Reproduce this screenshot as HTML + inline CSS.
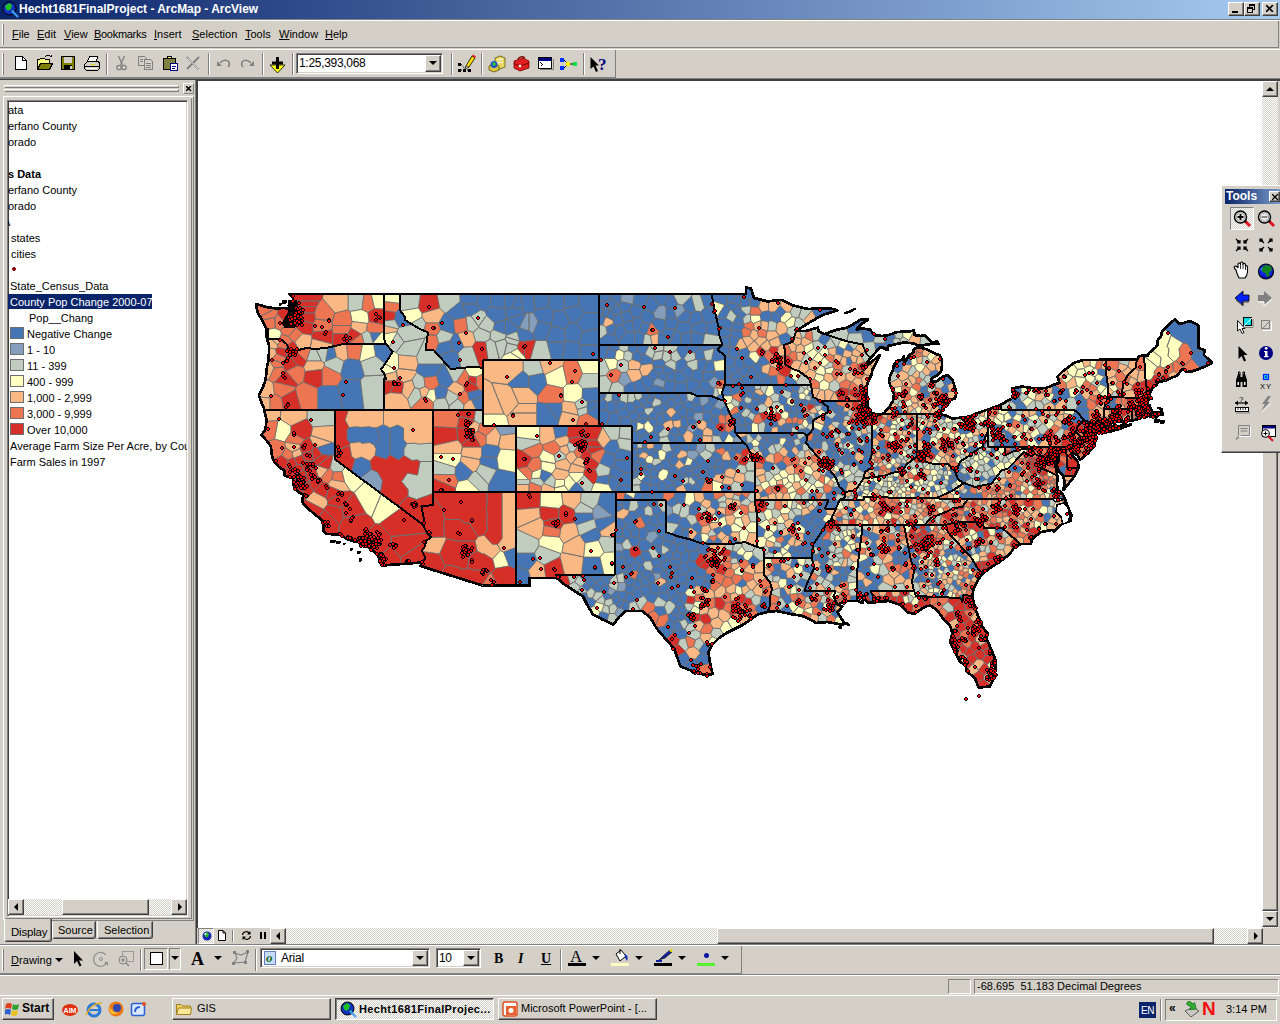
<!DOCTYPE html>
<html><head><meta charset="utf-8"><title>Hecht1681FinalProject - ArcMap - ArcView</title>
<style>
*{box-sizing:border-box;margin:0;padding:0}
html,body{width:1280px;height:1024px;overflow:hidden;background:#d4d0c8;font-family:"Liberation Sans",sans-serif;font-size:11px;color:#000}
.a{position:absolute}
.t{position:absolute;white-space:nowrap;line-height:13px;font-size:11px}
u{text-decoration:underline}
.raised{border:1px solid;border-color:#fff #404040 #404040 #fff;box-shadow:inset -1px -1px 0 #808080,inset 1px 1px 0 #d4d0c8;background:#d4d0c8}
.sunken{border:1px solid;border-color:#808080 #fff #fff #808080;box-shadow:inset 1px 1px 0 #404040,inset -1px -1px 0 #d4d0c8}
.sunk1{border:1px solid;border-color:#808080 #fff #fff #808080}
.rais1{border:1px solid;border-color:#fff #808080 #808080 #fff}
.dither{background-image:repeating-conic-gradient(#fff 0 25%,#d4d0c8 0 50%);background-size:2px 2px}
.sep{position:absolute;width:2px;border-left:1px solid #808080;border-right:1px solid #fff}
.arr{position:absolute;width:0;height:0;border:4px solid transparent}
.sb{position:absolute;width:16px;height:16px}
</style></head><body>
<!-- TITLE BAR -->
<div class="a" style="left:0;top:0;width:1280px;height:19px;background:linear-gradient(90deg,#0a246a,#a6caf0)"></div>
<svg class="a" style="left:2px;top:1px" width="17" height="17" viewBox="0 0 17 17"><circle cx="7.5" cy="7.5" r="6.5" fill="#1030c0" stroke="#000" stroke-width="1"/><path d="M3 5 L7 2 L10 4 L9 8 L6 10 L4 8Z" fill="#20c020"/><path d="M9 10 L12 9 L11 12Z" fill="#20c020"/><path d="M10 10 L16 16" stroke="#40a0ff" stroke-width="2"/></svg>
<div class="t" style="left:19px;top:2px;font-size:12px;font-weight:bold;color:#fff;line-height:14px;letter-spacing:-0.03px">Hecht1681FinalProject - ArcMap - ArcView</div>
<div class="a raised" style="left:1228px;top:2px;width:16px;height:14px"><div class="a" style="left:3px;top:8px;width:6px;height:2px;background:#000"></div></div>
<div class="a raised" style="left:1244px;top:2px;width:16px;height:14px"><div class="a" style="left:4px;top:1px;width:6px;height:6px;border:1px solid #000;border-top-width:2px"></div><div class="a" style="left:2px;top:4px;width:6px;height:6px;border:1px solid #000;border-top-width:2px;background:#d4d0c8"></div></div>
<div class="a raised" style="left:1262px;top:2px;width:16px;height:14px"><svg class="a" style="left:3px;top:2px" width="8" height="7"><path d="M0 0L7 7M7 0L0 7" stroke="#000" stroke-width="1.6"/></svg></div>
<div class="a" style="left:0;top:19px;width:1280px;height:1px;background:#808080"></div>
<div class="a" style="left:0;top:20px;width:1280px;height:1px;background:#fff"></div>
<!-- MENU BAR -->
<div class="a" style="left:0;top:21px;width:1279px;height:27px;border-right:1px solid #808080;border-bottom:1px solid #808080"></div>
<div class="a" style="left:2px;top:24px;width:2px;height:21px;border-left:1px solid #fff;border-right:1px solid #808080"></div>
<div class="t" style="left:12px;top:28px"><u>F</u>ile</div>
<div class="t" style="left:37px;top:28px"><u>E</u>dit</div>
<div class="t" style="left:64px;top:28px"><u>V</u>iew</div>
<div class="t" style="left:94px;top:28px;letter-spacing:-0.3px"><u>B</u>ookmarks</div>
<div class="t" style="left:154px;top:28px"><u>I</u>nsert</div>
<div class="t" style="left:192px;top:28px"><u>S</u>election</div>
<div class="t" style="left:245px;top:28px"><u>T</u>ools</div>
<div class="t" style="left:279px;top:28px"><u>W</u>indow</div>
<div class="t" style="left:325px;top:28px"><u>H</u>elp</div>
<!-- STANDARD TOOLBAR -->
<div class="a" style="left:0;top:49px;width:1280px;height:1px;background:#fff"></div>
<div class="a" style="left:0;top:50px;width:616px;height:28px;border-right:1px solid #808080;border-bottom:1px solid #808080"></div>
<div class="a" style="left:2px;top:53px;width:2px;height:22px;border-left:1px solid #fff;border-right:1px solid #808080"></div>
<div class="a" style="left:0;top:78px;width:1280px;height:1px;background:#808080"></div>
<div class="a" style="left:0;top:79px;width:1280px;height:1px;background:#404040"></div>
<svg class="a" style="left:0;top:50px" width="616" height="28" shape-rendering="crispEdges">
<!-- new -->
<path d="M15.500 6.500H22.500L26.500 10.500V19.500H15.500Z" fill="#fff" stroke="#000"/><path d="M22.500 6.500V10.500H26.500" fill="none" stroke="#000"/>
<!-- open -->
<path d="M37.500 19.500V9.500H39.500L40.500 8.500H44.500L45.500 9.500H49.500V12.500" fill="#ffff80" stroke="#000"/><path d="M37.500 19.500L40.500 13.500H52.500L49.500 19.500Z" fill="#808000" stroke="#000"/><path d="M45 7Q48 4 51 7" fill="none" stroke="#000"/><path d="M49 7H52V4Z" fill="#000"/>
<!-- save -->
<rect x="61.500" y="6.500" width="13" height="13" fill="#808000" stroke="#000"/><rect x="64" y="7" width="8" height="6" fill="#d4d0c8"/><rect x="64" y="15" width="8" height="5" fill="#000"/><rect x="70" y="16" width="2" height="3" fill="#d4d0c8"/>
<!-- print -->
<path d="M87.500 11.500L89.500 6.500H97.500L96.500 11.500" fill="#fff" stroke="#000"/><path d="M84.500 14.500L87.500 11.500H98.500L99.500 13.500V18.500L97.500 20.500H86.500L84.500 18.500Z" fill="#d4d0c8" stroke="#000"/><path d="M85 16.500H99" stroke="#000"/><rect x="91" y="14" width="4" height="1" fill="#e0d000"/><path d="M86 18.500H97" stroke="#fff"/>
<!-- cut (gray) -->
<g stroke="#808080" fill="none" stroke-width="1.300" shape-rendering="auto"><path d="M118.500 6L122.500 15M124.500 6L120.500 15"/><circle cx="119" cy="17.500" r="2.200"/><circle cx="124" cy="17.500" r="2.200"/></g>
<!-- copy (gray) -->
<g stroke="#808080" fill="#d4d0c8"><path d="M138.500 6.500H144.500L146.500 8.500V15.500H138.500Z"/><path d="M144.500 9.500H150.500L152.500 11.500V19.500H144.500Z"/><path d="M146 13.500H151M146 15.500H151M146 17.500H151M140 9.500H143M140 11.500H143" fill="none"/></g>
<!-- paste -->
<rect x="163.500" y="8.500" width="12" height="11" fill="#808040" stroke="#000"/><path d="M166.500 8.500L168 6.500H171L172.500 8.500Z" fill="#ffff80" stroke="#000"/><rect x="170.500" y="13.500" width="7" height="7" fill="#fff" stroke="#000080"/><path d="M172 16.500H176M172 18.500H175" stroke="#000080"/>
<!-- delete X gray -->
<g shape-rendering="auto"><path d="M187 7L199 20M199 7L187 19" stroke="#808080" stroke-width="1.800"/><path d="M188 8L200 21" stroke="#fff" stroke-width=".8"/></g>
<!-- undo / redo gray -->
<g shape-rendering="auto" fill="none" stroke="#808080" stroke-width="1.600"><path d="M220 13Q225 8 229 12Q230 15 228 17"/><path d="M251 13Q246 8 242 12Q241 15 243 17"/></g>
<path d="M217 11V16H222Z" fill="#808080" shape-rendering="auto"/><path d="M254 11V16H249Z" fill="#808080" shape-rendering="auto"/>
<!-- add data -->
<g shape-rendering="auto"><path d="M270 15H285L277.500 23Z" fill="#ffff00" stroke="#000" stroke-width=".8"/><path d="M277.500 7V19M272 13H283" stroke="#000" stroke-width="3"/></g>
<!-- editor -->
<g shape-rendering="auto"><path d="M459 20H470M461 14L465 19" stroke="#000" stroke-dasharray="1 1"/><rect x="458" y="19" width="3" height="3"/><rect x="463" y="19" width="3" height="3"/><rect x="468" y="19" width="3" height="3"/><rect x="458" y="13" width="3" height="3"/><path d="M466 16L472 6L475 8L469 17L465.500 18.500Z" fill="#ffe000" stroke="#000" stroke-width=".8"/><path d="M472 6L473 4.500L476 6.500L475 8Z" fill="#e02020"/><path d="M466 16L469 17L465.500 18.500Z" fill="#fff" stroke="#000" stroke-width=".5"/></g>
<!-- arccatalog -->
<g shape-rendering="auto"><path d="M495 8L500 6L505 8V17L500 19L495 17Z" fill="#e8d860" stroke="#605000" stroke-width=".8"/><path d="M497 10L503 9M497 13L503 12" stroke="#fff"/><path d="M489 16L494 13L499 16V20L494 22L489 20Z" fill="#d8c840" stroke="#605000" stroke-width=".8"/><circle cx="494" cy="14.500" r="3.500" fill="#2050d0"/><path d="M492 13L495 12L496 15L493 16Z" fill="#30c030"/></g>
<!-- toolbox -->
<g shape-rendering="auto"><path d="M514 11L523 8L529 11V18L520 21L514 18Z" fill="#e02020" stroke="#800000" stroke-width=".8"/><path d="M514 13.500L520 16L529 13" stroke="#800000" fill="none"/><path d="M518 9Q521 5 525 8" fill="none" stroke="#800000" stroke-width="1.500"/><circle cx="520" cy="16" r="1.300" fill="#fff"/></g>
<!-- command window -->
<rect x="538.500" y="7.500" width="13" height="11" fill="#fff" stroke="#000"/><rect x="539" y="8" width="12" height="3" fill="#000080"/><path d="M540.500 12.500L542.500 14.500L540.500 16.500" fill="none" stroke="#000"/><path d="M540 19.500H553V9" fill="none" stroke="#808080"/>
<!-- modelbuilder -->
<rect x="560" y="8" width="4" height="4" fill="#0030ff"/><rect x="560" y="16" width="4" height="4" fill="#0030ff"/><path d="M564 10L568 14L564 18M570 14H574" fill="none" stroke="#000" shape-rendering="auto"/><circle cx="568" cy="14" r="2.300" fill="#ffee00" shape-rendering="auto"/><rect x="573" y="12" width="4" height="4" fill="#00e040"/>
<!-- whats this -->
<g shape-rendering="auto"><path d="M590.500 7V19L593.500 16.500L596 22L598 21L595.500 15.500H599Z" fill="#000"/><text x="598" y="20" font-family="Liberation Serif,serif" font-weight="bold" font-size="17" fill="#000080">?</text></g>
</svg>

<div class="sep" style="left:106px;top:53px;height:22px"></div>
<div class="sep" style="left:208px;top:53px;height:22px"></div>
<div class="sep" style="left:262px;top:53px;height:22px"></div>
<div class="sep" style="left:292px;top:53px;height:22px"></div>
<div class="sep" style="left:451px;top:53px;height:22px"></div>
<div class="sep" style="left:481px;top:53px;height:22px"></div>
<div class="sep" style="left:583px;top:53px;height:22px"></div>
<div class="a sunken" style="left:296px;top:53px;width:147px;height:21px;background:#fff"></div>
<div class="t" style="left:299px;top:57px;font-size:12px;letter-spacing:-0.3px">1:25,393,068</div>
<div class="a raised" style="left:425px;top:55px;width:16px;height:17px"><div class="arr" style="left:3px;top:5px;border-top-color:#000"></div></div>
<!-- LEFT PANEL -->
<div class="a" style="left:0;top:80px;width:196px;height:864px;background:#d4d0c8;border-right:1px solid #808080"></div>
<div class="a" style="left:196px;top:80px;width:1px;height:864px;background:#404040"></div>
<div class="a rais1" style="left:4px;top:85px;width:175px;height:3px"></div>
<div class="a rais1" style="left:4px;top:89px;width:175px;height:3px"></div>
<div class="a rais1" style="left:183px;top:83px;width:11px;height:11px"><svg class="a" style="left:2px;top:2px" width="6" height="6"><path d="M0 0L5 5M5 0L0 5" stroke="#000" stroke-width="1.5"/></svg></div>
<div class="a rais1" style="left:3px;top:96px;width:191px;height:825px"></div>
<div class="a rais1" style="left:5px;top:98px;width:187px;height:821px;border-color:#d4d0c8 #808080 #808080 #d4d0c8"></div>
<div class="a sunken" style="left:7px;top:100px;width:181px;height:817px;background:#fff;overflow:hidden">
 <div class="a" style="left:-2px;top:-2px;width:181px;height:800px">
  <div class="t" style="left:2px;top:5px">ata</div>
  <div class="t" style="left:2px;top:21px">erfano County</div>
  <div class="t" style="left:2px;top:37px">orado</div>
  <div class="t" style="left:2px;top:69px;font-weight:bold">s Data</div>
  <div class="t" style="left:2px;top:85px">erfano County</div>
  <div class="t" style="left:2px;top:101px">orado</div>
  <div class="t" style="left:-3px;top:117px">A</div>
  <div class="t" style="left:5px;top:133px">states</div>
  <div class="t" style="left:5px;top:149px">cities</div>
  <div class="a" style="left:6px;top:168px;width:4px;height:4px;border-radius:2px;background:#c00000;border:1px solid #600"></div>
  <div class="t" style="left:4px;top:181px">State_Census_Data</div>
  <div class="a" style="left:2px;top:195px;width:144px;height:15px;background:#0a246a"></div>
  <div class="t" style="left:4px;top:197px;color:#fff">County Pop Change 2000-07</div>
  <div class="t" style="left:23px;top:213px">Pop__Chang</div>
  <div class="a" style="left:4px;top:228px;width:14px;height:12px;background:#4575b5;border:1px solid #6e6e6e"></div>
  <div class="t" style="left:21px;top:229px">Negative Change</div>
  <div class="a" style="left:4px;top:244px;width:14px;height:12px;background:#849ebc;border:1px solid #6e6e6e"></div>
  <div class="t" style="left:21px;top:245px">1 - 10</div>
  <div class="a" style="left:4px;top:260px;width:14px;height:12px;background:#c0ccbe;border:1px solid #6e6e6e"></div>
  <div class="t" style="left:21px;top:261px">11 - 399</div>
  <div class="a" style="left:4px;top:276px;width:14px;height:12px;background:#ffffbf;border:1px solid #6e6e6e"></div>
  <div class="t" style="left:21px;top:277px">400 - 999</div>
  <div class="a" style="left:4px;top:292px;width:14px;height:12px;background:#fab984;border:1px solid #6e6e6e"></div>
  <div class="t" style="left:21px;top:293px">1,000 - 2,999</div>
  <div class="a" style="left:4px;top:308px;width:14px;height:12px;background:#ed7551;border:1px solid #6e6e6e"></div>
  <div class="t" style="left:21px;top:309px">3,000 - 9,999</div>
  <div class="a" style="left:4px;top:324px;width:14px;height:12px;background:#d62f27;border:1px solid #6e6e6e"></div>
  <div class="t" style="left:21px;top:325px">Over 10,000</div>
  <div class="t" style="left:4px;top:341px">Average Farm Size Per Acre, by Cou</div>
  <div class="t" style="left:4px;top:357px">Farm Sales in 1997</div>
 </div>
 <!-- h scrollbar -->
 <div class="a dither" style="left:0px;top:798px;width:179px;height:16px"></div>
 <div class="a raised" style="left:0px;top:798px;width:16px;height:16px"><div class="arr" style="left:1px;top:3px;border-right-color:#000"></div></div>
 <div class="a raised" style="left:163px;top:798px;width:16px;height:16px"><div class="arr" style="left:6px;top:3px;border-left-color:#000"></div></div>
 <div class="a raised" style="left:54px;top:798px;width:87px;height:16px"></div>
</div>
<!-- tabs -->
<div class="a" style="left:52px;top:921px;width:44px;height:18px;border:1px solid;border-color:#d4d0c8 #404040 #404040 #fff;border-radius:0 0 3px 3px;box-shadow:inset -1px -1px 0 #808080"></div>
<div class="t" style="left:58px;top:923px;font-size:11px;line-height:14px">Source</div>
<div class="a" style="left:97px;top:921px;width:56px;height:18px;border:1px solid;border-color:#d4d0c8 #404040 #404040 #fff;border-radius:0 0 3px 3px;box-shadow:inset -1px -1px 0 #808080"></div>
<div class="t" style="left:104px;top:923px;font-size:11px;line-height:14px">Selection</div>
<div class="a" style="left:4px;top:919px;width:48px;height:23px;background:#d4d0c8;border:1px solid;border-color:#d4d0c8 #404040 #404040 #fff;border-top:none;border-radius:0 0 3px 3px;box-shadow:inset -1px -1px 0 #808080"></div>
<div class="t" style="left:11px;top:925px;font-size:11.5px;line-height:14px;letter-spacing:-0.2px">Display</div>
<!-- MAP AREA -->
<div class="a" style="left:197px;top:80px;width:1083px;height:848px;background:#fff;border-left:1px solid #404040;border-top:1px solid #404040"></div>
<div class="a" style="left:198px;top:81px;width:1064px;height:847px;overflow:hidden">
<svg width="1064" height="847" viewBox="198 81 1064 847" style="position:absolute;left:0;top:0" shape-rendering="crispEdges">
<g stroke="#707070" stroke-width=".8" stroke-linejoin="round">
<path fill="#4575b5" d="M381.5 332.5l-11.5 0 3 10.5zM317.5 409.5l17 0 8.5 0-5.5-24-15.5 0-4.5 2.5zM360.5 380l-18.5-1.5-4.5 7 5.5 24 21 0zM342 378.5l18.5 1.5 4-4-4-14.5-1-1.5-11.5-1.5-4 2.5-3.5 13zM325.5 361.5l11-4.5-2.5-11-6 1.5zM385 363.5l4-5.5 3.5-6.5-7-8-12 0 2 12.5zM317 447.5l5 7 8.5 1 2.5-0.5 1.5-1 0-11.5-2 0zM347 439l3 4 10-1 2.5 1.5 7-1 4.5 2.5 6-5.5-3-12-5.5 0-1.5-1-10 1-2-1-9 1-2 2.5zM383.5 424.5l-6.5 3 3 12-6 5.5 2 4-1 6.5 11 3.5 4-4 0-6 0-9.5 0-11.5zM397.5 425l-7.5 3 0 11.5 0 9.5 0 6 8.5 5 5.5-4.5 0-6.5 3-5.5-3.5-4 0-11.5zM371.5 469.5l-1.5-8.5-8.5-4-6.5 2-3.5 12.5 9 6.5zM412.5 324.5l-7.5-4.5 0.5-2.5-5.5-7 0-2.5-4.5 4.5-1 7 4.5 8zM442.5 364l-24.5 0-2 6.5 0.5 2 7.5 5 12.5-1.5zM447.5 388.5l6-6.5-9.5-19-1.5 1-6 12 2.5 9zM471.5 400.5l11-4 0-5.5-3.5-1.5-11.5 3 1.5 7.5zM476 409.5l6.5 0 0-13-11 4zM436 399l9.5-1 2.5-8.5-0.5-1-8.5-3.5-4.5 4zM446 313l-1.5 0-6 10 2 6.5 13 4.5 1.5-1-1.5-13zM477 304l-14.5 0 4 12.5 4.5-0.5 10-6zM460 301.5l2.5 2.5 14.5 0 1-10-18.5 0zM490.5 307l0-13-12.5 0-1 10 4 6 4 1.5zM490.5 307l14 1 0-14-14 0zM520.5 294l-2.5 0-6 13 11 2.5zM505.5 319.5l0.5-0.5-0.5-10-1-1-14-1-5.5 4.5 1.5 4 8 7.5zM505.5 334.5l0-15-11 3.5-1.5 6.5zM519.5 327.5l7-14.5-20 6 12.5 9zM453.5 334l-3.5 6.5 3 10 5 2.5 6-6-6.5-13.5-2.5-0.5zM453 350.5l-3-10-11.5 3-3.5 8.5 3.5 3.5zM438.5 355.5l4.5 5 7.5 8.5 10.5-1-3-15-5-2.5zM524.5 341l10.5-1-2-6.5-4-2.5-9.5-3.5-0.5 0.5-2 3.5 2.5 9.5 0 0.5zM466.5 316.5l-4-12.5-2.5-2.5-14 11.5 7.5 7 12.5-2.5zM504.5 308l1 1 6.5-2 6-13-13.5 0zM523 309.5l3.5 3.5 2.5 0 4-0.5 2-2.5-1.5-16-13 0zM535 310l13.5-3.5 1-12.5-16 0zM564 309.5l0.5-1-1-14.5-14 0-1 12.5 5.5 5zM564.5 308.5l14-3 1-11.5-16 0zM598.5 312.5l0-18.5-19 0-1 11.5 6.5 7zM526.5 313l-3.5-3.5-11-2.5-6.5 2 0.5 10 0.5 0zM538 321l13 3.5 3-13-5.5-5-13.5 3.5-2 2.5zM551 324.5l0.5 1.5 13 3 5.5-6-6-13.5-10 2zM576 323l9-10.5-6.5-7-14 3-0.5 1 6 13.5zM585 312.5l-9 10.5 7 8.5 15.5-3 0-16zM535.5 340.5l10 0 6-14.5-0.5-1.5-13-3.5-5 12.5 2 6.5zM551.5 326l-6 14.5 1.5 1.5 18 0 1-1-1.5-12zM564.5 329l1.5 12 13 1.5 4-11-7-8.5-6 0zM583 331.5l-4 11 1.5 2.5 18 0 0-0.5 0-16zM565 342l-3 18 17.5 0 1-15-1.5-2.5-13-1.5zM580.5 345l-1 15 19 0 0-15zM565 342l-18 0 4.5 18 10.5 0zM506 335.5l11-4 2-3.5-12.5-9-0.5 0-0.5 0.5 0 15zM547 384.5l-2-10-1.5-1.5-14.5 3-0.5 11.5 9 8.5zM529 376l-6-5.5-16 14 4.5 3 17 0zM582.5 388.5l-0.5 9.5 5.5 4 11-1 0-8 0-5.5zM562 403l-17.5 0 14.5 18 3-9.5zM587.5 402l-0.5 4.5 0.5 5.5 11-7 0-4zM536.5 413l0 13 21.5 0 1-5-14.5-18-7-1-1 1.5zM587.5 412l-0.5 1.5 11.5 7 0-15.5zM481.5 447l0 9 15.5 2 3.5-9-2-3-12.5-2zM496.5 470l2-1-1.5-11-15.5-2-2 3.5 0.5 4.5zM455 474.5l3 7 9.5-2 5.5-7.5-12.5-11-5 6zM498.5 469l-2 1-8 14.5-0.5 7.5 27.5 0 0-19.5zM555.5 438.5l11.5-3 1-9.5-15 0zM603.5 448.5l1.5 3 9 3.5 5.5-6.5-2.5-8.5-6.5 0-7 8zM614 455l-9-3.5-5.5 11.5 11 5 3-2 2-6zM619.5 448.5l-5.5 6.5 1.5 5 16 0 0-8.5zM615.5 460l-2 6 11.5 7 6.5-1 0-12zM613.5 466l-3 2-1.5 7 0.5 0.5 9.5 3.5 6-6zM608.5 484.5l1-9-0.5-0.5-11.5 1.5-2 6zM619 484.5l0-5.5-9.5-3.5-1 9 4 7.5zM625 473l-6 6 0 5.5 12.5 2 0-14.5zM540 478l4 4.5 8-8 0-1-10.5-4zM619 484.5l-6.5 7.5 3.5 0 15.5 0 0-5.5zM568.5 492l17 0-8-9.5-2 0-7 8.5zM509 566l6.5 3 0-21.5-12 4.5zM597.5 504l15 12 3 0 0.5-16 0-8-15 0zM575 513l-1 9.5 2.5 2.5 17.5-6-1.5-6zM594.5 519.5l2 8 3.5 4 15.5-10.5 0-5-3 0zM585 543l13.5-2.5 2.5-4.5-1-4.5-3.5-4-16.5 8zM600 557l-16.5 0-2 17.5 22.5 0zM528.5 570.5l8.5-10-2.5-7.5-19 0 0 13zM528.5 570.5l-13-4.5 0 19.5 14 0 0-7.5 1 0zM633 303.5l10.5 4.5 7-14-16.5 0zM609.5 309l-1.5-1-4 1-2.5 6.5 4 2 1 0 3-8zM610 294l-11.5 0 0 6.5 9 1 2.5-3zM619 303.5l-9-5-2.5 3 0.5 6.5 1.5 1 9-5zM669.5 343l0 1.5 11 0 1-10.5-6-4zM676.5 318l-3-9-7.5-1-0.5 10.5zM704.5 308l9.5-1.5-2.5-12.5-11.5 0zM610 298.5l9 5 2-2 0-7.5-11 0zM619 344.5l15.5 0 0-12-8 0-7.5 8.5zM619 341l7.5-8.5-4.5-8-5.5 1-2 9.5zM659.5 305.5l4.5 0 6.5-11.5-19.5 0zM607.5 301.5l-9-1 0 6 5.5 2.5 4-1zM677 318l1.5 3.5 10.5 1 2-9.5-6-2.5zM633.5 318l-1.5 2.5 2.5 11.5 4-0.5 4.5-9.5-3.5-4.5zM659.5 305.5l-8.5-11.5-0.5 0-7 14 0.5 1 9.5 4zM704.5 335l1.5-1.5 0.5-10-3-2.5-12 5-0.5 5.5zM634.5 332.5l0-0.5-2.5-11.5-8.5 2-1.5 2 4.5 8zM662 331.5l-3 0.5-0.5 1-0.5 11.5 11.5 0 0-1.5zM685 310.5l6 2.5 4.5-2-4-15-9 9zM623.5 322.5l-2.5-9-5.5 1-3 5.5 1 3.5 3 2 5.5-1zM691 313l-2 9.5 2.5 3.5 12-5-3-9.5-5-0.5zM703.5 321l3 2.5 10.5-3.5-2-8-1-5.5-9.5 1.5-4 3.5zM681.5 334l9.5-2 0-0.5 0.5-5.5-2.5-3.5-10.5-1-3 8 0 0.5zM664.5 319.5l1 8.5 10 1.5 3-8-1.5-3.5-0.5 0-11 0.5zM651.5 323l7.5 9 3-0.5 3.5-3.5-1-8.5-9.5-1.5zM616.5 325.5l-3-2-7.5 3.5 1 6.5 7.5 1.5zM691 332l-9.5 2-1 10.5 11 0zM643 322l-4.5 9.5 6 3 2-0.5 4-10.5zM598.5 315.5l0 9.5 4.5 0 2.5-7.5-4-2zM607 333.5l-8.5 6.5 0 4.5 20.5 0 0-3.5-4.5-6zM609.5 309l0 0.5 6 5 5.5-1 0.5-1-3-8.5zM606.5 317.5l6 2.5 3-5.5-6-5zM675.5 329.5l-10-1.5-3.5 3.5 7.5 11.5 6-13zM704.5 335l-13.5-3.5 0 0.5 0.5 12.5 11.5 0zM643.5 308l-10.5-4.5-0.5 0.5-3 7 4 7 6-0.5 4.5-8.5zM634.5 332.5l0 12 8.5 0 1.5-10-6-3-4 0.5zM621.5 312.5l8-1.5 3-7-11.5-2.5-2 2-0.5 0.5zM621 313.5l2.5 9 8.5-2 1.5-2.5-4-7-8 1.5zM664 305.5l2 2.5 7.5 1 4.5-5-5-10-2.5 0zM598.5 306.5l0 9 3 0 2.5-6.5zM644 309l-4.5 8.5 3.5 4.5 7.5 1.5 1-0.5 3.5-5-1.5-5zM719.5 336l-1-2.5 0-6.5-1.5-7-10.5 3.5-0.5 10zM634 382l-2.5-0.5-7.5 5 0 6.5 12 0zM608.5 347.5l7.5 4 3-2 0.5-5-12 0zM715 371l-1 1 0.5 4.5 4 3.5 6-0.5 0-9zM676.5 350l5 8.5 2.5 0 4.5-7-3-7-7 0zM645 354l4.5-9 0-0.5-11.5 0-0.5 6.5 5 4zM703 371.5l-5.5-2.5-4 1.5-3 8 9.5 4 3-2.5zM705 392.5l-5.5-6.5-8.5 7 7.5 3.5 6.5-0.5zM653 360.5l-1 3 1 3.5 10.5 0 1.5-2 0.5-2.5-3.5-3.5zM608.5 347.5l-1-3-9 0 0 14.5 6 0 1-0.5zM719 394.5l-3 3 4 2 4.5 1.5-2-6.5zM641 365l11-1.5 1-3-0.5-1.5-7.5-5-2.5 1-3 7zM714.5 388l-3.5-1.5-6 6 0 3.5 5-0.5 3 1zM714 348.5l4-4-18.5 0 0.5 3.5 3.5 3zM690.5 378.5l-3 1.5-1.5 2 2.5 11 2 0 0.5 0 8.5-7 0.5-3.5zM703.5 371.5l4-11-2.5-1.5-7.5 1.5 0 8.5 5.5 2.5zM675.5 370.5l0.5 0 5.5 0.5 5.5-5.5 0-3.5-3-3.5-2.5 0-5.5 3.5zM675 381.5l1 1 10-0.5 1.5-2-6-9-5.5-0.5zM711 386.5l-2.5-5-5.5-1.5-3 2.5-0.5 3.5 5.5 6.5zM639.5 362l3-7-5-4-5 2.5-0.5 6zM714 348.5l-2.5 11.5 2 1.5 11-2 0-4.5-7-5 5-5.5-4.5 0zM647.5 375.5l6.5 5.5 3.5-3 1-3.5-5.5-6zM715 371l-1.5-9.5-2-1.5-4 0.5-4 11 10.5 0.5zM708.5 381.5l6-5-0.5-4.5-10.5-0.5-0.5 0 0 8.5zM675.5 370.5l-9 4 0.5 5.5 8 1.5 1-11zM697.5 360.5l7.5-1.5-1.5-8-3.5-3-5 5 0.5 6.5zM663.5 387.5l-10-3-5.5 6.5 0 2 17.5 0zM665 381.5l-1.5 6 2 5.5 8 0 2.5-10.5-1-1-8-1.5zM688.5 351.5l6.5 1.5 5-5-0.5-3.5-14 0zM648 391l-7.5-12-6.5 3 2 11 12 0zM666.5 374.5l-3-2.5-5 2.5-1 3.5 7.5 3.5 2-1.5zM640.5 379l7.5 12 5.5-6.5 0.5-3.5-6.5-5.5-5.5 0.5zM653 368.5l5.5 6 5-2.5 0-5-10.5 0zM687.5 380l3-1.5 3-8-6.5-5-5.5 5.5zM665 365l-1.5 2 0 5 3 2.5 9-4zM608.5 347.5l-3 11 9.5 0 1-7zM628 350.5l4.5 3 5-2.5 0.5-6.5-9.5 0zM673.5 393l15 0-2.5-11-10 0.5zM673.5 400l2 3.5 7 0-4-10zM665 422l-3.5-8.5-3 0.5-2.5 4.5 2 5 5 1zM718.5 416l2.5-1.5-0.5-5-6.5-3-3.5 5.5 2 4zM685.5 417l1.5 1.5 6.5-1 1.5-4.5-2.5-3.5-5 0.5zM642 397l4.5 2 2.5-2.5-0.5-3.5-6.5 0zM612 400.5l4 2 4-2 0.5-7.5-8.5 0zM703.5 411.5l7 0.5 3.5-5.5-5.5-4.5-6 4zM728.5 433.5l0-1-3.5-2-3.5 1.5-2 4 3 6.5 1.5 0zM703 412.5l0.5-1-1-5.5-2-1.5-6 0.5-2 4.5 2.5 3.5zM625.5 407.5l4.5 5.5 5-2 1-3-3.5-5.5-5-0.5-1 1zM660.5 400l1 3 5-0.5 3-3.5-2.5-6-3.5 0zM666 412l3.5-4-3-5.5-5 0.5-1 1.5 2.5 8zM683.5 406l-0.5-2-0.5-0.5-7 0-2.5 4.5 3 4 2 0.5zM649 396.5l5.5 2 0.5-0.5 0.5-5-7 0zM653.5 410l-5.5 5.5 0.5 3.5 7.5-0.5 2.5-4.5zM669.5 399l-3 3.5 3 5.5 3.5 0 2.5-4.5-2-3.5zM678.5 393l-11.5 0 2.5 6 4 1 5-6.5zM655 398l5.5 2 3-7-8 0zM598.5 410.5l0 15.5 8 0 3.5-13-4-3zM620.5 418.5l-1.5 7.5 10 0 2.5-5-2.5-4.5zM673.5 426.5l-4.5 4.5 0.5 1 7 3.5 2-1-0.5-6.5zM720.5 409.5l0.5 5 4 1.5 5-2.5-3.5-7.5 0-1zM649.5 433l-1.5-0.5-8 4-0.5 6 10.5 0zM708.5 402l5.5 4.5 5-7.5-9-3.5-2 0zM680.5 420l1.5-2.5-4-5-2-0.5-5 6 0 2 1.5 1zM712.5 430.5l0 5 7 0.5 2-4-6-4zM719 423l-0.5-7-6 0-2 4.5 6 4zM692 401.5l2.5 3.5 6-0.5-0.5-8-1.5 0-2.5-1zM598.5 401l0 9.5 7.5-0.5 1.5-8-3-2.5zM649 396.5l-2.5 2.5 0.5 2.5 5 2.5 2.5-5.5zM697 422l-3.5-4.5-6.5 1 1.5 7 8-2zM712.5 416l-2-4-7-0.5-0.5 1 0 7.5 3.5 2.5 4-2zM636.5 430.5l-0.5 0.5 4 5.5 8-4-4-4.5zM656 418.5l-7.5 0.5-0.5 0.5 0 1 5.5 7 4.5-4zM693.5 435.5l9 0.5 0.5-0.5 0-5-5.5-2.5-5 5zM680.5 420l0.5 6 6 2.5 1.5-3-1.5-7-1.5-1.5-3.5 0.5zM607.5 402l-1.5 8 4 3 6-1 0-9.5-4-2zM640 436.5l-4-5.5-4.5 0 0 11.5 8 0zM604.5 399.5l0-0.5-4.5-6-1.5 0 0 8zM648 419.5l0.5-0.5-0.5-3.5-3.5-3.5-5.5 2.5 0 3zM671 418l-5-6-3 0.5-1.5 1 3.5 8.5 6-2zM639 400l-3.5-0.5-3 3 3.5 5.5 6-2.5zM678.5 393.5l4 10 0.5 0.5 4.5-3.5-1-7.5-8 0zM678.5 434.5l-2 1-2 7 11 0-2.5-7zM676.5 435.5l-7-3.5-2 4 2.5 6.5 4.5 0zM604.5 399l2.5-6-7 0zM643 406l4-4.5-0.5-2.5-4.5-2-3 3 3 5.5zM702.5 436l-9-0.5-2 7 11 0zM636 408l-1 3 4 3.5 5.5-2.5 0-3.5-1.5-2.5-1-0.5zM660 437.5l-1.5-3.5-5.5-3-3.5 2 0.5 9.5 9 0zM682 417.5l3.5-0.5 2-7-4-4-5.5 6.5zM661.5 413.5l1.5-1-2.5-8-7 2.5-0.5 0.5 0.5 2.5 5 4zM639 417.5l0-3-4-3.5-5 2-1 3.5 2.5 4.5 5.5 0zM616.5 412l4 6.5 8.5-2 1-3.5-4.5-5.5zM728.5 432.5l0 1 5 5 4-3-2-3-0.5-4zM716.5 424.5l-6-4-4 2 0 4.5 6 3.5 3-2.5zM687.5 430l-0.5-1.5-6-2.5-3 2 0.5 6.5 4.5 1zM658 423.5l-4.5 4-0.5 3.5 5.5 3 6-6-1.5-3.5zM692.5 409.5l2-4.5-2.5-3.5-4.5-1-4.5 3.5 0.5 2 4 4zM610 413l-3.5 13 12.5 0 1.5-7.5-4-6.5-0.5 0zM652 404l-5-2.5-4 4.5 1.5 2.5 8.5-1 0.5-0.5zM631.5 421l-2.5 5 2.5 0 0 5 4.5 0 0.5-0.5 1-8.5-0.5-1zM637.5 422l6.5 2.5 4-4 0-1-9-2-2 3.5zM620 400.5l-4 2 0 9.5 0.5 0 9-4.5 1-4.5zM679 469l3.5 5 2.5 0.5 2-3.5-2.5-5.5zM636.5 448.5l-5 0.5 0 7 6.5-0.5zM679 459.5l5.5 6 3-8.5-0.5-1-8 3zM693 474l-2.5 3 5 5 3.5-4-0.5-2zM722 458.5l-5 1.5-2.5 7 0.5 0 7 0 1.5-7zM671.5 449.5l8-3.5 0.5-3.5-11 0zM663 480.5l4 6.5 6.5-2.5 0-2.5-7-4zM638 461.5l-6 2 4.5 4.5 3-1 1.5-1.5 0-1zM650 485l8.5-0.5 2.5-4-3-3.5-7 0.5zM654 466l-0.5 2.5 5.5 3.5 4-3-2-6.5zM661 480.5l-2.5 4 1.5 7.5 5.5 0 1.5-5-4-6.5zM646 469l-3 3.5 2 4 5 0 0.5-6zM701.5 489.5l-6.5-6-2.5 1.5-3 7 12.5 0zM636.5 468l-1 3 4 2 2-1-2-5zM748 448l-1.5-3-3-2.5-5.5 0 0.5 3.5 4 3.5zM633.5 472l2-1 1-3-4.5-4.5-0.5 0 0 8.5zM682.5 474l-5.5 4.5 5 3 4-5-1-2zM722 455.5l-7-4.5-3 2 0 2.5 5 4.5 5-1.5zM653.5 448l-5 1-1.5 4 1 2.5 3.5 0.5 4-6zM712.5 479.5l3.5-5-1-7.5-0.5 0-3.5-0.5-4.5 5 2.5 7.5zM647 453l1.5-4-2-2-4 0-1 1 1.5 4zM646 461.5l-0.5-2.5-6.5-2-1 4.5 3 3zM722 467l3.5 3 4.5-2-0.5-7.5-6-0.5zM723 447.5l2.5 3.5 2.5 0 2.5-1.5 0.5-7-8 0zM705.5 460.5l-6.5-6.5-4.5 5.5 5 7zM673.5 482l3.5-3.5-2.5-4-6-1.5-2 5zM687 471l-2 3.5 1 2 2.5 1.5 2-1 2.5-3-1-2.5zM687 492l2.5 0 3-7-4-2.5-5 2.5zM643 452l-1.5-4-4 0-1 0.5 1.5 7 0.5 0.5zM676.5 456l-2-0.5-5.5 5 2 4.5 4 0.5 4-6 0-0.5zM715 467l1 7.5 8.5-0.5 1-4-3.5-3zM641.5 482l-2 2.5 1.5 7.5 8 0 1-7zM651 477.5l-1-1-5 0-4 4.5 0.5 1 8.5 3zM721 492l11 0-1-7-8.5-1zM738 442.5l-7 0-0.5 7 4.5 1 3.5-4.5zM688.5 450.5l7.5 0 1-8-8.5 0zM715.5 450l7.5-2.5 0-5-9 0zM658.5 484.5l-8.5 0.5-1 7 11 0zM711 466.5l-4.5-5.5-1-0.5-6 6 0 0.5 2 3 5 1.5zM681.5 450l-2-4-8 3.5 0 1 3 5 2 0.5zM674.5 474.5l2.5 4 5.5-4.5-3.5-5-0.5 0zM687 471l5 0.5 1-2.5-2.5-4-6 0.5zM647.5 442.5l-5.5 0 0.5 4.5 4 0zM652 463.5l-4.5-0.5-1.5 6 4.5 1.5 3-2 0.5-2.5zM695.5 482l-0.5 1.5 6.5 6 4-9-6.5-2.5zM671.5 450.5l-5.5 2-1 6.5 4 1.5 5.5-5zM665 459l-3.5 1.5-0.5 2 2 6.5 4.5 1 3.5-5-2-4.5zM655.5 450l-4 6 2 2.5 5.5 0-1-7.5zM665.5 492l10.5 0 0-4-2.5-3.5-6.5 2.5zM661.5 449.5l1.5-7-9 0-0.5 5.5 2 2 2.5 1zM693 474l5.5 2 3-6-2-3-6.5 2-1 2.5zM641 465.5l5 3.5 1.5-6-1.5-1.5-5 3zM636.5 448.5l1-0.5-0.5-5.5-5.5 0 0 6.5zM742.5 449.5l-4-3.5-3.5 4.5 1.5 2.5 4.5 1zM633.5 472l3 5.5 1 0 2-4.5-4-2zM731 459l2 0 3.5-6-1.5-2.5-4.5-1-2.5 1.5zM639.5 467l2 5 1.5 0.5 3-3.5-5-3.5zM650.5 470.5l-0.5 6 1 1 7-0.5 1-5-5.5-3.5zM636.5 477.5l-3-5.5-2 0 0 7.5zM717 460l-5-4.5-5.5 5.5 4.5 5.5 3.5 0.5zM639 457l-0.5-1-0.5-0.5-6.5 0.5 0 7.5 0.5 0 6-2zM742 492l12.5 0 0-1.5 0-7.5-9.5-2.5-3.5 3zM730 468l5 2 4-6-1-2-5-3-2 0-1.5 1.5zM671 465l-3.5 5 1 3 6 1.5 4-5.5-3.5-3.5zM693 469l6.5-2 0-0.5-5-7-1.5 0.5-2.5 5zM673.5 484.5l2.5 3.5 7-3.5-1-3-5-3-3.5 3.5zM706.5 471.5l-5-1.5-3 6 0.5 2 6.5 2.5 3.5-1.5zM688.5 450.5l0-8-8.5 0-0.5 3.5 2 4 5.5 2zM705 543.5l7 0.5 2 0 0-2-5-4.5zM701 533l-3.5 0-5.5 7 8.5 3 1.5 0zM674 496.5l4.5 6.5 3.5 1.5 2.5-1 1.5-11.5-11.5 0zM702 526.5l-4-4.5-0.5 0-6 3.5-0.5 2 6.5 5.5 3.5 0zM654 500l9 0 0.5-8-8.5 0zM704.5 499l6.5 2 3-2.5-0.5-6.5-10.5 0zM698 510.5l-8.5-5-0.5 9 6.5 1 3-3.5zM665.5 503l0 1 6.5 3 6.5-4-4.5-6.5zM678 524l0.5 1.5 4.5 3.5 5.5 0 2.5-1.5 0.5-2-5.5-8-5 0zM726.5 535.5l2.5 0 1-0.5 2-3-1.5-6.5-3.5-1-5.5 3 0 3.5zM716.5 510l-0.5 0-1.5 4 4.5 5 6-3 0.5-0.5zM645.5 492l-2 0-1.5 8 10 0zM655 492l-9.5 0 6.5 8 2 0zM717 499.5l-3-1-3 2.5-0.5 5.5 5.5 3.5 0.5 0 2.5-3 0-4.5zM721.5 540.5l-4.5-3.5-3 5 0 2 8 0zM701.5 505l-0.5-2-6-2-5.5 4.5 8.5 5zM634 498.5l0 1.5 8 0 1.5-8-8 0zM721.5 527.5l-1.5-1-7.5 3 4.5 6 4.5-4.5zM740 542.5l-10-7.5-1 0.5 0 8 6 0 5-0.5zM625 493l-1.5 7 10.5 0 0-1.5zM683 529l-4.5-3.5-6.5 8.5 6.5 2.5 2.5 0.5zM688.5 529l-5.5 0-2 8 8 2.5zM673 513l-7.5 4.5 0 4.5 12.5 2 3-6.5-2-2.5zM740.5 502.5l6-4.5-4.5-4-2.5 2 0 4.5zM648 500l-11 0 1.5 6.5 6 2 3.5-3zM643.5 577l3.5 1 5-6-0.5-1-6-1.5-3 4zM674 542.5l1.5-7-8.5-3-4.5 5 1.5 2.5 9 2.5zM685.5 583.5l2.5 5 5.5 0.5 3-3.5-1-6-8 0zM687.5 539l-9-2.5-3-1-1.5 7 3 2 8.5-1zM618.5 597l2 2.5 4 1 0.5 0 2-7.5-2-2-6.5 0.5zM610 580l5.5-5.5-0.5-0.5 0 0.5-9.5 0zM581.5 586l5.5 5.5 4-3.5-5.5-6-0.5 0.5zM592 588l4-5.5-5.5-5.5-5 5 5.5 6zM667.5 592l-8 0.5-1.5 1.5 0 2.5 8.5 5.5 3-1.5 0.5-1zM667.5 614.5l1 4.5 6 3.5 3.5-1.5-0.5-5.5-6.5-2.5zM686 617.5l-1 1.5 3 5 6-1.5 0.5-0.5-3-5zM697.5 550l-9 1.5 1 8.5 5.5 1.5 5-8zM659.5 592.5l0-6-5-4-4 1.5-1 1.5 1 6 7.5 2.5zM652 572l-5 6 3.5 6 4-1.5 1-2-2.5-7.5zM643.5 596l1.5 1 5.5-5.5-1-6-7.5 0.5-2.5 2.5zM621.5 551l1 6.5 2 1.5 6-3.5-1-6-6-0.5zM684.5 605.5l-5.5 2.5 1 5 4 1 3-3.5zM622 505l1.5 3.5 5 2 2-10.5-7 0zM687 610.5l-3 3.5 2 3.5 5.5-0.5 1-3.5-1.5-3zM609 614l-7.5-2.5-1.5 0.5-2.5 5 5 2.5 4.5 2zM652.5 558.5l-4-8-7 1.5-0.5 2 4 7.5 5.5-0.5zM690 658.5l-4.5-7-8.5 5 3.5 10 2.5 1.5zM648 505.5l4 2.5 5.5-3 1-5-10.5 0zM653 567l-1.5 4 0.5 1 1 1 7 0.5 3-4-2-4zM702 587l2 3 6.5-1 0-7-5.5-1.5zM746.5 585l0-3-4-3.5-6.5 6.5 5.5 2.5zM676 580.5l1.5 3.5 8-0.5 2-4-1.5-5.5-2-0.5-8 4zM736.5 558l1.5-3.5-1.5-2.5-4-1.5-1 0.5-1.5 4.5 1.5 3zM622 505l1.5-5-7.5 0-0.5 4.5zM754 566.5l6.5-5.5-7.5-6-5 6 1 3zM704 577.5l-6-0.5-2.5 2.5 1 6 5.5 1.5 3-6.5zM662.5 511.5l-6 4 2.5 9 6.5 0 0-12.5zM666 582.5l3 7 7-0.5 1.5-5-1.5-3.5zM676 577.5l8-4-4.5-5.5-5.5 3.5-0.5 3zM635 511l-6 0-1 3.5 5.5 7 0.5 0.5 5-5zM592.5 598l-4.5-0.5-3 3 2.5 5 2 3 4.5-2.5 2-4 0-1zM633 585.5l-7-1-1 6.5 2 2 5 0 3.5-4.5zM675.5 606.5l-4.5 6.5 6.5 2.5 2.5-2.5-1-5zM640.5 580.5l1.5 5.5 7.5-0.5 1-1.5-3.5-6-3.5-1zM620.5 599.5l-5 5.5 2 3 3.5 0 3.5-7.5zM649.5 522.5l7.5 3.5 2-1.5-2.5-9-3.5-1-2.5 1.5zM695.5 579.5l2.5-2.5-2-7-7 0.5-3 3.5 1.5 5.5zM655 606.5l-1 4 5 5.5 8-2-2.5-7.5zM639.5 528.5l-0.5 9.5 1.5 1.5 5-0.5 3-6.5-4-5.5zM631 536l0-4.5-6-4.5-2 1.5-0.5 7.5 3.5 3 2 0zM664 554l-2.5-0.5-2.5 1-1.5 3 4 5.5 6-3zM596 582.5l5.5 5 4.5-3-5-6zM623 519l2.5 6.5 8-4-5.5-7zM664 540l-1.5-2.5-4.5-1.5-7 7.5 1 2.5 9.5 0 1-1zM668 574.5l-2.5 5.5 0.5 2.5 10-2 0-3-2.5-3zM669 589.5l-3-7-6.5 4 0 6 8-0.5zM676 589l-7 0.5-1.5 2.5 2.5 7.5 8-6.5zM687.5 596l-2.5-3-5 1 0 6 5 3.5 1-0.5zM668.5 619l-4 7 8.5 6 1.5-9.5zM687 636l0.5-3-2.5-4-2-0.5-10 3.5 0 1 6.5 6.5 6-1.5zM674 571.5l-3.5-5-5.5 3.5 3 4.5 5.5 0zM640.5 539.5l-1.5-1.5-8-2-3 3 4 7.5 6-0.5zM625.5 572.5l-2 0.5 1 9.5 0.5 0 6-5-1-3zM635.5 588.5l-3.5 4.5 3.5 7 8-4-4-7.5zM611 595.5l0.5 3 0.5 0.5 6.5-2 0-5.5-1.5-1-1 0zM760 603.5l-4 2.5-0.5 3.5 3.5 5 8.5-2.5 1-3.5zM622.5 557.5l-1-6.5-6-0.5 0 8zM683 668l10.5 3.5 3.5 1 2-6.5-3.5-7-5.5-0.5zM673 542.5l-9-2.5-1.5 5 6.5 4zM650.5 591.5l-5.5 5.5 2.5 4 6 2.5 4.5-7 0-2.5zM645.5 539l-5 0.5-2.5 6.5 3.5 6 7-1.5 3.5-4.5-1-2.5zM661.5 563l-0.5 2.5 2 4 2 0.5 5.5-3.5 0.5-2.5-1-3.5-2.5-0.5zM611 595.5l-3.5-3-5 1 0 2 2.5 4.5 6.5-1.5zM661.5 553.5l0-7.5-9.5 0 7 8.5zM635.5 579l5 1.5 3-3.5-1-3.5-4.5-1zM634.5 562l0-4-4-2.5-6 3.5 0 4 4 3 2.5-0.5zM673 633l0-1-8.5-6-8 1.5 0.5 1.5 9 10zM699 666l11-2.5-0.5-3.5-0.5-5-9-1.5-4.5 5.5zM676 589l2 4 2 1 5-1 3-4.5-2.5-5-8 0.5zM760 603.5l8.5 5 1.5-3 0-8-7.5-2-1.5 1zM635 579l-2 6.5 2.5 3 4 0 2.5-2.5-1.5-5.5-5-1.5zM615.5 574.5l1 0.5 6-2-2-7-5-1-0.5 9zM679.5 568l0.5-2.5-9-1.5-0.5 2.5 3.5 5zM615.5 517.5l0 10 7.5 1 2-1.5 0.5-1.5-2.5-6.5zM684.5 605.5l0.5-2-5-3.5-5.5 4 1 2.5 3.5 1.5zM590.5 577l5.5 5.5 5-4 1-4-11.5 0zM645 561.5l-4-7.5-6.5 4 0 4 5.5 3 3-0.5zM680 559.5l1.5 3 5 0 3-2.5-1-8.5-1.5-0.5-6 2.5zM640 565l-5.5-3-3.5 3.5 2.5 5 3.5 0.5zM670 599.5l-0.5 1 5 3.5 5.5-4 0-6-2-1zM627 593l-2 7.5 4.5 2.5 5.5-2 0.5-1-3.5-7zM709 655l-0.5-3 2-4-4-4.5-2.5-0.5-5 7.5 1 3zM644.5 527l4 5.5 6.5-1.5 2-5-7.5-3.5-4.5 2.5zM658 536l4.5 1.5 4.5-5-1.5-0.5 0-7.5-6.5 0-2 1.5-2 5zM689 570.5l7-0.5 2-3-3-5.5-5.5-1.5-3 2.5zM684 614l-4-1-2.5 2.5 0.5 5.5 1.5 0.5 5.5-2.5 1-1.5zM596 582.5l-4 5.5 3.5 4 5.5 0 0.5-4.5zM681 553.5l6-2.5-1.5-7.5-8.5 1 0 6.5zM644.5 514.5l-3.5 2.5 4 8 4.5-2.5 1-6.5zM631 531.5l0 4.5 8 2 0.5-9.5-3-1.5zM631 577.5l-6 5 1 2 7 1 2-6.5zM638.5 506.5l-3.5 4.5 4 6 2 0 3.5-2.5 0-6zM688.5 551.5l9-1.5 1.5-7.5-8.5-3-3-0.5-2 4.5 1.5 7.5zM629.5 603l-4.5-2.5-0.5 0-3.5 7.5 4.5 3.5 0.5-0.5 2.5 0zM612 599l1 4.5 2.5 1.5 5-5.5-2-2.5zM586.5 592.5l-8.5 1 5 3 2 4 3-3zM642.5 573.5l3-4-2.5-5-3 0.5-3 6 1 1.5zM622.5 536l-7 1 0 6 6.5 1 4-5zM634 522l-0.5-0.5-8 4-0.5 1.5 6 4.5 5.5-4.5zM578.5 575l6.5 7.5 0.5-0.5 5-5 0-2.5-12 0zM601 578.5l5 6 2.5 0 1.5-1.5 0-3-4.5-5.5-3.5 0zM686 574l3-3.5-2.5-8-5 0-1.5 3-0.5 2.5 4.5 5.5zM673 553l4-2 0-6.5-3-2-1 0-4 6.5 0 1.5zM625.5 572.5l3-6.5-4-3-4 3 2 7 1 0zM738 554.5l-1.5 3.5 2 5 0.5 0 5.5-3.5-1.5-4zM671 564l9 1.5 1.5-3-1.5-3-8-1-2 2zM670 560.5l2-2 1-5.5-4-2.5-5 3.5 3.5 6zM704 555l5-3 0.5-8.5-9-0.5-1.5-0.5-1.5 7.5 2.5 3.5zM622 505l-6.5-0.5 0 8.5 8-4.5zM631 565.5l-2.5 0.5-3 6.5 4.5 2 3.5-4zM679.5 621.5l-1.5-0.5-3.5 1.5-1.5 9.5 10-3.5zM656.5 515.5l6-4-5-6.5-5.5 3 1 6.5zM696 570l2 7 6 0.5 2.5-4-0.5-3.5-7.5-3-0.5 0zM601.5 587.5l-0.5 4.5 1.5 1.5 5-1 2-5.5-1-2.5-2.5 0zM680 559.5l1-6-4-2.5-4 2-1 5.5zM620.5 566l4-3 0-4-2-1.5-7 1 0 6.5zM622.5 536l0.5-7.5-7.5-1 0 9.5zM710.5 582l3.5-2 0.5-5-8-1.5-2.5 4 1 3zM652.5 558.5l-2 2.5 2.5 6 8-1.5 0.5-2.5-4-5.5zM663 569.5l-3 4 1 4 4.5 2.5 2.5-5.5-3-4.5zM750 300l3.5-4-2.5-7.5-5-1 0 6.5-6.5 0 0 0.5 2 3zM747.5 375.5l-5 1-1 2 1.5 6 9 0 0.5-5.5zM744 324.5l-1-6-6.5-2.5-3.5 6.5zM752.5 379l-0.5 5.5 10.5 0 0-2.5-5-6.5zM812 310.5l4.5 8 6-3.5 15-4.5-6.5-2-12.5 0-7 0.5zM750 300l0 6 1 1 7.5 0 2.5-7-7-2-0.5-2zM776.5 375.5l-6.5 0.5 1.5 8.5 6.5 0zM771 312l-2.5-1.5-7 1.5-1.5 3 1 5.5 7.5 1.5 2.5-1.5zM738.5 357.5l4.5 2 6-3 1-4.5-3-4.5-8 2.5zM749.5 368l-5-2-5.5 4.5-0.5 1 4 5 5-1zM786.5 332.5l-7.5 3-0.5 1 2.5 8 3 1 0-0.5 9-3.5 0.5-2.5zM739.5 294.5l-9 8 9.5 2.5 1.5-7.5zM735.5 347l-5.5-0.5-2 9 8 3.5 2.5-1.5 0.5-7.5zM738.5 371.5l-6.5 3.5-1 2 2 3.5 8.5-2 1-2zM755 363l-3 4 6 7.5 3.5-2.5 0.5-6-5-3.5zM780.5 321.5l0-4-5.5-6-4 0.5 0 8.5 6 2.5zM728 355.5l2-9-8.5-1.5-4 5 7 5 0 2zM729.5 335.5l1-1 0.5-4.5-12.5-4 0 1 0 6.5 1.5 4.5zM746.5 314.5l-5-4.5-5 6 6.5 2.5zM724.5 378l0 6.5 8 0 0.5-4-2-3.5zM743 359.5l1.5 6.5 5 2 2.5-1 3-4-6-6.5zM796.5 381.5l-7.5-6-3.5 1.5-1.5 7.5 13 0zM761.5 372l-3.5 2.5-0.5 1 5 6.5 6.5-6.5-0.5-1zM720 338l2.5 6.5-1 0.5 8.5 1.5-0.5-11zM770 376l-1-0.5-6.5 6.5 0 2.5 9 0zM739.5 294l-13.5 0 1.5 9 3-0.5 9-8zM750 306l0-6-8.5-2.5-1.5 7.5 0.5 1.5 0.5 0.5zM731 330l-0.5 4.5 8.5 5 3-1.5 1-1-1.5-6.5zM752 367l-2.5 1-2 7.5 5 3.5 5-3.5 0.5-1zM741.5 378.5l-8.5 2-0.5 4 10.5 0zM739 339.5l-8.5-5-1 1 0.5 11 5.5 0.5zM786 312l-6-6.5-5 6 5.5 6zM726 318l4-8-3.5-5.5-2 0.5-8 13 0.5 1.5zM731 377l1-2-4.5-7.5-3-0.5 0 11zM731 330l10.5 0.5 2.5-3.5 0-2.5-11-2zM740.5 306.5l-9 4 5 5.5 5-6-0.5-3zM760 357l-3 5.5 5 3.5 7.5-2.5 0-1-5.5-6.5zM740.5 306.5l-0.5-1.5-9.5-2.5-3 0.5-1 1.5 3.5 5.5 1.5 0.5zM739 370.5l-5-5.5-6.5 2.5 4.5 7.5 6.5-3.5zM726 294l-14.5 0 1.5 7 11.5 4 2-0.5 1-1.5zM734 365l2-6-8-3.5-3.5 1.5 0 10 3 0.5zM738.5 357.5l-2.5 1.5-2 6 5 5.5 5.5-4.5-1.5-6.5zM731 330l2-7.5-7-4.5-9 1.5 1.5 6.5zM739.5 392l-1-7.5-9.5 0 3 11 7.5-3zM777.5 421.5l-4-2-3.5 5 2 3 6-1 0.5-1zM784.5 432.5l7 0 0-4-3.5-1-3.5 2.5zM794.5 405l1.5 0.5 3-1 1-5.5-1-1-5 1.5zM740.5 425.5l-1-0.5-5 1 1 6.5 5 0zM765.5 424l-1.5 8.5 7 0 1-5-2-3zM806.5 427.5l-1.5 0.5-0.5 0.5-0.5 5 3.5 2.5 4-5zM816.5 399l-3.5-2-0.5-1.5-2 1 0 3 4.5 1zM739 405l-1.5 1.5 1.5 5.5 2.5 1.5 4.5-5.5-0.5-0.5zM797.5 412l4-0.5 1-5.5-3.5-1.5-3 1zM814.5 405.5l0.5-5-4.5-1-1.5 1.5 0 2.5zM788 427.5l-1-4-1-1-4.5 3.5 3 4zM780.5 394l3-4.5-0.5-5-10.5 0 2 8.5 5 1.5zM747 403.5l-3-3.5-2.5 0.5-2 1.5-0.5 3 6.5 2.5zM753.5 392.5l1-0.5 1-2-1.5-5.5-6 0 0 6zM747.5 416.5l-3 0.5 1 7 6 0 2-1.5-0.5-1.5zM772 416.5l-3-1-5.5 6 2 2.5 4.5 0.5 3.5-5zM800.5 384.5l-7.5 0-0.5 7 5.5 0.5 2.5-6.5zM807.5 395l3 1.5 2-1-0.5-5-2.5 0.5zM764 404l3.5-7.5-2.5-2.5-1 0-3.5 1.5-2.5 4.5 2 4zM817.5 412l-2.5 1.5-0.5 6 6-3zM814.5 406l7.5-1 1-1.5-2.5-2.5-4-2-1.5 1.5-0.5 5zM740.5 425.5l0 7 6.5 0-2-8zM822 405l-0.5 4.5 5 3.5 1-0.5 1-5-5.5-4zM784.5 430l-3-4-3-0.5-0.5 1 0 6 6.5 0zM783.5 389.5l8 3 1-1 0.5-7-10 0zM783.5 405l1 6 4 1.5 1.5-1 1.5-5.5-5-3zM788.5 412.5l0 4.5 3.5 1.5 4-2 0.5-3-6.5-2zM813.5 423.5l0-3.5 1-0.5-1-0.5-7 1 2 4zM804.5 428.5l-6.5 1-0.5 3 5 0 1.5 1zM803 413l-1.5-1.5-4 0.5-1 1.5-0.5 3 2 2 6 0.5zM759.5 413.5l-2-6.5-3.5 0-4 3.5 0.5 1.5 5 3zM791.5 428.5l1.5-1.5 0-3.5-0.5-0.5-5.5 0.5 1 4zM790.5 397l3.5 2.5 5-1.5 0-4.5-1-1.5-5.5-0.5-1 1zM738.5 419l3.5-3-0.5-2.5-2.5-1.5-8.5 3.5 1.5 2.5zM742 416l-3.5 3 1 6 1 0.5 4.5-1 0.5-0.5-1-7zM732 395.5l-3-11-4.5 0-2.5 8.5 1 3zM746.5 396.5l-0.5-4-6.5-0.5 0 0.5 2 8 2.5-0.5zM746 408l4 2.5 4-3.5-3-4.5-4 1-1.5 4zM752.5 398.5l1-6-5.5-2-2 2 0.5 4 5.5 2.5zM806.5 420l7-1-4-4.5-3.5 5zM809 403.5l0-2.5-4.5-2-1 0.5 0 6 3 0.5zM732 418l2 4.5 0.5 3.5 5-1-1-6zM757.5 407l2.5-3-2-4-5.5-1.5-0.5 0.5-1 3.5 3 4.5zM751.5 424l-6 0-0.5 0.5 2 8 4.5 0zM778.5 401.5l2.5 3 2.5 0.5 3-2 1-4-7-5-1 0.5zM739.5 392l6.5 0.5 2-2 0-6-9.5 0zM791.5 406l-1.5 5.5 6.5 2 1-1.5-1.5-6.5-1.5-0.5zM797.5 428.5l1.5-4-2-2-4 1 0 3.5zM803.5 399.5l-3.5-0.5-1 5.5 3.5 1.5 1-0.5zM758 400l2.5-4.5-6-3.5-1 0.5-1 6zM798 438.5l-1.5-6-3 0-2 4.5 1.5 3 0.5 0zM773.5 444.5l6-1 0.5-5-5.5-1-1.5 7zM802.5 444.5l4-1.5-0.5 0 1.5-7-1.5-1-6.5 4.5 1 4zM784.5 447.5l5-3 0-2.5-3.5-1.5-3.5 5.5 0 1zM771.5 444.5l-4.5-4-4 4 2 4 2.5 0.5zM793 440l-1.5-3-5-1-1 2 0.5 2.5 3.5 1.5zM832 473l-3.5-5-4 7.5 0 0.5 4 1zM765.5 461l-2 3-0.5 4 2.5 3.5 4 0 5-8zM829.5 492.5l-4 0.5 1 7 2 0-0.5 1 3 0 2.5-2.5zM837.5 493l0.5 0.5 7 3.5 0.5-5-5-4zM832.5 487l-0.5 0.5 0 2 5.5 3.5 3-5-1-1-0.5-0.5zM766.5 438.5l0.5 2 4.5 4 1.5 0 1.5-7-1-1.5zM765 448.5l-3.5 3.5 1.5 4.5 2 1.5 5-4.5-2.5-4.5zM781 438l4.5 0 1-2 0-3.5-6.5 0zM835 498.5l3-5-0.5-0.5-5.5-3.5-2.5 3 4 6zM758.5 433.5l3.5 4.5 4.5 0.5-0.5-6-7.5 0zM746.5 435.5l-7 2.5 4 4.5 2 1.5 1.5-1zM764.5 490l-1 0-3.5 3 0.5 4 7.5-1 0-1zM766.5 438.5l7-2.5 0.5-3.5-8 0zM795.5 446.5l3.5 5 3.5-1.5 0-5.5-2-1-5 2.5zM763 444.5l-3.5-1-1.5 2.5 1.5 5 2 1 3.5-3.5zM791.5 458.5l4.5-3-4.5-5-3.5 1-1.5 4.5zM788 451.5l3.5-1 1.5-3-3.5-3-5 3zM786.5 436l5 1 2-4.5-7 0zM809 500l8 0-1.5-7.5-6.5 1zM752.5 448.5l1-2-2-4-4.5 0.5-1.5 1 1 1 2.5 5.5zM766.5 438.5l-4.5-0.5-3 4 0.5 1.5 3.5 1 4-4zM785 469.5l2-3.5-4.5-5.5-7 3.5 5 6.5zM831 501l-3 0-3 7.5 8.5 0zM773.5 436l1 1.5 5.5 1 1-0.5-1-5.5-6 0zM793 447.5l2.5-1 0-0.5-2-6-0.5 0-3.5 2 0 2.5zM835 498.5l-1.5 0-2.5 2.5 2.5 7.5 2.5 0 2.5-7zM748.5 433l5 6.5 1.5-0.5 3.5-5.5 0-1-10 0zM831 479.5l4-3-3-3.5-3.5 4 2 2.5zM823.5 520.5l-8 6 6.5 5 4-6.5 1.5-1zM788 551.5l3 2.5 4.5-4-0.5-3-1-1-3.5-0.5-3 5.5zM805 528.5l0 4 7 2 3.5-8-4-3-1 0zM822 504l-4 0-2.5 4 3.5 3 5-2.5zM804.5 548.5l-0.5 1.5 6 8 1.5 0 1-11zM811.5 523.5l2-6-3.5-4.5-7.5 3 0.5 2 7.5 5.5zM805 532.5l-1.5 1 0 7 6 0.5 2.5-6.5zM774 546.5l1 6 5.5-0.5 1-4.5zM803 518l-3.5 6 5.5 4.5 5.5-5zM774 546.5l-5.5 1 0 4.5 5 2 1.5-1.5zM815.5 526.5l8-6-0.5-1.5-4.5-3-5 1.5-2 6zM791.5 558l8 0 0.5-5.5-4.5-2.5-4.5 4zM795.5 550l4.5 2.5 4-2.5 0.5-1.5-2-4.5-7.5 3zM781.5 547.5l1.5 0 5-4-0.5-1.5-3.5-2-3 3zM776 538.5l6-2.5-1-4.5-4-1.5-3.5 2.5-0.5 2.5zM803.5 540.5l-0.5 1-0.5 2.5 2 4.5 8-1.5 0.5-2-3.5-4zM815.5 526.5l-3.5 8 6 3 3-4.5 1-1.5zM805.5 503.5l3-1.5 0-2-5.5 0 1 2.5zM827 514l-1.5-5-1.5-0.5-5 2.5-0.5 5 4.5 3zM802.5 516l-0.5-1-6 0.5-3.5 4.5 2.5 5 0 0.5 4.5-1.5 3.5-6zM787.5 542l4.5-5.5-2.5-2.5-6.5 2.5 1 3.5zM804 550l-4 2.5-0.5 5.5 10.5 0zM818.5 516l0.5-5-3.5-3-5.5 3.5 0 1.5 3.5 4.5zM822 504l2 4.5 1.5 0.5 1-0.5-1.5 0 3.5-8.5-4.5 0zM757.5 524.5l-0.5 12.5 6.5-0.5 2-6.5-7.5-5.5zM812 534.5l-2.5 6.5 3.5 4 0-0.5 5-7zM779.5 571l-5-1.5-3 3-0.5 1.5 2 2.5 5.5-1zM773 564l1.5 5.5 5 1.5 1.5-1.5 0-6zM804.5 564.5l-2 1.5 0.5 4.5 8.5 3.5 3-6.5-0.5-1zM791 587l4.5-2 1-1 0-0.5-5-5.5-4.5 0-0.5 1 0 6zM835 609.5l-3 0.5-0.5 4.5 4 3.5 4.5-2-2.5-4 1-1zM807 596.5l3.5 0.5 3.5-6-6.5 0zM792.5 568l6.5-3.5-2.5-6.5-4 0-2 7.5 0.5 2zM801 578l-4.5 5.5 0 0.5 8 4 1-0.5 2.5-6.5 0-0.5zM780 612l12.5 2.5 0.5-1.5-5-8.5-1.5 0-6.5 5.5zM804.5 588l-4 5.5 5 4 1.5-1 0.5-5.5-3 0 1-3.5zM820 602l-1 0-3 5 6 4.5 1-1 0.5-7zM787.5 594.5l-5.5 3.5 4.5 6.5 1.5 0 4-3-2.5-7zM829.5 604.5l0.5 4 2 1.5 3-0.5 2.5-6-1.5-2.5-2 0zM783.5 587.5l-3.5 0.5 0.5 9.5 1.5 0.5 5.5-3.5zM779.5 571l-1 4.5 2 3 6 0.5 0.5-1-1-6.5-5-2zM836 347l0 7 6.5 2 2-6.5-6.5-3.5zM818 340.5l6.5 5.5 6-8 0-2-6-2-2-1zM846.5 365l3.5 0.5 2.5-3-2.5-5.5-3.5 0.5zM844.5 349.5l7.5 2.5 2-2.5-6-6.5zM814.5 448.5l0.5-6-3.5-2-5 0.5-0.5 2 5 6 1.5 1.5zM835.5 439l-4.5-4.5-2 5 5 3zM837.5 427.5l4 2.5 3.5-3-2.5-3-3-0.5zM853.5 447l2.5 5.5 3-0.5 2.5-6-4.5-2.5-3 2zM865.5 415.5l2.5 2.5 4 0 0-4-1.5-2-1.5-3zM821 431l0 1.5 2.5 1.5 7-0.5-2.5-7.5-4-1zM847.5 456l2-4-0.5-2.5-1.5-1-4.5 0 1.5 6zM849.5 432l-4-5-0.5 0-3.5 3 0 2 4.5 2.5 3.5-2zM829 439.5l2-5-0.5-1-7 0.5 0.5 7 2 0.5zM850.5 466l7.5-1 1-2-4.5-5-5.5 1 0 5.5zM871 468l1.5-1-2.5-6.5 1.5-6-1.5 0-5.5 2-3 5.5zM837 414.5l-1 0-4 4.5 0.5 2.5 5.5 0 1.5-3zM836 428l-2 4 5 2.5 2.5-2.5 0-2-4-2.5zM844 407l-6-2 1.5 7.5 3 0 1-1zM840.5 456.5l-2-3.5-4-1-2 6 7 2zM813.5 434.5l4 1 3.5-3 0-1.5-8-4 0 2-2.5 3zM849 459l5.5-1 1.5-5.5-6.5-0.5-2 4 1 2zM839.5 475.5l-1.5-4-1.5 0.5-2 3.5 1.5 2zM829 439.5l-3 2 2.5 4.5 6-2.5-0.5-1zM855.5 430.5l-1-6.5-3 0.5-0.5 6.5 3.5 0.5zM864.5 456.5l5.5-2-7-9-1.5 0.5-2.5 6zM867.5 438.5l-3 2.5 0 3 7.5 1 0-6zM860 423l-1.5 1 0.5 5.5 2 0.5 2.5-2.5zM840 460.5l0 0.5 8.5-3-1-2-3-1.5-4 2-1 3.5zM852 438.5l-3 3 0.5 1 4.5 3 3-2-0.5-5zM867.5 425.5l-1.5-3.5-5-0.5-1 1.5 3.5 4.5 2.5 0zM854.5 431.5l-3.5-0.5-1.5 1 0 0.5 2.5 6 4.5 0 1-1zM860.5 436.5l4 4.5 3-2.5-0.5-5-5 0.5zM843 448.5l-7-2-2 5 0.5 0.5 4 1zM832 419l-7-4-1 10 4 1 3.5-2 1-2.5zM849.5 432.5l-3.5 2-1 3.5 3 3 1 0.5 3-3zM844.5 416.5l-2-4-3 0-2.5 2 2.5 4 4-0.5zM870 454.5l1.5 0 0.5-1.5 0-8-7.5-1-1.5 1.5zM839.5 475.5l4.5 1.5 0-6-1.5-2-2.5 0.5-2 2zM834.5 452l-0.5-0.5-6-2-3 2 3 6.5 3.5 0.5 1-0.5zM824 441l-0.5-7-2.5-1.5-3.5 3 0.5 5.5 4 1.5zM842.5 412.5l2 4 3.5-1 0-4-4.5 0zM858.5 424l-4 0 1 6.5 3.5-1zM858 465l0.5 4 6 4 0.5-1 6-4-9.5-6-2.5 1zM837 465.5l3-5-0.5-0.5-7-2-1 0.5 1 5.5 2.5 1.5zM818 441l-0.5-5.5-4-1-2 6 3.5 2zM837 414.5l2.5-2-1.5-7.5-1.5-1.5-4.5 6.5 4 4.5zM836.5 401l-16 0 8 6.5-0.5 2.5 4 0 4.5-6.5zM822 442.5l-4-1.5-3 1.5-0.5 6 7 0zM845 438l-4 1 0 3.5 2 2 5-3.5zM838 483l1.5 4 6 5 2.5-9.5-3.5-4zM843.5 418l-4 0.5-1.5 3 1.5 2 3 0.5 2-4zM849 464.5l0-5.5-0.5-1-8.5 3 4.5 4zM828.5 446l-0.5 3.5 6 2 2-5-0.5-2-1-1zM953.5 382l-1-2.5-5-4.5-5.5 2-1 1 3.5 7 3 0.5zM894 410l0.5 3.5 8 0-1-6-3.5-2zM903 364l8.5 1-1-8.5-2-1-1.5 3.5-2.5 3.5-0.5-6-2.5 3.5-0.5 0zM921.5 392.5l6-2 0-4-0.5-1.5-6 2-1.5 4.5zM898 373l4-2.5 1-6.5-2-4-4.5 1-2.5 3.5-1 5-0.5 1zM936 370l-5.5 1.5-1.5 3.5 3 3.5 0-0.5 5-2.5 3-3zM941.5 400.5l-1 0-3.5 5 4.5 6 3-4 2-2.5zM929.5 393l-2-2.5-6 2 2.5 6 5.5-2zM949 391.5l-1.5-6-3-0.5-4 3.5 1.5 4 5 1.5zM873.5 341.5l2-6.5-1.5 0-4-5.5-6-1-2.5 4.5 2 9.5zM886 338l-1.5 5 3 6.5 0.5-3.5 4-1 1.5-0.5-0.5-4zM864 328.5l-1.5 0-6 1 4.5-5 7-5-7 0-5 3-8.5 5-1 0.5 2 5.5 13-0.5zM886 338l7 2.5 2.5-2.5-1-5-5.5 2-3.5 0.5zM884.5 343l-10 0 1.5 9 4-4.5 2.5 0 5 2.5 0-0.5zM913 449.5l-1 4 4 4 0.5-0.5 0-8zM895.5 459l2.5-2 0.5-3-2.5-2.5-4.5 2.5 0 3.5 0 0.5zM878 465.5l-5 2.5 1.5 3 4.5-0.5 1-1 0-2zM892.5 465l-2.5 4 2 4 3.5-1 0.5-4-2.5-3zM902 429l1 1.5 4 0 1.5-2.5-1-2.5-2-1-3.5 3zM875.5 438l2.5-4-3-4-3 0 0 8.5zM884.5 447.5l1-7-1.5-0.5-5 1-1 4.5 1.5 2zM891.5 457.5l0-3.5-4.5-3.5-2 3 1 4zM890.5 420.5l-3-0.5-2 4.5 0 1 4.5 2 2-3.5-0.5-3zM910.5 437.5l2 1 3.5-3-4-2.5-2.5 1.5zM902.5 469.5l4.5-5.5-6-1-1 0.5 0 3zM881 453.5l4 0 2-3 0-1-2.5-2-5 0-1 3.5zM936 430l0-2-3-3-4 2.5 1 4zM960.5 434l4-0.5 0-5.5-4.5-1-2 2.5 0 2zM979.5 434l-1.5 1.5 1 5 4.5 2 1.5-5 1-2zM924.5 443l-1 6.5 4 3 3-1.5 3-4.5-4-4.5zM941.5 418.5l3 2 3-4.5-0.5 0-5.5-1.5zM929 427.5l-2.5-1.5-1.5 0-3 4.5 2.5 3.5 4 0 1.5-2.5zM937.5 420l4-1.5 0-4-2-0.5-3.5 0zM973 451.5l-4.5-4-2.5 1.5 0.5 2.5 4.5 2.5 2.5-2zM964.5 428l0 5.5 1 1 6-3 0-1-4-4.5zM973 451.5l0.5 0.5 6-3.5-4-3.5-1.5 1.5zM958.5 455.5l-4.5-4-2.5 4 4 3zM924.5 434l-4 6 4 3 5-1 1.5-4.5-2.5-3.5zM968.5 447.5l4.5 4 1-5-5-0.5zM933.5 446.5l-3 4.5 5 4.5 2-1 1.5-3.5zM898 478.5l0-1.5-4.5-0.5-0.5 0.5 0 3.5 2 1zM952.5 479l0.5-2.5-1.5-2-3 1 0.5 4zM951.5 472.5l0 2 1.5 2 3.5-1-2-4.5zM952.5 479l-3.5 0.5-1 0.5 0.5 4.5 2.5 0.5 3.5-3zM935 484.5l4.5 0.5 2-2.5 0-0.5-1.5-2.5-2.5-0.5-3.5 3zM911.5 488l1.5 0 2-3-1-3-4.5 2.5 0 1.5zM942 475.5l-2 4 1.5 2.5 3.5-2.5-1-4-1-0.5zM943.5 471.5l3.5-1-0.5-2.5-0.5-1-2.5 0-2 2zM953 476.5l-0.5 2.5 2 3 1 0 2.5-2.5-1.5-4zM934 485.5l-3.5 1.5 0 4.5 2.5 1 3-1zM951 485l-2.5-0.5-2.5 1-0.5 2.5 3 4.5 3.5-1.5 1-1zM863 491.5l-2.5-1-3.5 2.5 0 1.5 1 1 3.5 0.5 1.5-3.5zM917 491.5l-2 1.5 0 5 4 0 1.5-4.5-0.5-1zM874.5 487l-5-1.5-0.5 0.5-0.5 4 1 1.5 2.5 0 2.5-3.5zM949.5 470.5l2 2 3-1.5-1-2.5-1.5-1.5zM876.5 483.5l-3-3-4.5 2 0.5 3 5 1.5zM859 500l-5.5 0 2 8 5-2.5zM838.5 521.5l3.5-0.5 1-2-1-2.5-5.5 1 0 2zM848 513.5l4.5 0 2.5-3.5 0-1.5-7-1.5-1 0.5zM864 516l4.5-2 0.5-0.5-2.5-3.5-3-0.5-2.5 4zM826 564l-2-1-3.5 1.5-1 3 2 3 4.5-0.5 1.5-4.5zM851 596l-1 5 7.5 0-0.5-5.5zM816.5 560.5l-0.5-6-4-0.5-0.5 4 1 3.5zM840.5 575l-1.5-1.5-6 2 0 4 7 0.5zM824 563l-1-6.5-5.5 4 3 4zM826 570l-4.5 0.5-1.5 5 4.5 3.5 0.5 0 4-6zM831 583l4 4 5-2 1-3.5-1-1.5-7-0.5-2 2.5zM840.5 575l6.5-1.5-2-6.5-3.5-0.5-2.5 5.5 0 1.5zM827.5 556l-4-0.5-0.5 1 1 6.5 2 1 3.5-5zM822.5 539.5l0.5 6 2.5 2 2.5 0 4.5-3.5 0-2-3-2.5zM817.5 560.5l5.5-4 0.5-1-0.5-0.5-4-2-3 1.5 0.5 6zM856 534.5l4.5-3.5-5.5-3.5-1 1.5zM856 548.5l-4 2-1 2.5 0 0.5 8 2.5 0.5-6.5zM840 541l1 6 2 1 4.5-4 0-1.5-4-3.5-2 0.5zM855 542.5l5.5 0 0.5-4.5-4.5-1.5-2 4zM845 567l2 6.5 1.5 1 5-5-2.5-3.5-4 0zM822 539l5.5-7-3-4.5-3.5 5.5-2.5 4zM810 585.5l-3-1.5-2.5 7 7 0zM841 581.5l6 0 1.5-6.5 0-0.5-1.5-1-6.5 1.5-0.5 5zM810 585.5l5-3 0-1-5.5-4-1.5 3.5-1 3zM818 548l5-2.5-0.5-6-0.5-0.5-3.5-2-5.5 7.5-0.5 1.5zM828 547.5l-2.5 0-2.5 7.5 0.5 0.5 4 0.5 3-4zM818 548l1 5 4 2 2.5-7.5-2.5-2zM833.5 569l5.5 3 2.5-5.5 0-0.5-8 0.5zM864 595.5l3.5-1 2-2-3-5.5-1.5-0.5-2.5 1.5-1 4zM874.5 564l-2-7.5-0.5-0.5-4 1-1.5 2 3 8zM868.5 537.5l2.5-5-9-4-0.5 7zM862.5 588l2.5-1.5-2.5-6.5-6 0.5 0.5 5.5zM869.5 592.5l-2 2 4 8.5 1-0.5 1.5-5-2.5-5zM896 531l3.5 0 1.5-6-8 0zM865 576l0 1.5 7 3.5 3-6.5-4-3zM888.5 540l-2 3 3 3.5 6-0.5-1-6zM909.5 578.5l-0.5-9-1 0-7 5 4.5 5zM900 557.5l-0.5 6.5 2 1.5 3.5 0 2.5-6zM877.5 548l-5.5 1.5 0 6.5 0.5 0.5 5-1 2.5-6zM875 574.5l-3 6.5 0.5 1.5 5.5 4 5-5 0-5-4.5-3zM901.5 552l8 1.5-1.5-8-2.5 0zM871.5 592.5l-1-1.5 8 0-0.5-4.5-5.5-4-6 4.5 3 5.5zM869.5 567l-3-8-6.5 3 4.5 5.5zM864.5 567.5l-3.5 4.5 4 4 6-4.5-1.5-4.5zM891 554.5l2 3 7 0 1-5.5-3.5-3zM861.5 592l1-4-5.5-2 0 6.5zM875.5 541.5l-3 0-3.5 6 3 2 5.5-1.5zM858 561.5l-1 10 4 0.5 3.5-4.5-4.5-5.5zM901.5 552l-0.5 0-1 5.5 7.5 2 3-1-1-5zM892 561.5l2.5 3.5 5-1 0.5-6.5-7 0zM879 535l-7-3-1 0.5-2.5 5 0 0.5 4 3.5 3 0 3.5-2.5zM965.5 595l-3-1-3 1.5-0.5 2.5 1 0 2.5 3.5 1-6.5zM945 553l5 1 1-6.5-0.5 0-6.5 3zM934.5 582.5l1.5 0.5 1 0 1.5-4-2-2-0.5-0.5-2 2.5zM924.5 572.5l-1-2-0.5-0.5-3-0.5-3 3 1.5 2.5 2.5 1 1.5-0.5zM913 566l1.5 3.5-0.5 2 3 1 3-3-1.5-3.5zM968.5 566l0.5 2.5 3 0.5 3.5-5-2-2.5-1.5 0.5zM916 561l-2-3-0.5 0-3 1 0.5 1.5 2 4.5zM916 561l2 0 2.5-3-1.5-3-0.5 0-4.5 3zM937.5 560.5l-5 1 2 2.5 2.5 0 0.5-3zM921 576l-2.5-1-6 7 6 1 1.5-1zM954 569.5l0-3-2.5-2-4 1.5-0.5 1 3 4.5 2 0zM961 557l3.5 3 2 0 1-4-5-1-1.5 1.5zM974 576l-1.5-1.5-3.5-0.5-1.5 4 3.5 2zM926 578l-3.5-2.5-1.5 0.5-1 6 5 0.5zM920 525l-8 0 0 0.5 3 3.5 5-0.5zM955 587l2.5-2-1.5-4.5-3-0.5-2 4zM949.5 591l-1.5-1.5-3.5-0.5-1 0.5 0.5 7.5 2 0zM961 556.5l1.5-1.5 0-5-5.5 1-1 2.5 2.5 2.5zM937.5 571l0.5-2-1.5-1.5-2.5 0.5-1 1.5 0.5 2 2 0.5zM918.5 566l1-1.5-1.5-3.5-2 0-3 4 0 1zM937 564l4 1.5 0.5 0 0-1.5-2.5-3-1.5 0zM929 569l-0.5-1-5 2.5 1 2 3.5 0.5 0.5-0.5zM915.5 550.5l-3.5-3.5-3.5 1 1 4.5 3.5 0.5 2-1.5zM930 581.5l1.5 2 3-1-0.5-3.5-3.5-0.5zM935.5 576.5l0.5 0 0.5 0.5 3-3.5-2-2.5-2 1zM925 529l2.5 3.5 2 0 2-1.5-2.5-6-2.5 0zM950 554l0.5 0.5 2 1 3.5-2 1-2.5-2.5-3.5-3.5 0zM930 577.5l-1.5 0-2.5 0.5-1 4.5 0.5 0 4.5-1 0.5-3zM937 583l-1 0-1 4.5 4.5 1.5 0-4.5zM959.5 585l-2 0-2.5 2 0 1 3 3 3-1 0.5-1 0-1.5zM947 559l3.5-4.5-0.5-0.5-5-1-1.5 2.5zM933.5 588.5l1.5-1 1-4.5-1.5-0.5-3 1-0.5 1 2 3.5zM943 571.5l2.5-4-4-2-0.5 0-1.5 3.5zM965 583l1-5-2.5-1-2.5 3 0.5 2zM938.5 592.5l-5 0 0 0.5-0.5 3.5 7 0.5zM972 569l1.5 1.5 3.5 0 1-1.5-2.5-5zM969.5 548.5l-4 3 5.5 5.5 1.5-2zM1004 529.5l-2-1.5-7.5 0 1 4.5 6.5 0zM969.5 548.5l2.5-1.5-0.5-5.5-5.5 0-1 3zM981 551.5l-2-6-4.5 2 1.5 6 2.5 0.5zM982.5 538.5l1.5-0.5-1-6.5-3.5-0.5-2.5 1.5 1 4.5zM1052.5 513.5l5-0.5 1-3.5-0.5-1-5-1.5zM1047.5 507l2-1 0-7-8.5 0 1.5 6.5zM1066 510l-3.5 7 4.5 5 3.5-1 1-6-2.5-5.5zM1043.5 514.5l0.5 7 2.5 1 1-0.5 4-5-0.5-2.5-3.5-2zM964.5 516l6-1.5-1.5-4-5 1-0.5 4zM1021.5 467.5l-3.5-2-1.5 0-1 6 3 1.5 4-3.5zM1011.5 484.5l-4.5-4.5-3 5 1 2 5.5 0zM981.5 492.5l-5 0.5-1 1 0.5 4.5 7 0zM1015.5 471.5l1-6-3-2-5.5 5 5 4zM959.5 494.5l0 4 7 0-1.5-4.5-4-1.5zM1052 491.5l-1 1.5 3 3.5 3.5-2.5 0-1zM960.5 491l-6-1 0.5 3.5 4.5 1 1.5-2 0-1zM975.5 494l-4-1-4 5.5 1 0 7.5 0zM964.5 488l3.5 2 1.5 0 2.5-4-8-3-0.5 0zM1015 494l5 1.5 2.5-3-2-1.5-5 0zM1051 486.5l-2 2 3 3 1.5-2-0.5-2.5zM971.5 493l-2-3-1.5 0-3 4 1.5 4.5 1 0zM1059.5 496.5l0 2.5 5.5 0-1.5-4zM987 463.5l5 4.5 3.5-2-3-6.5-2-0.5zM991 451.5l0.5 0.5 2.5 1 4-2.5 0.5-3.5-7.5 0zM986.5 479.5l-5-4.5-3.5 3.5 2 4zM965 474.5l-1 3 2 3.5 5.5-2.5-3.5-5.5-1 0zM987 442l-3-1-1.5 5 2.5 0.5zM990.5 453.5l1-1.5-0.5-0.5-5.5-1-0.5 0.5 1.5 3zM964 477.5l1-3-5-2.5-3.5 3.5 1 3zM966 481l-2-3.5-6.5 1 1 1.5 5.5 3 1 0.5zM987 480l2 4 2.5-0.5 5.5-7-2-1-5.5 1zM960.5 469.5l3.5-2-3-4.5-1.5-0.5-1 3-2 1zM956.5 466.5l-3 2 3 7 3.5-3.5 0.5-2.5zM983.5 451.5l1.5-0.5 0.5-0.5 0.5-3-1-1-2.5-0.5 0 0.5-2 1zM1066.5 465l-1-0.5-7.5 4 0.5 2 5 5.5 1 0zM1011 452.5l2-1 4-1-0.5-3.5-5.5 0-0.5 4zM1013.5 419.5l-0.5-1.5-1 0-7 3.5 5 4.5 1.5 0zM996 438l-1 4 6.5 2 2-4-5-3zM1033.5 438l5 7.5 6-8-1-3-3.5-1zM1009.5 447l3 0 3-6.5-1-2.5-1.5-1-5.5 3zM1000.5 425l-2.5 5.5 2 2.5 5-0.5 1.5-1.5-5.5-6.5zM1019 441.5l-3.5-1-3 6.5 7.5 0zM1001.5 444l-6.5-2-0.5 0-0.5 5 8 0zM1036 414l2.5 3 4.5-2 1.5-5.5-8.5 0zM1020 423l3.5 2 3.5-1 2-5-0.5-1.5-6-1-3 5.5zM1006.5 431l-1.5 1.5 1 6.5 1.5 1 5.5-3-0.5-2.5-5-4zM1007.5 440l-1.5-1-2.5 1-2 4 0.5 3 3 0 4.5 0zM1062 421.5l-0.5 6.5 3 2 3-0.5 4-8-7.5-1.5zM993.5 424l-1 1 3.5 5.5 2 0 2.5-5.5zM1015.5 409.5l-7 0-0.5 2.5 4 6 1 0 3.5-4zM1071.5 421.5l8 3 4.5-4.5-6.5-7.5-2-1.5-3 4zM1106.5 376l-0.5-5.5-5-2-3.5 1 0 4.5 6.5 2.5zM1088.5 411.5l-10 2.5 5.5 6 5.5 2zM1068.5 389l-2-1-5.5 1.5-2 6 2.5 3.5 4 1.5 4.5-3.5zM1087 406.5l0-7-2-0.5-7.5 4.5-0.5 3zM1021.5 401.5l-5.5 3.5 0 4.5 10.5 0 0-2.5-4-5.5zM1077.5 403.5l7.5-4.5-5-6.5-6 5zM1050.5 402l4.5 4 6.5-7-2.5-3.5-5-0.5-3.5 6.5zM1021.5 386.5l-9.5 2 2.5 3.5 0 0.5 6.5-0.5zM1087 406.5l-10 0-2 4 2.5 2 1 1.5 10-2.5 1-1.5zM1021 392l-6.5 0.5 0 3-1.5 1.5 6.5 0.5 2-5zM1052 393l2 2 5 0.5 2-6-6.5-5-2 1zM1104 376.5l-4 5 0.5 3 6 2.5 1 0 0-4-1-7zM1013 397l-1.5 1.5-1.5 1 0.5 1 5.5 4.5 5.5-3.5-2-4zM1117 397l-9 0-0.5 2.5 3.5 3 4-0.5zM1107.5 399.5l-3.5 9 6.5 0 0.5-6zM1117 404.5l-2-2.5-4 0.5-0.5 6 5.5 0zM1180.5 323.5l-0.5 0.5-2.5-2-2.5-3-10.5 10 6 5 0.5 1.5 12 7.5 1 0 3.5 1 5.5 8.5 11.5-2.5-6-2 0-4 0-7 0-2 0-9.5-7.5-4-1-0.5zM1204 355l0.5-5-11.5 2.5-2 4.5 0.5 1.5 7 8 0.5 2.5 2.5-1 10.5-5-0.5-1.5-5-4-1.5-2z"/>
<path fill="#849ebc" d="M381 490l1.5-9.5-5-8.5-6-2.5-11 8.5 19 14zM538 321l-5-8.5-4 0.5 0 18 4 2.5zM529 331l0-18-2.5 0-7 14.5zM500.5 435.5l15-2 0-7.5-20 0 0 1zM594 519l0.5 0.5 18-3.5-15-12-4.5 5-0.5 4zM655 318l9.5 1.5 1-1 0.5-10.5-2-2.5-4.5 0-6 7.5zM677 318l8-7.5-2.5-5.5-4.5-1-4.5 5 3 9zM621 301.5l11.5 2.5 0.5-0.5 1-9.5-13 0zM624 386.5l7.5-5-5-9.5-5 0.5-3.5 9zM653.5 384.5l10 3 1.5-6-7.5-3.5-3.5 3zM714.5 388l1-0.5 3-7.5-4-3.5-6 5 2.5 5zM733.5 438.5l-0.5 4 10.5 0-5-6-1-1zM697.5 428l-1-4.5-8 2-1.5 3 0.5 1.5 5 3zM693.5 417.5l3.5 4.5 6-2 0-7.5-8 0.5zM700.5 404.5l2 1.5 6-4-0.5-6.5-8 1zM714 406.5l6.5 3 6-4.5-2-4-4.5-1.5-1-0.5zM705.5 449.5l0-7-8.5 0-1 8 3 3.5zM687.5 457l5.5 3 1.5-0.5 4.5-5.5-3-3.5-7.5 0-1.5 1.5 0 4zM673 513l-1-6-6.5-3 0 13.5zM655.5 580.5l5.5-3-1-4-7-0.5zM615.5 543l0 7.5 6 0.5 2-2-1.5-5zM609.5 587l-2 5.5 3.5 3 5-5zM645.5 539l5.5 4.5 7-7.5-3-5-6.5 1.5zM618.5 591.5l6.5-0.5 1-6.5-1-2-0.5 0-6 0-1.5 8zM621 608l-3.5 0-3 5.5 4 4.5 0.5-1 6.5-5.5z"/>
<path fill="#c0ccbe" d="M348 310l2 1.5 12-2 2-15.5-16 0zM373 343l-3-10.5-3.5-2-5 3.5 2.5 9.5 8.5 0zM364.5 376l-4 4 3.5 29.5 19.5 0 0-30 2.5-0.5-1.5-4zM324.5 366l16 8 3.5-13-7.5-4-11 4.5-1.5 1.5zM375.5 356l-15 5.5 4 14.5 20-1-0.5-2-3-3.5 4-6zM316 349l-1.5 0-4-0.5-4 12.5 15 0zM324 363l1.5-1.5 2.5-14-2 0.5-10 1 5.5 12zM307 418.5l5.5 8.5 22-1.5 0-16-27.5 0zM333 455l-3 13.5 3.5 3.5 8.5-0.5 3.5-4.5-11-8 0-5zM404 455.5l8 5 5.5-0.5 2.5 1.5 13 0 0-18.5-15.5 1-1-1-9.5 0.5-3 5.5zM407.5 473l-6 8.5 6.5 8 0 7 8.5 3 16.5-6 0-1 0-0.5 0-17 0-13.5-13 0-2.5 13.5zM398 329l1-1.5-4.5-8-11 1.5 0 4.5zM425 338l2.5-3 0.5-2.5-9-4-6.5-4-13.5 3-1 1.5-1 2.5 0 0.5 7 10zM396 352.5l8-10.5-7-10-8 15.5 3 3.5zM396 352.5l2.5 2.5 18 1.5 8.5-18.5-21 4zM418 364l24.5 0 1.5-1 0.5-0.5-1.5-2-9-10-8.5-0.5 2-15-2.5 3-8.5 18.5zM424 377.5l-7.5-5-4.5 7.5 2.5 7.5 5 1.5 5.5-2.5zM465 369l0-1.5-3 0.5-11.5 1-6-6.5-0.5 0.5 9.5 19 3 0zM448 389.5l-2.5 8.5 3.5 8 9-7.5 0-3zM449 406l-0.5 3.5 15 0 0.5-4.5-6-6.5zM449 406l-3.5-8-9.5 1-2.5 3.5-0.5 7 15.5 0zM419.5 389l-5-1.5-7 12 3 9 11-11zM418.5 308l2-14-20.5 0 0 16.5 0.5 0.5zM439.5 308l5 5 1.5 0 14-11.5-0.5-7.5-22.5 0zM422 317l-11.5 6.5 8.5 5 5 2 2-7.5zM440.5 329.5l-4 6 2 8 11.5-3 3.5-6.5zM471 316l-4.5 0.5-0.5 1 1.5 13 5.5 2 5.5-5 0-1zM486.5 315.5l-1.5-4-4-1.5-10 6 7.5 10.5zM485.5 342l4.5-3 0.5-6.5-12-5-5.5 5 2.5 9zM464 347l-6 6 3 15 1 0 13-1.5 5 1-7.5-21zM495 342l-5-3-4.5 3 2.5 18 11.5 0zM504 355l3-12-2-4-10 3 4.5 18 1 0zM506 337l0-1.5-0.5-1-12.5-5-2.5 3-0.5 6.5 5 3 10-3zM519.5 341l-2.5-9.5-11 4 0 1.5zM510.5 352.5l7-4 0-3-10.5-2.5-3 12zM494.5 323l-8-7.5-8 11 0 1 12 5 2.5-3zM507 343l10.5 2.5 2-4 0-0.5-13.5-4-1 2zM547 342l-1.5-1.5-10 0-5.5 19.5 21.5 0zM543.5 373l-4-13-16.5 0 0 10.5 6 5.5zM582.5 373.5l-4.5 10 4.5 5 16-1 0-14zM587 406.5l0.5-4.5-5.5-4-7.5 4.5 2.5 7zM579 416.5l8-3 0.5-1.5-0.5-5.5-10 3 1 5.5zM474 420l0.5 1 5 3 3-1.5 0-13-7 0zM433 460l0 14.5 22 0 0.5-7.5zM476 471l12.5 13.5 8-14.5-16.5-6zM488.5 484.5l-12.5-13.5-3 1-5.5 7.5 13 12.5 7.5 0zM602.5 427l8 13 6.5 0 2-2 1-12-17.5 0zM619 438l12.5 1.5 0-13.5-11.5 0zM619 438l-2 2 2.5 8.5 12 3 0-9 0-3zM539.5 440l-24-3 0 11.5 6 2 19-7.5zM576.5 446l-7.5-4-2 3 2.5 7 4.5 0 2.5-4zM555.5 462l10.5-3.5 0-3-6.5-5-5.5 4.5zM595.5 469.5l2 7 11.5-1.5 1.5-7-11-5-0.5 0.5zM529 484.5l1-2.5 0-1.5-1.5-1-13 0 0 5zM531.5 478.5l-1.5 2 0 1.5 11.5 4.5 2.5-3 0-1-4-4.5zM544 482.5l0 1 10.5 4.5 1-8.5-3.5-5zM584 475l-6.5 7.5 8 9.5 5.5 0 2.5-7.5zM597.5 504l3.5-12-20 0-0.5 10 12.5 7zM593 509l-12.5-7-6.5 7.5 1 3.5 17.5 0zM579 535l1 0.5 16.5-8-2-8-0.5-0.5-17.5 6zM601 536l-2.5 4.5 5.5 12 11.5-0.5 0-14.5zM515.5 528.5l0 24.5 19 0 4.5-7.5 0-6zM539 545.5l-4.5 7.5 2.5 7.5 7 4.5 16-8 1-3.5zM678 304l4.5 1 9-9 0.5-2-19 0zM603 325l-4.5 0 0 15 8.5-6.5-1-6.5zM706 333.5l-1.5 1.5-1.5 9.5 19.5 0-3-8.5zM691.5 296l4 15 5 0.5 4-3.5-4.5-14-8 0zM650.5 335.5l-4-1.5-2 0.5-1.5 10 9 0zM612 383l-6-7.5-7.5 0.5 0 17 10 0zM693.5 370.5l4-1.5 0-8.5-2-1-8.5 2.5 0 3.5zM624 386.5l-6-5-6 1.5-3.5 10 15.5 0zM684 358.5l3 3.5 8.5-2.5-0.5-6.5-6.5-1.5zM632.5 353.5l-4.5-3-4 1.5-0.5 7 5 2.5 3.5-2zM653 360.5l9-1.5 1.5-8.5-8.5 1.5-2.5 7zM707.5 360.5l4-0.5 2.5-11.5-10.5 2.5 1.5 8zM678.5 344.5l-14.5 0-0.5 6 7.5 3 5.5-3.5zM623.5 359l-6 1.5-1 8 5 4 5-0.5 2-2.5 0-8zM671 353.5l0 6 5 2.5 5.5-3.5-5-8.5zM652.5 359l2.5-7-5.5-7-4.5 9zM604.5 359l-6 0 0 1 0 16 7.5-0.5 3.5-5zM628.5 344.5l-9 0-0.5 5 5 2.5 4-1.5zM665.5 362.5l-0.5 2.5 10.5 5.5 0.5-8.5-5-2.5zM665.5 362.5l5.5-3 0-6-7.5-3-1.5 8.5zM719 394.5l-2-6.5-1.5-0.5-1 0.5-1.5 8.5 3 1zM649.5 345l5.5 7 8.5-1.5 0.5-6-14.5 0zM667.5 436l-7.5 1.5-1 5 11 0zM620 400.5l6.5 2.5 1-1 0.5-9-7.5 0zM635.5 399.5l3.5 0.5 3-3 0-4-8 0zM687.5 400.5l4.5 1 4-6-5.5-2.5-4 0zM719.5 436l-7-0.5-0.5 0.5 0 6.5 10.5 0zM627.5 402l5 0.5 3-3-1.5-6.5-6 0zM658.5 434l1.5 3.5 7.5-1.5 2-4-0.5-1-4.5-3zM644.5 408.5l0 3.5 3.5 3.5 5.5-5.5-0.5-2.5zM604.5 399l0 0.5 3 2.5 4.5-1.5 0-7.5-5 0zM660.5 404.5l1-1.5-1-3-5.5-2-0.5 0.5-2.5 5.5 1.5 3zM652 463.5l2 2.5 7-3.5 0.5-2-2.5-2-5.5 0zM747 471l7.5 0 0-10-6.5 0.5-2.5 4zM736 472l8.5 2 2.5-3-1.5-5.5-6.5-1.5-4 6zM731 485l1 7 10 0-0.5-8.5-7.5-2.5zM688.5 482.5l4 2.5 2.5-1.5 0.5-1.5-5-5-2 1zM682 481.5l1 3 0.5 0.5 5-2.5 0-4.5-2.5-1.5zM712 453l-6.5-3.5-6.5 4.5 6.5 6.5 1 0.5 5.5-5.5zM671.5 450.5l0-1-2.5-7-6 0-1.5 7 4.5 3zM631.5 485.5l0 6.5 9.5 0-1.5-7.5zM639.5 484.5l2-2.5-0.5-1-3.5-3.5-1 0-5 2 0 6zM642 442.5l-5 0 0.5 5.5 4 0 1-1zM705.5 449.5l6.5 3.5 3-2 0.5-1-1.5-7.5-8.5 0zM754.5 483l0-12-7.5 0-2.5 3 0.5 6.5zM740.5 502.5l0.5 2 7 1.5 3-4-4-4-0.5 0zM726.5 498.5l-2-4-7.5 5 2 3 6.5-1zM689.5 505.5l-5-2-2.5 1-3 10.5 2 2.5 5 0 3-3zM672 507l1 6 6 2 3-10.5-3.5-1.5zM747 498l4 4 4 0-0.5-2 0-7 0-1-4 0zM686 517.5l5.5 8 6-3.5-2-6.5-6.5-1zM678.5 525.5l-0.5-1.5-12.5-2 0 10 6.5 2zM725.5 501.5l-6.5 1 0 4.5 6.5 1 1.5-2zM749 512l-1.5 2 3 8 7 0 0-4-1-6zM739.5 500.5l0-4.5-5.5-2-1.5 5 0 0.5zM717 535.5l-4.5-6-1.5 0-3.5 4.5 1.5 2.5zM707 508.5l-5.5-3.5-3.5 5.5 0.5 1.5 3.5 1.5 4.5-3zM746 598l5 0.5 4-4-2.5-4.5-2.5-0.5-5.5 5zM760.5 561l3.5 0 0-3 0-9.5-7-1.5-1.5-0.5-3 5 0.5 3.5zM608.5 584.5l1 2.5 6.5 3.5 1 0 1.5-8-0.5 0-8 0.5zM694 605.5l-0.5-1.5-7.5-1-1 0.5-0.5 2 2.5 5 4 0zM688 624l-3 5 2.5 4 8-3.5-1.5-7zM685 619l-5.5 2.5 3.5 7 2 0.5 3-5zM635.5 600l-0.5 1 5.5 9.5 7-9.5-2.5-4-1.5-1zM699 650.5l5-7.5-4-5.5-4.5 2.5-2 6.5zM645 561.5l-2 3 2.5 5 6 1.5 1.5-4-2.5-6zM618 582.5l0.5 0 6 0-1-9.5-1 0-6 2zM685.5 638l-6 1.5-1.5 4.5 7.5 7.5 3-3.5zM604 604.5l-2.5 7 7.5 2.5 0.5-0.5-0.5-7zM611.5 598.5l-6.5 1.5-1 4.5 5 2 4-3-1-4.5zM700 637.5l1-4-1-1.5-4.5-2.5-8 3.5-0.5 3 8.5 4zM666.5 602l-8.5-5.5-4.5 7 1.5 3 9.5 0zM626 539l-4 5 1.5 5 6 0.5 2.5-3-4-7.5zM580.5 586.5l1-0.5 3.5-3.5-6.5-7.5-4 7zM752.5 551.5l3-5-10.5-4.5-3 0.5 0 4 3.5 5zM596 602l8 2.5 1-4.5-2.5-4.5-6.5 5.5zM570 584l-2 2.5 9.5 6.5 3-6.5-6-4.5zM669 549l-6.5-4-1 1 0 7.5 2.5 0.5 5-3.5zM570 584l4.5-2 4-7 0-0.5-11.5 0zM657.5 505l5 6.5 3 0.5 0-12-7 0zM614.5 613.5l-5 0-0.5 0.5-2 7.5 6.5 3 5-6.5zM667 614l0.5 0.5 3.5-1.5 4.5-6.5-1-2.5-5-3.5-3 1.5-2 4.5zM652 546l-3.5 4.5 4 8 5-1 1.5-3zM644.5 508.5l0 6 6 1.5 2.5-1.5-1-6.5-4-2.5zM717.5 639.5l1-1 5.5-3.5-4-6.5-7-0.5-2.5 5.5 1.5 3zM595.5 592l-3.5-4-1 0-4 3.5-0.5 1 1.5 5 4.5 0.5zM756 606l4-2.5 1-7-6-2-4 4 1.5 5.5zM731.5 564l7-1-2-5-5 0.5-1 3zM613 603.5l-4 3 0.5 7 5 0 3-5.5-2-3zM577.5 593l0.5 0.5 8.5-1 0.5-1-5.5-5.5-1 0.5zM640.5 610.5l-5.5-9.5-5.5 2-1 8 12 0zM637 500l-6.5 0-2 10.5 0.5 0.5 6 0 3.5-4.5zM610 583l8-0.5-1.5-7.5-1-0.5-5.5 5.5zM742 542.5l-7 1-1.5 0-1 7 4 1.5 5.5-5.5zM725.5 549l6 2 1-0.5 1-7-9 0zM602.5 595.5l0-2-1.5-1.5-5.5 0-3 6 3.5 3zM746.5 314.5l-3.5 4 1 6 7-3-0.5-6.5-0.5-1zM794 326l-6.5 2-1 4.5 7 6.5 2.5-8 2.5-1.5zM798.5 329.5l7.5-4.5-2.5-4.5-5-3-3 0.5-1.5 8zM790 312l2 4.5 3.5 1.5 3-0.5 3.5-10-8.5-2zM797 384.5l14 0-1.5-5.5-7.5-6-5.5 8.5zM751 307l-1-1-9 1 0.5 3 5 4.5 3.5-0.5zM776 331l1-8-6-2.5-2.5 1.5-1 9zM736.5 316l-5-5.5-1.5-0.5-4 8 7 4.5zM798.5 317.5l5 3 8.5-10-0.5-1.5-3.5 0-6-1.5zM739.5 402l-7-4-1.5 4.5 3.5 4 3 0 1.5-1.5zM751 402.5l1-3.5-5.5-2.5-2.5 3.5 3 3.5zM787.5 399l3-2 1-4.5-8-3-3 4.5zM798 392l1 1.5 4.5-0.5 1.5-3.5-4.5-4zM802 424l-3 0.5-1.5 4 0.5 1 6.5-1 0.5-0.5zM750.5 412l-0.5-1.5-4-2.5-4.5 5.5 0.5 2.5 2.5 1 3-0.5zM800.5 385.5l4.5 4 1.5-0.5 2-4.5-8 0zM813.5 419l1 0.5 0.5-6-5-1-0.5 2zM809 401l1.5-1.5 0-3-3-1.5-1.5 0.5-1.5 3.5zM760 389l4 5 1 0 3.5-9.5-7 0zM771 406.5l5 3.5 5-5.5-2.5-3-5.5 0.5zM757.5 407l2 6.5 7-2 1-4-3.5-3.5-4 0zM798 429.5l-0.5-1-4.5-1.5-1.5 1.5 0 4 6 0zM774.5 393l-5 3.5 3.5 5.5 5.5-0.5 1-7zM811.5 431l1.5-2 0.5-5.5-5 0.5-2 3.5zM821.5 409.5l0.5-4.5-7.5 1 0 0.5 3 5.5zM755.5 415l-5-3-3 4.5 5.5 4.5zM806.5 389l3 2 2.5-0.5-1-6-2.5 0zM758.5 432.5l5.5 0 1.5-8.5-2-2.5-0.5 0-5 2.5zM755.5 390l4.5-1 1.5-4.5-7.5 0zM774 475.5l-4.5-4-4 0-1 2.5 1.5 7 2.5 1 5-5zM802.5 444.5l0 5.5 2.5 1.5 3.5-1.5 1.5-2.5-3.5-4.5zM825.5 493l-1-0.5-1.5 1-3.5 6.5 7 0zM819.5 468l-1 2.5 3 4.5 3 0.5 4-7.5-1-1zM815.5 454l-4.5-5-1-1.5-1.5 2.5 3.5 6zM823 493.5l1.5-1-1.5-5.5-7 0.5 0 5zM800.5 443.5l-1-4-1.5-1-4.5 1.5 2 6zM832.5 487l6.5-0.5-1.5-5-3.5 1zM803.5 479l4 2.5 3.5-6.5-6-2zM814 484.5l2.5-4-4.5-6-1 0.5-3.5 6.5 4.5 3zM748.5 433l-2 2.5 0.5 7.5 4.5-0.5 2-3zM775.5 464l-1-0.5-5 8 4.5 4 5-2 1.5-3zM799.5 439.5l6.5-4.5-3.5-2.5-6 0 1.5 6zM801 495.5l-4.5-2.5-3 7 8 0zM838 493.5l-3 5 3.5 3 1-1.5 5.5-2.5 0-0.5zM758.5 433.5l-3.5 5.5 4 3 3-4zM770 453.5l4 1 2.5-2-3-8-0.5 0-1.5 0-4 4.5zM753.5 446.5l-1 2 4 4 3-1.5-1.5-5zM782.5 446l-3-2.5-6 1 3 8 2 0 4-5.5zM805 451.5l-2.5-1.5-3.5 1.5-2.5 4 3 3 5.5-0.5 0-0.5zM809 493.5l-2.5-2-5.5 4 0.5 4.5 7.5 0zM754.5 476l0 10.5 6-1.5 1-2-5-6.5zM791.5 509.5l4.5 6 6-0.5-0.5-5-5.5-2zM815.5 508l2.5-4-1.5-4-2.5 0-2 4zM806.5 507.5l1 0.5 3-3.5-2-2.5-3 1.5zM767 509l4.5 1 3-1.5 1-8.5-10.5 0zM780 510.5l-5.5-2-3 1.5 1 7.5 4 1 4.5-4 0-0.5zM763.5 512l-7 0 1 6 0 6.5 0.5 0 8.5-5zM791 509.5l-3 4 1 5.5 3.5 1 3.5-4.5-4.5-6zM781 543l-5-2-2 2 0 3.5 7.5 1zM765.5 545.5l-5 2.5 3.5 0.5 0 7 4.5-3.5 0-4.5zM791 509.5l0.5 0 4.5-1.5 1.5-4.5-2.5-3.5-2.5 0zM786 527.5l-2-4.5-6 0.5-1 2 0 4.5 4 1.5zM773.5 554l-5-2-4.5 3.5 0 2.5 10 0zM807 596.5l-1.5 1-1 2.5 1.5 2.5 4.5 1 2-4-2-2.5zM803 570.5l-3 3.5 1 4 7 2.5 3.5-6.5zM804.5 564.5l9.5 2-2.5-8.5-6 0zM773 576.5l-0.5 5 5.5 1 2.5-4-2-3zM798 594l2.5-0.5 4-5.5-8-4-1 1 1.5 8.5zM816.5 594.5l5.5 1.5 2-1 0-4-9 0zM827 617l-5-4.5-3.5 3-0.5 7.5 8.5-1zM780.5 597.5l-1 0-3.5 6.5 4 6 6.5-5.5-4.5-6.5zM796.5 583.5l4.5-5.5-1-4-5-1-3.5 5zM782 562.5l8.5 3 2-7.5-10.5 0zM779.5 597.5l1 0-0.5-9.5-0.5-0.5-7.5 3-1 3.5zM772.5 581.5l0.5-5-2-2.5-5.5 2.5 4.5 6 0 0.5zM822 596l-2 6 3.5 1.5 2.5-1 1-5-3-2.5zM870.5 358l-4-4-1-2.5-4 2-1 2 4 6.5 2.5 1 1-1.5 2.5-3zM813 341.5l5-1 4.5-7.5-4-1.5-0.5-4-3.5 1-3 1zM802 338.5l2.5-1 2.5-7-1 0.5-6.5 0zM806.5 353.5l-1-0.5-4.5 8.5 0.5 1 7 2 4-4.5zM834.5 379.5l-5 3.5-1 6 5.5 3 1 0 3.5-2 1.5-2.5-0.5-4-4-3.5zM845.5 374l7-2.5-2.5-6-3.5-0.5-3.5 1.5-1.5 4zM836 347l2-1 3-6.5-10.5-3.5 0 2zM829.5 362l-5.5 5 1 2 8-2 0-4.5zM824.5 346l3.5 3 8-2-5.5-9zM818 340.5l-5 1-0.5 0.5 1 6.5 4.5 4 1 0 5.5-6.5zM848 343l6 6.5 1.5-0.5 2.5-5.5-10-2zM858.5 469l-4.5 5.5 1 2 9 0.5 0.5-4zM828 458l-3-6.5-1-0.5-6 6.5 1.5 1.5 6 1.5zM855 476.5l-1 5 4.5 5 5-8 0.5-1.5zM846 434.5l-4.5-2.5-2.5 2.5 0 2.5 2 2 4-1zM835.5 444.5l0.5 2 7 2 0-4-2-2zM867.5 433l-0.5 0.5 0.5 5 4.5 0.5 0-6zM867.5 433l4.5 0 0-7.5-4.5 0-1.5 2zM825 415l7 4 4-4.5-4-4.5-4 0-0.5 2.5-3 2zM839 437l0-2.5-5-2.5-3.5 1.5 0.5 1 4.5 4.5zM844.5 478.5l0-0.5-0.5-1-4.5-1.5-3.5 2 0 0.5 2 5zM849.5 409.5l-1.5 2 0 4 2.5 1.5 3.5-6.5-1.5-0.5zM848.5 421l2.5-3.5-0.5-0.5-2.5-1.5-3.5 1-1 1.5 1 2zM844 471l5.5-1 1-4-1.5-1.5-4.5 0.5-2 4zM849.5 452l6.5 0.5-2.5-5.5-4.5 2.5zM856.5 438.5l0.5 5 4.5 2.5 1.5-0.5 1.5-1.5 0-3-4-4.5-3 1zM843 444.5l0 4 4.5 0 2-6-0.5-1-1-0.5zM843 448.5l-4.5 4.5 2 3.5 4-2zM852 473.5l-7.5 4.5 0 0.5 3.5 4 6-1 1-5-1-2zM860.5 436.5l1.5-2.5-1-4-2-0.5-3.5 1-1 1 3 6zM840 469.5l2.5-0.5 2-4-4.5-4 0-0.5-3 5zM832.5 421.5l-1 2.5 4.5 4 1.5-0.5 2-4-1.5-2zM826 441.5l-2-0.5-2 1.5-0.5 6 2.5 2.5 1 0.5 3-2 0.5-3.5zM852 473.5l2 1 4.5-5.5-0.5-4-7.5 1-1 4zM926 366l4.5-4-3.5-5.5-4-0.5-1.5 7.5 4 2.5zM927 384l4.5-4 0.5-1.5-3-3.5-3 0.5-2.5 4zM892.5 370.5l-2.5 6-1 5.5 0.5 1 9-4.5-0.5-5.5zM926 375.5l-4-4-2.5 0.5-0.5 5 3.5 2.5 1 0zM909 376l3-0.5 4.5-5-2-4.5-2.5-0.5-4.5 7.5zM909.5 413.5l7 0 0 0.5 1 0-2.5-5-1.5-0.5zM921 387l6-2 0-1-3.5-4.5-1 0-3.5 4.5zM934.5 390.5l1.5-2.5-0.5-1-8-0.5 0 4 2 2.5zM904 400l-4.5 0.5-2 4.5 0.5 0.5 3.5 2 4-2.5 0-3.5zM940.5 388.5l4-3.5-3.5-7-3.5 3-2 0.5 0 5.5 0.5 1zM897.5 405l2-4.5-1.5-2.5-4.5 0-0.5 3-0.5 1.5zM895.5 338l4.5 1 3-2.5-0.5-4.5-5.5 0-2.5 1zM893.5 344.5l7-1.5-0.5-4-4.5-1-2.5 2.5zM848.5 333.5l-2-5.5-10.5 2-11.5 4 21.5 7 0.5 0.5zM863.5 342.5l-2-9.5-13 0.5-2 8 15.5 3zM919.5 345.5l11-1.5 8 0-1.5-2.5-5 1-3.5-3.5-4-4-3.5 0.5zM874.5 343l-1-1.5-10 1-1.5 2 0.5 0 4 9.5 4 4 4.5-5 1-1zM909 340.5l-6-4-3 2.5 0.5 4 3.5-0.5 5.5 0.5zM873.5 341.5l1 1.5 10 0 1.5-5-0.5-2.5-3 0.5-7-1zM908 455l4-1.5 1-4-2.5-1.5-4.5 3.5 1.5 3.5zM916 435.5l-3.5 3 1 4 3 0.5 0-7.5zM871.5 465l1 2-0.5 0 1 1 5-2.5 0-2-1-1-2-0.5zM896 429l1 1.5 5-1.5 0-1.5-3.5-4-0.5 0-2 1.5zM875 477l4-0.5 0-6-4.5 0.5-1 2zM898.5 454l-0.5 3 3.5 3 2-1.5 0.5-1.5-3.5-3.5zM880.5 422.5l-2.5 4 0 0.5 4.5 2.5 3-4 0-1zM906.5 461l-3-2.5-2 1.5-0.5 3 6 1zM903.5 450.5l2.5 1 4.5-3.5-0.5-2-4-0.5-3 3zM877 451.5l1.5-0.5 1-3.5-1.5-2-6 0 0 4.5zM900.5 417l2 3.5 1 0.5 3.5-2.5-1-5-4.5 0zM903.5 458.5l3 2.5 2.5-3-1-3-0.5 0-3.5 2zM883.5 465l2 0.5 2.5-2-3-4.5-2.5 1-0.5 1.5zM910.5 420.5l6-0.5 0-2.5-4.5-1.5-2 3.5zM901 463l0.5-3-3.5-3-2.5 2 0.5 3.5 4 1zM910.5 448l2.5 1.5 3.5-0.5 0-6-3-0.5-3 1.5-0.5 2zM912 453.5l-4 1.5 1 3 3.5 2 3.5-2.5zM868.5 477.5l4-0.5 2.5 0-1.5-4-4.5 0zM910.5 422l0-1.5-0.5-1-3-1-3.5 2.5 2 3.5 2 1zM878 427l-3 3 3 4 5-0.5 0-1-0.5-3zM947 427.5l-0.5-4.5-1.5-1-4.5 3-0.5 0.5 3.5 3.5zM928.5 434l2.5 3.5 4.5-0.5 2-5-1.5-2-6 1.5zM952 428l1-5-1-1.5-5.5 1.5 0.5 4.5 3.5 2zM983.5 427.5l4.5 1.5 0-9.5-1.5-0.5-5 3.5zM976 418.5l2.5 0 1.5-3-1-3-2.5 1-3 1.5zM976 428.5l3 2 4.5-3-2-5-5.5 2.5zM944.5 420.5l-3-2-4 1.5 0 0.5 3 4.5 4.5-3zM962 417.5l-9.5 1-0.5 3 1 1.5 6 1 3-6zM959 455.5l3 4.5 4.5-2-2-4-4 0zM968 443l0.5 0.5 5-2-1.5-4-3.5 0.5zM972 437.5l1.5 4 2 1.5 3.5-2.5-1-5-4.5 0zM954 439.5l0 4 2 1.5 6-2.5 0-1-3-3-4 0zM921.5 418l3 1.5 1-0.5 1.5-5-5 0zM921.5 418l0.5-4-5.5 0 0 3.5zM853 496l-1.5-1-3.5 2 0 3 5.5 0zM937.5 473.5l4.5 2 1-0.5 0.5-3.5-2-2.5-1 0-3 2.5zM920.5 493.5l3.5 1 2.5-3-1-1.5-3-1-2.5 3.5zM892 486l1 0 2.5-3.5-0.5-1-2-1-2 1zM927.5 485.5l0-0.5-4-1-2.5 1.5 1.5 3.5 3 1zM955.5 482l-1 0-3.5 3 2 5 5.5-3.5zM936 475l1.5 4 2.5 0.5 2-4-4.5-2zM940.5 489.5l-4.5 2 2.5 5.5 4.5-2zM887.5 481l-0.5 0-3 0.5-1.5 5 5.5 0.5zM934.5 469l3 2.5 3-2.5-2-5-3 0.5-0.5 0zM897 491.5l-2-1-2.5 0.5-1 2.5 2 2.5zM941.5 482.5l4.5 3 2.5-1-0.5-4.5-3-0.5-3.5 2.5zM881 489.5l-2 1-0.5 2 2.5 5 2 0 1.5-5zM916 468l1-4.5-4-4-4.5 3.5 4 5.5zM940.5 489.5l5-1.5 0.5-2.5-4.5-3-2 2.5zM900 480l-2-1.5-3 3 0.5 1 1.5 1 2.5-0.5zM904 484.5l4-1.5 0-3.5-4-0.5-0.5 0.5 0.5 4.5zM864 486.5l0 3.5 4.5 0 0.5-4zM943 475l1 0.5 3.5-0.5 0-4.5-0.5 0-3.5 1zM923 472.5l0.5-4-7.5-0.5 1.5 6 2 1zM845 495l0 2.5-5.5 2.5 8.5 0 0-3zM946 467l0-3.5-3.5 0 1 3.5zM888 487l-5.5-0.5-0.5 0.5-1 2.5 3.5 3 2-0.5 2-4zM900.5 484l-1-1-2.5 0.5 0 3 2.5 0.5zM853.5 500l3.5 0 1-4.5-1-1-4 1.5zM907 472l0.5 0.5 2.5-1 2.5-3-4-5.5-1.5 0.5-3 4.5zM887.5 477.5l5.5-0.5 0.5-0.5-0.5-4-1 0.5-5.5 2zM923.5 468.5l-1-5-2.5-1.5-3 1.5-1 4.5zM900.5 488.5l-1-1.5-2.5-0.5-2 1 0 3 2 1zM881 489.5l1-2.5-4.5-4-1 0.5-2 3.5 0 1 4.5 2.5zM923.5 479.5l0 4.5 4 1 1.5-3.5-3-3zM932.5 476l-2.5-2-3 1.5-1 3 3 3 3.5-1zM922.5 463.5l1 5 6-5.5-3.5-1-0.5-0.5zM900.5 488.5l3.5-2 0-2 0-0.5-3.5 0-1 3zM857 493l3.5-2.5-2-4-2.5 3.5-1 0.5zM935 464.5l-5.5-1.5 0.5 7 0.5 0.5 4-1.5zM881 479l3 2.5 3-0.5 0.5-3.5-1-2.5-2.5 1-3.5 0.5zM860.5 490.5l2.5 1 1-1.5 0-3.5-0.5-0.5-4.5-1-0.5 1.5zM910 494.5l-4 0.5-1 3 6 0zM896.5 497.5l5.5 0.5-1-4-2.5-0.5zM857 494.5l0-1.5-2-2.5-4.5 0.5 1 4 1.5 1zM844 507.5l3 0 1-0.5 1.5-7-9 0zM847.5 513.5l1.5 6.5 5-1.5-1.5-5-4.5 0zM950 501l-2.5 3.5 0 1 3.5 4 2.5-1 1.5-0.5-0.5-4zM927.5 515.5l-3.5 1.5-1.5 3 2.5 5 5.5-7zM899 501.5l-2 2.5 4.5 4 2.5-0.5 0.5-0.5 0-4.5zM898 519l-0.5 0.5-3 5.5 7 0zM942 501l5.5 3.5 2.5-3.5 0-2.5-8 0zM911 508l-2.5 6 1.5 1.5 4.5-1.5 1-3.5zM848.5 520l0.5 0-1.5-6.5-5 1.5-0.5 1.5 1 2.5zM910.5 507.5l0.5 0.5 4.5 2.5 1-0.5 1-2-1-4-4.5 0zM835.5 554l6.5-1.5 1.5-4-0.5-0.5-2-1-5 1-1.5 4.5zM836 548l-3.5-4-4.5 3.5 2.5 4.5 4 0.5zM844 557.5l-2-5-6.5 1.5 0 1.5 3.5 3zM848.5 575l-1.5 6.5 1.5 1.5 8-1 0-4zM832 559.5l3.5-4 0-1.5-1-1.5-4-0.5-3 4 2 3zM833.5 562.5l4.5-1 1-3-3.5-3-3.5 4zM849 590l0 4 2 2 6-0.5 0-7zM862 531l0.5-4.5-1.5-1.5-6 0 0 2.5 5.5 3.5zM817 584l-2-1.5-5 3 1.5 5.5 4.5 0zM844.5 558l-0.5-0.5-5 1-1 3 3.5 4zM833.5 562.5l-1.5-3-2.5-0.5-3.5 5 1.5 1.5 5.5 0zM853.5 569.5l-5 5 0 0.5 8 3 0-2 0.5-6zM818 576l2-0.5 1.5-5-2-3-5.5 1-1.5 3.5zM838.5 535l1.5-3-5.5-2.5-1 0.5-2 2.5 4 3zM847 529.5l4 1 3-1.5 1-1.5 0-2.5-8 0zM825 579l-0.5 0-3 5 3.5 5 6-6 0-1zM829 573l-4 6 6 3 2-2.5 0-4-2.5-2.5zM816 554.5l3-1.5-1-5-5.5-2-0.5 8zM841 531.5l1 0 4.5-1.5 0.5-0.5 0-4.5-7 0zM825 589l0 2 9 0 0.5-0.5 0.5-3.5-4-4zM821.5 584l3-5-4.5-3.5-2 0.5-3 5.5 0 1 2 1.5zM835.5 535.5l-4-3-1 0.5-1 6.5 3 2.5 2-1zM851 566l2.5-4-4.5-4.5-1.5 0.5-0.5 8zM843.5 539l1-2-2.5-5.5-1 0-1 0.5-1.5 3 3 4.5zM857.5 597.5l0 3.5 5 2 0.5-6zM871 532.5l1-0.5 1.5-7-12.5 0 1.5 1.5-0.5 2zM883 576.5l5.5-2.5 0.5-2.5-4.5-7.5-2-0.5-2.5 1.5-1.5 8.5zM892.5 586.5l-9.5-5-5 5 0.5 4.5 14 0zM896 538.5l2.5-0.5 1.5-2.5-0.5-4.5-3.5 0-2.5 2.5zM880 565l2.5-1.5 0-3-5-5-5 1 2 7.5zM896 531l-3-6-3.5 0 0 9 4-0.5zM903.5 583l-9 1-2 2.5 0 4.5 14 0zM864.5 542.5l3 5 1.5 0 3.5-6-4-3.5zM897.5 549l3.5 3 0.5 0 4-6.5-4-2-4.5 3.5zM936.5 577l2 2 3-0.5 1-4.5-3-0.5zM950 540.5l-1 4.5 1.5 2.5 0.5 0 3.5 0 3.5-4.5-5-5zM955 588l0-1-4-3-0.5 0.5-2.5 5 1.5 1.5 2.5 0.5zM958.5 556l-2.5-2.5-3.5 2 1 4.5 2.5 0.5zM928 586l-2-1-2 2.5 4 4 1-2.5zM947 574.5l3-3-3-4.5-1.5 0.5-2.5 4 0.5 1.5zM920 590l0.5-1.5-2-5.5-6-1-0.5 0 2 9 1 2.5zM939 530.5l2.5-1.5-0.5-4-5 0zM966 563.5l-3.5 1.5 1 3 5 0.5 0.5 0-0.5-2.5zM961 562l3.5-2-3.5-3-1 4.5zM950.5 547.5l-1.5-2.5-6-0.5 0 5 1 1zM953.5 560l-2 1.5 0 3 2.5 2 2.5-1.5 0.5-3.5-1-1zM915 593.5l1 2.5 10 0 0-1.5-6-4.5zM944.5 589l3.5 0.5 2.5-5-3-1.5-3 2zM933 569.5l-4-0.5-0.5 3.5 3.5 0.5 1.5-1.5zM912.5 582l6-7-1.5-2.5-3-1-2 10 0 0.5zM931 584.5l-3 1.5 1 3 4-1zM954 574.5l-2 3.5 1 2 3 0.5 2-1.5 0-4zM941.5 564l3-2.5-3-2.5-2.5 2zM942.5 606l0 1.5 5.5 5 5-1 0.5-1 0-3.5-5.5-5.5zM909 602.5l2 0.5 3-5.5-5-4-1.5 2zM996.5 547l0.5 2.5 6.5 0.5 2-5-0.5-1-6-0.5zM991 552l-2-7.5-0.5 0-2.5 1.5-1.5 5 2.5 3zM976 553.5l-1.5-6-2.5-0.5-2.5 1.5 3 6.5zM1005 538.5l5.5-3.5-6.5-5.5-2 3 0 4.5zM986 546l-7-1 0 0.5 2 6 3.5-0.5zM996 538.5l-5 5.5 5.5 3 2.5-3.5-2-4.5zM1047.5 512.5l3.5 2 1.5-1 0.5-6.5-3.5-1-2 1zM987.5 512l2-3-3.5-4.5-4 0.5-1 1 0.5 4zM928.5 523.5l-1.5-1-2 2.5 4 0zM1016 520l-2 4.5 0.5 2 5.5 1 1-1 0-0.5-4-6.5zM1049.5 506l3.5 1 3-5-1-3-5.5 0zM998.5 505l3 1 3.5-2 2-5-9.5 0zM935 521l3.5 4 1 0 2-10 0-1-6.5 2.5zM1037.5 478.5l3-3-4-2.5-2.5 2 0 2zM1029.5 480.5l-2.5 2 1.5 3.5 3-1 0.5-3zM1000 478.5l6-0.5-1.5-8.5-3 1-4 5zM1020 495.5l0.5 3.5 6 0 0-4-4-2.5zM961 491.5l0 1 4 1.5 3-4-3.5-2zM972.5 486l2.5 1 4.5-1 0.5-3.5-2-4-3.5-0.5-2 0.5zM990 458.5l0.5-5-4 0.5-1 2.5zM987 471.5l-2.5-0.5-2.5 1.5-0.5 2.5 5 4.5 0.5 0.5 2.5-3.5zM978 478.5l3.5-3.5 0.5-2.5-6-2.5-0.5 0-1 8zM976 470l6 2.5 2.5-1.5-1-6-4.5 0zM971 458.5l-2-3-1.5 1.5-2.5 1.5 1 2 3 0.5zM973 458.5l2-3.5-1.5-3-4.5 3.5 2 3zM1000 462l2 0 3-7 0-0.5-4-0.5-3.5 3.5zM974.5 478l1-8-1.5-0.5-6 3.5 3.5 5.5 1 0zM971 465.5l-2-4.5-3-0.5-1 2 1.5 4.5zM965.5 467.5l-1.5 0-3.5 2-0.5 2.5 5 2.5 2-1.5zM1005 455l-3 7 2 1.5 5-2 0-1.5-3.5-4.5-0.5 0zM972.5 478.5l-1 0-5.5 2.5-1 2.5 7.5 2.5zM977.5 449.5l-4 2.5 1.5 3 3.5 0 1.5-1.5zM984.5 471l2.5 0.5 5-3.5-5-4.5-1.5 0-2 1.5zM995 475.5l-3-7.5-5 3.5 2.5 5zM980 453.5l1 0 2.5-2-3-4-3 2zM987 480l-0.5-0.5-6.5 3-0.5 3.5 9.5-2zM977 461.5l2 3.5 4.5 0 2-1.5-2.5-4.5-4 0.5zM992.5 459.5l3 6.5 0.5 0 4-4-2.5-4.5-2.5 0zM986 447.5l-0.5 3 5.5 1 0-4.5-1 0zM1013.5 456.5l4 2.5 3.5-3.5-2.5-5.5-5.5 1.5-0.5 0zM987 442l-2 4.5 1 1 4-0.5-2 0 0-5.5zM971 465.5l4.5-4.5-2.5-2.5-2 0-2 2.5zM1009 460l4.5-3.5-1-5-7 4zM990.5 459l2 0.5 2.5-2-1-4.5-2.5-1-1 1.5-0.5 5zM996 438l-4-3.5-4 1.5 0 5 6.5 1 0.5 0zM994.5 442l-6.5-1 0 6 6 0zM1003.5 440l2.5-1-1-6.5-5 0.5-1.5 4zM1055 437l7 2 0.5 0 2-9-3-2-0.5 0-6.5 6zM1000 433l-2-2.5-2 0-3 2-1 2 4 3.5 2.5-1zM1038.5 418l-4 3.5 0.5 5 1.5 1.5 0.5 0 5.5-4.5zM1056 414l-5.5 1.5-1.5 3 5 3.5 3-2.5 0-4.5zM1043.5 434.5l5-5.5-4-5-2-0.5-5.5 4.5 3 5.5zM1034.5 421.5l-5.5-2.5-2 5 2 2.5 6 0zM1023.5 409.5l-8 0 1 4.5 5 1.5zM993 432.5l3-2-3.5-5.5-4 1zM1035 400.5l1 9 7.5 0 0.5-4-3-4.5zM1026.5 407l0 2.5 9.5 0-1-9 0-0.5-1.5 0zM1010.5 400.5l-3 9 8.5 0 0-4.5zM1044.5 396.5l-3.5 4.5 3 4.5 6.5-3.5 0-0.5zM1097 387.5l3.5-3-0.5-3-5-2.5-4 4.5zM1027.5 394.5l-6-2-2 5 2 4 1 0 5.5-4.5zM1077.5 403.5l-3.5-6-4-0.5-4.5 3.5 1.5 9 6.5 0 1.5 1 2-4zM1010.5 400.5l-0.5-1-9.5 5.5 0 4.5 7 0zM1113.5 391.5l-3 5.5 6.5 0 0.5-3.5-1-2.5zM1130 359.5l-12 0 1 3.5 9 3z"/>
<path fill="#ffffbf" d="M280.5 330.5l-5.5-2.5-8.5 1.5 1 3-0.5 6.5 9.5 0 2.5 0.5 2.5-5.5zM374.5 308.5l9 0.5 0-15-12.5 0zM367.5 323.5l1.5-2-1-9-6-3-12 2 2 10zM381.5 332.5l-8.5 10.5-0.5 0.5 13 0-2-7 0-4.5zM359.5 360l1 1.5 15-5.5-2-12.5-11 0zM371.5 517.5l3.5 6 4 0.5 22-16-19.5-14.5zM280 419l-2 1.5-3.5 18.5 10 3 6.5-10 0-6zM342 471.5l2.5 10.5 6 9 3.5 1.5 11-11-19.5-14.5zM354 492.5l12 21 5.5 4 10-24-16.5-12zM400 303.5l0-9.5-16.5 0 0 7.5zM397 331.5l-13.5 2.5 0 2.5 2 7 3.5 4 8-15.5zM396.5 370.5l2-2 0-13.5-2.5-2.5-4-1.5 0.5 0.5-3.5 6.5-4 5.5zM396.5 371.5l0-1-11.5-7-4 6 3 3.5 0.5 1.5zM476.5 377l6-3 0-6-7.5-1.5-10 1 0 1.5 4 7zM426 396.5l7.5 6 2.5-3.5-1.5-10-5 0.5zM418.5 308l-18 3 5 6.5-0.5 2.5 5.5 3.5 11.5-6.5 0-4zM510.5 352.5l12 7.5 4 0-2-3.5-7-8zM510.5 352.5l-6.5 2.5-3.5 5 22 0zM563 365.5l-18 9 2 10 16 3.5 4-4zM582.5 373.5l16 0 0-13.5-21.5 0zM574.5 402.5l7.5-4.5 0.5-9.5-4.5-5-11 0.5-4 4 0.5 13zM507 416.5l-3-2.5-21.5 0 0 12 26.5 0zM455.5 467l5-6 1-5-0.5-2.5-28 0 0 6.5zM497 458l1.5 11 17 3.5 0-22.5-15-1zM455.5 488l0 4 25 0-13-12.5-9.5 2zM539.5 440l0.5-14-24.5 0 0 11zM555 463.5l0.5-1.5-1.5-7-11-5.5-4 7.5 2 4zM541 468.5l0.5 1 10.5 4 4-5.5-1-4.5-14-2.5zM531.5 478.5l8.5-0.5 1.5-8.5-0.5-1-9 3.5zM515.5 468l0 11.5 13 0-11-11zM577.5 482.5l6.5-7.5-0.5-2.5-14.5 0 0 2.5 6.5 7.5zM564.5 479.5l-9 0-1 8.5 10-2.5zM568.5 491l7-8.5-6.5-7.5-4.5 4.5 0 6zM608.5 484.5l-13-2-2 2-2.5 7.5 21.5 0zM554.5 488l0 4 14 0 0-1-4-5.5zM492.5 559l2.5 9.5 14-2.5-5.5-14-3-1.5zM540 506.5l19 2 4-4-1.5-12.5-21 0zM562 552.5l1.5-9-4-6.5-17-1.5-3.5 4 0 6 22 8zM583.5 557l16.5 0 4-4.5-5.5-12-13.5 2.5zM600 557l4 17.5 11 0 0.5-22.5-11.5 0.5zM616.5 368.5l1-8-2.5-2-9.5 0-1 0.5 5 11.5zM717 388l2 6.5 3.5 0-0.5-1.5 1-5zM624 352l-5-2.5-3 2-1 7 2.5 2 6-1.5zM713.5 361.5l1.5 9.5 9.5-0.5 0-11zM653.5 427.5l-5.5-7-4 4 0 3.5 4 4.5 1.5 0.5 3.5-2zM636.5 430.5l7.5-2.5 0-3.5-6.5-2.5zM733.5 438.5l-5-5-4.5 9 9 0zM722.5 484l-0.5-1-9.5-3 0 12 8.5 0zM659 472l-1 5 3 3.5 2 0 3.5-2.5 2-5-1-3-4.5-1zM641 481l4-4.5-2-4-1.5-0.5-2 1-2 4.5zM651.5 456l-3.5-0.5-2.5 3.5 0.5 2.5 1.5 1.5 4.5 0.5 1.5-5zM659 458.5l2.5 2 3.5-1.5 1-6.5-4.5-3-3.5 1.5zM690.5 465l2.5-5-5.5-3-3 8.5zM741 517.5l-5.5 0.5-1.5 5 9 5.5 2-0.5zM750.5 522l-5.5 6 4 4.5 8.5 0.5 0-11zM749 532.5l-4-4.5-2 0.5-4 3.5 1 10.5 0 0.5 5-1 1 0.5zM719 519l-1 3.5 2 4 1.5 1 5.5-3-2-8.5zM733 514.5l2.5 3.5 5.5-0.5 3.5-3-5-6.5-6.5 6zM625 493l9 5.5 1.5-6.5-4 0-6.5 0zM709 537.5l0-1-1.5-2.5-6.5-1 1 10 3 0.5zM732 532l7 0 4-3.5-9-5.5-3.5 2.5zM695 501l-1-9-8 0-1.5 11.5 5 2zM718 522.5l1-3.5-4.5-5-1.5 1-1.5 7.5zM744 569.5l-4.5-3-5.5 4 0.5 3.5 7.5 2 2.5-4zM720 628.5l4 6.5 2.5-2 6.5-3-5.5-9-4 1zM692.5 613.5l7 0 0-5-5.5-3-3 5zM727.5 621l5.5 9 8-4.5-1.5-5-9-3.5zM594 606l6 6 1.5-0.5 2.5-7-8-2.5zM712 636.5l-5.5 7 4 4.5 1.5-3 5.5-5.5zM743 555.5l1.5 4 3.5 1.5 5-6-0.5-3.5-7 0zM741.5 587.5l-5.5-2.5-1 7.5 3.5 2.5 4-1zM600 612l-6-6-4.5 2.5 3.5 6 4.5 2.5zM742 546.5l-5.5 5.5 1.5 2.5 5 1 2.5-4zM695.5 595l-2-6-5.5-0.5-3 4.5 2.5 3 7 1zM699.5 608.5l5-4-0.5-2.5-9-1-1.5 3 0.5 1.5zM749 356.5l6 6.5 2-0.5 3-5.5-4-5.5-6 0.5zM780.5 321.5l4 1.5 7.5-6.5-2-4.5-4 0-5.5 5.5zM724.5 305l-11.5-4 2 11 1.5 6zM751 321.5l2.5 2 7.5-3-1-5.5-9.5 0zM787.5 328l6.5-2 1.5-8-3.5-1.5-7.5 6.5zM796.5 381.5l5.5-8.5-2.5-1.5-6.5-2.5-1.5-1-2.5 7.5zM806 395.5l-2.5-2.5-4.5 0.5 0 4.5 1 1 3.5 0.5 1-0.5zM808.5 424l-2-4-0.5-0.5-2-0.5-2 5 3 4 1.5-0.5zM803.5 393l2.5 2.5 1.5-0.5 2-4-3-2-1.5 0.5zM776.5 412l4 2 4-3-1-6-2.5-0.5-5 5.5zM732 395.5l-9 0.5 1.5 5 1.5 3.5 5-2 1.5-4.5zM784.5 411l-4 3 1 4 4 1.5 3-2.5 0-4.5zM726 404.5l0.5 1.5 3 7 5-6.5-3.5-4zM751.5 424l0 8.5 7 0-0.5-8.5-4.5-1.5zM786.5 403l5 3 3-1-0.5-5.5-3.5-2.5-3 2zM772.5 384.5l-4 0-3.5 9.5 2.5 2.5 2 0 5-3.5zM769 415.5l3 1 4.5-4.5-0.5-2-5-3.5-3.5 1-1 4zM820.5 416.5l6-3.5-5-3.5-4 2.5zM794.5 482l4.5 0 2-2.5-3-5.5-3.5-0.5-0.5 0.5zM807.5 481.5l-5 5.5 4 4.5 5.5-7zM831 479.5l3 3 3.5-1-1.5-3.5-1-1.5zM830.5 479.5l-2-2.5-4-1 0 8.5 2.5-0.5zM807.5 481.5l-4-2.5-2.5 0.5-2 2.5 2.5 5 1 0zM811 475l1-0.5 1.5-3-3.5-5.5-3.5-0.5-2.5 2-0.5 3.5 1.5 2zM768.5 482l-2.5-1-4.5 2-1 2 3 5 1 0 5.5-4.5zM784 486l5-4.5-2-4-4.5 1-0.5 1 1 5zM806.5 491.5l2.5 2 6.5-1 0.5 0 0-5-2-3-2 0zM823 487l1.5-2.5-6.5-4.5-1.5 0.5-2.5 4 2 3zM755 439l-1.5 0.5-2 3 2 4 4.5-0.5 1.5-2.5-0.5-1.5zM782 479.5l0.5-1-3.5-5-5 2-0.5 1.5 3 4zM776.5 481l-3-4-5 5 1.5 3.5 1.5 1 4.5-1 0.5-1zM786 440.5l-0.5-2.5-4.5 0-1 0.5-0.5 5 3 2.5zM784 486l3.5 3 5-3.5 0-2-3.5-2zM787.5 489l0 3.5 1.5 1 7-2.5 0-0.5-3.5-5zM792.5 483.5l2-1.5-0.5-8-5.5 0.5-1.5 3 2 4zM788.5 474.5l-3.5-5-4.5 1-1.5 3 3.5 5 4.5-1zM796.5 493l-0.5-2-7 2.5 1.5 6.5 3 0zM799 504l-1.5-0.5-1.5 4.5 5.5 2 1-1.5-1-3zM808.5 502l2 2.5 1.5-0.5 2-4-5.5 0zM780.5 552l2 3.5 5.5-4-0.5-0.5-4.5-3.5-1.5 0zM787.5 507.5l-5 0-2.5 3 1 3.5 7-0.5 3-4zM776 541l0-2.5-3-3.5-6.5 4 0 1 7.5 3zM776.5 518.5l1.5 5 6-0.5 1-1.5-4-7zM773.5 554l0.5 4 8.5 0 0-2.5-2-3.5-5.5 0.5zM787.5 507.5l3.5 2 1.5-9.5-5.5 0zM827 514l-4 5 0.5 1.5 4 3.5 2-1 3.5-7.5zM773 535l0.5-2.5-5.5-3.5-2.5 1-2 6.5 3 2.5zM797 533l6.5 0.5 1.5-1 0-4-5.5-4.5-4.5 1.5zM772.5 517.5l-1-7.5-4.5-1-3.5 3 3 7.5 2 1zM765.5 545.5l1-5.5 0-1-3-2.5-6.5 0.5 0 10 3.5 1zM791 554l-3-2.5-5.5 4 0 2.5 9 0zM787.5 551l3-5.5-2.5-2-5 4zM777 525.5l-7-1-2 4.5 5.5 3.5 3.5-2.5zM766.5 519.5l-8.5 5 7.5 5.5 2.5-1 2-4.5-1.5-4zM835.5 618l-1.5 5.5 7 1 4-0.5-4-6-1-2zM813 608l-1-1-8 2.5 0 1.5 7 3.5 1.5-1zM800 574l3-3.5-0.5-4.5-3.5-1.5-6.5 3.5 2.5 5zM804 611l0-1.5-0.5-1-5-2-5.5 6.5-0.5 1.5 0.5 0 8 1 0.5 0zM786.5 585l0-6-6-0.5-2.5 4 1.5 5 0.5 0.5 3.5-0.5zM793 601.5l-1 0-4 3 5 8.5 5.5-6.5zM797 593.5l-1.5-8.5-4.5 2-1 7.5zM823.5 603.5l-0.5 7 7-2-0.5-4-3.5-2zM802.5 566l2-1.5 1-6.5-9 0 2.5 6.5zM829 597l5 4 2 0-2.5-4.5 2-5.5-2.5 0zM771 558l-7 0 0 9.5 2 0 6.5-4zM824 379.5l0-4-8-2-2 5.5 5.5 3.5zM833 367l-8 2 0.5 4 6 1 2.5-5zM838 346l6.5 3.5 3.5-6.5 0-1.5-2-0.5-5-1.5zM823.5 357.5l-4 6 0.5 1.5 4 2 5.5-5-4.5-4.5zM819 352.5l-1 0-5.5 7 7 4 4-6zM804 346.5l0.5 5.5 1 1 1 0.5 7-5-1-6.5zM820 365l-4.5 6.5 0.5 2 8 2 1.5-2.5-0.5-4-1-2zM824 379.5l-4.5 3 0 6 0.5 1 4.5 1 4-1.5 1-6zM824.5 346l-5.5 6.5 4.5 5 1.5 0 4-3.5-1-5zM806.5 353.5l6 6.5 0-0.5 5.5-7-4.5-4zM849 449.5l4.5-2.5 0.5-1.5-4.5-3-2 6zM851.5 424.5l-2.5-1-3.5 3.5 4 5 1.5-1zM844 477l0.5 1 7.5-4.5-2.5-3.5-5.5 1zM821 431l3-6-10.5-4-0.5 6zM833 470l3.5 2 1.5-0.5 2-2-3-4-2 0zM910.5 388l-1.5 5.5 2.5 3 3.5-0.5 3.5-4-7-5zM922 371.5l3.5-5.5-4-2.5-4 0-3 2.5 2 4.5 3 1.5zM910.5 356.5l1 8.5 0.5 0.5 2.5 0.5 3-2.5-1-6-1.5-1zM899.5 393.5l2-1 0.5-6.5-10.5 2 0.5 1.5 1 1.5zM912.5 403l-2-4-5 2.5 0 3.5 2 1.5 4-1zM927 356.5l3.5 5.5 6.5-7.5-3.5-1.5-2.5-1.5zM915 409l2.5 5 2.5 0 2-5.5-3.5-2.5zM903 336.5l6 4 5-9.5 0-0.5-5 1-6.5 0.5zM875 430l3-3 0-0.5-5.5-4-0.5 0 0 7.5zM905.5 440l-0.5-4-3-1.5-2.5 1 0 3.5 3.5 2 1 0zM892 424l-2 3.5 0.5 1.5 5.5 0 0-4zM890.5 434.5l-3 6 4 2 3.5-2-1-5zM895.5 459l-4-1-1.5 5 2.5 2 1 0 2.5-2.5zM904 457l3.5-2-1.5-3.5-2.5-1-3 3zM905.5 424.5l-2-3.5-1-0.5-4 3 3.5 4zM912.5 430.5l-0.5 2.5 4 2.5 0.5 0 0-5.5zM890.5 429l-1.5 3.5 1.5 2 3.5 1 2.5-2 0.5-3-1-1.5zM898 423.5l0.5 0 4-3-2-3.5-4 1-0.5 2zM888 463.5l-2.5 2 1 3 3.5 0.5 2.5-4-2.5-2zM892 424l4 1 2-1.5-2-3.5-4.5 1zM968.5 438l3.5-0.5 1.5-2-2-4-6 3 0.5 2zM925 426l-2-2-2 0-3.5 5.5 4.5 1zM958 429.5l2-2.5-1-3-6-1-1 5zM929.5 442l4 4.5 4.5-3.5 0-3.5-2.5-2.5-4.5 0.5zM979 440.5l-3.5 2.5 0 2 4 3.5 3-2 1-4zM960 449.5l0.5 4.5 4 0 2-2.5-0.5-2.5-3-1zM981.5 422.5l5-3.5-2.5-2.5-4-1-1.5 3zM948.5 434.5l0.5 3.5 5 1.5 1-1-0.5-4.5-4-2zM942 457.5l-4.5-3-2 1-1 3 5 4zM946.5 423l5.5-1.5 0.5-3-0.5 0-4.5-2.5-3 4.5 0.5 1.5zM968 425l-6-7-3 6 1 3 4.5 1 3-2zM955 438.5l4 0 1.5-4.5-2.5-2.5-3.5 2.5zM942.5 432.5l-5-0.5-2 5 2.5 2.5 4-1.5 1-4.5zM947 427.5l-3.5 1.5-1 3.5 0.5 1 5.5 1 2-2.5 0-2.5zM943.5 429l-3.5-3.5-4 2.5 0 2 1.5 2 5 0.5zM939.5 462.5l-5-4-2.5 1.5-1 3.5 4.5 1 4-0.5zM924.5 419.5l-3-1.5-2 4 1.5 2 2 0zM984 416.5l2.5 2.5 1.5 0.5 0-10-3 1zM962 442.5l1 5.5 3 1 2.5-1.5 0.5-1.5-0.5-2.5-0.5-0.5zM921 424l-1.5-2-3 0 0 7.5 1 0zM962 441.5l4-5-0.5-2-1-1-4 0.5-1.5 4.5zM955 461l4 3.5 1-3 2-1.5-3-4.5-0.5 0-3 3zM976 425l5.5-2.5-3-4-2.5 0-2.5 4zM888.5 488l-2 4 2.5 2.5 2.5-1 1-2.5-3.5-3zM944 475.5l1 4 3 0.5 1-0.5-0.5-4-1-0.5zM864 490l-1 1.5 0 1 4.5 2.5 2-3.5-1-1.5zM892 486l-1-4.5-3.5-0.5 0.5 6 0.5 1 0.5 0zM869 482.5l-0.5-0.5-4 0.5-1 3.5 0.5 0.5 5-0.5 0.5-0.5zM867.5 495l-4.5-2.5-1.5 3.5 2 3 0-2 4 0zM933 492.5l-2.5-1-1.5 1 0 6 3.5 0zM945.5 488l-5 1.5 2.5 5.5 5.5-2.5zM892.5 491l2.5-0.5 0-3-2-1.5-1 0-3 2zM902 498l3 0 1-3-1-3-2 0-2 2zM934 482l3.5-3-1.5-4-3.5 1 0 4.5zM889 494.5l-2.5-2.5-2 0.5-1.5 5 5 0zM918.5 486.5l-3.5-1.5-2 3 3.5 2.5zM903 492l2 0 1-1.5 0-2.5-2-1.5-3.5 2zM955.5 482l3 4.5 5.5-3.5-5.5-3-0.5-0.5zM918.5 480.5l-4 0.5-0.5 1 1 3 3.5 1.5 2-1zM940.5 469l1 0 2-2-1-3.5-4 0.5zM916 468l-3.5 0.5-2.5 3 4 4.5 3.5-2zM923.5 484l0-4.5-3-1-2 2 2 5 0.5 0zM922.5 489l-1.5-3.5-0.5 0-2 1-2 4 0.5 1 3 1zM906 490.5l4.5 1 1-3.5-2-2-3.5 2zM934 485.5l1-1-1-2.5-1.5-1.5-3.5 1-1.5 3.5 0 0.5 3 1.5zM898.5 493.5l2.5 0.5 2-2-2.5-3.5-3.5 3zM904 486.5l2 1.5 3.5-2 0-1.5-1.5-1.5-4 1.5zM863.5 486l1-3.5-2-2.5-3.5 5zM946 467l0.5 1 3.5-2.5-3-2-1 0zM940.5 489.5l-1-4.5-4.5-0.5-1 1 2 6zM891.5 493.5l-2.5 1-1 3 6 0-0.5-1.5zM893.5 476.5l4.5 0.5 1.5-3-1-2.5-5.5 1zM934.5 469l-4 1.5-0.5 3.5 2.5 2 3.5-1 1.5-1.5 0-2zM881 479l-0.5-2.5-7 0.5 0 3.5 3 3 1-0.5zM882.5 486.5l1.5-5-3-2.5-3.5 4 4.5 4zM895 487.5l2-1 0-3-1.5-1-2.5 3.5zM858 495.5l-1 4.5 6.5 0 0-1-2-3zM909.5 484.5l4.5-2.5 0.5-1-1.5-2.5-4.5 0-0.5 1 0 3.5zM915 493l-4-0.5-1 2 1 3.5 4 0zM893 480.5l0-3.5-5.5 0.5-0.5 3.5 0.5 0 3.5 0.5zM873.5 477l-1 0-5 1 1 4 0.5 0.5 4.5-2zM947.5 475l1 0.5 3-1 0-2-2-2-2 0zM923.5 468.5l6.5 1.5-0.5-7zM929 492.5l1.5-1 0-4.5-3-1.5-2 4.5 1 1.5zM874 495l-2-3.5-2.5 0-2 3.5 0 2 6 0.5zM890.5 519.5l1.5-2-0.5-3.5-4.5-2-3.5 5.5 1 2zM908.5 519.5l-4 0-2 5.5 1.5 0 4.5 0zM869.5 506l-3 4 2.5 3.5 4.5-2 0.5-2-1-2zM922.5 520l-5-1.5-2 3 0 3.5 9.5 0zM840 510.5l4-3-3.5-7.5-1 0-3.5 8zM905.5 501l-1 1.5 0 4.5 6 0.5 1.5-3.5-0.5-0.5zM866 503l2.5 0.5 2-2.5-1-4-6 0 0 0.5zM935.5 502.5l5.5-0.5 1-1 0-2.5-6.5 0-2 0zM860 513.5l1 0 2.5-4-1-3-2-1-5 2.5-0.5 0.5 0 1.5zM901.5 516l4-3-1.5-5.5-2.5 0.5-2 3 0.5 4 0.5 1zM899 501.5l5.5 1 1-1.5 0.5-3-7-0.5zM868 520.5l-4-1-1.5 1.5 0 4 6.5 0zM870.5 501l3.5 0 1-3.5-5.5-0.5zM876 517.5l-2.5 1.5-1 6 7.5 0zM965.5 503l3-4.5-5.5 0zM943 508.5l-2.5-1.5-2.5 1-1 2.5 3 4 3.5-1.5 0.5 0zM838.5 535l-3 0.5-1 5.5 5.5 0 1.5-1.5zM847.5 542.5l0 1.5 2 1 5.5-1.5 0-1-0.5-2-4-1.5zM856.5 536.5l4.5 1.5 1-7-1.5 0-4.5 3.5 0 0.5zM833.5 566.5l8-0.5 0-0.5-3.5-4-4.5 1-0.5 3zM853.5 562l-2.5 4 2.5 3.5 3.5 0.5 1-9zM848.5 583l-0.5 6 1 1 8-1.5-0.5-6.5zM849.5 545l-2-1-4.5 4 0.5 0.5 7.5 4.5 1-2.5zM847.5 535.5l-3 1.5-1 2 4 3.5 3-3.5-0.5-3zM840.5 594l0-0.5-5-2.5-2 5.5 1 2.5zM846.5 530l-4.5 1.5 2.5 5.5 3-1.5zM851 530.5l-4-1-0.5 0.5 1 5.5 2.5 0.5 1.5-1.5zM856 548.5l-1-5-5.5 1.5 2.5 5.5zM863 597l0.5-1 0 0.5 0.5-1-2.5-3.5-4.5 0.5 0.5 5zM871 571.5l4 3 3.5-1 1.5-8.5-5.5-1-5 3zM860.5 542l-0.5 6 6 0.5 1.5-1-3-5zM868 557l-3-3-6 0-1 7.5 2 0.5 6.5-3zM934 568l-1-1.5-2.5-1-2 0.5 0 2 0.5 1 4 0.5zM957 561.5l3 0 1-4.5 0-0.5-2.5-0.5-2.5 4.5zM928.5 552.5l-2 1-0.5 5 2.5 1.5 2.5-0.5 1.5-2.5 0-2.5zM953 593l-1-1.5-2.5-0.5-3.5 6 5.5 0.5zM929 589l-1 2.5 0 0.5 5.5 1 0-0.5 0-4-0.5-0.5zM941.5 564l0 1.5 4 2 1.5-0.5 0.5-1-2-4.5-1 0zM941.5 559l3 2.5 1 0 1.5-2 0-0.5-3.5-3.5-2 1zM923 564l1-4.5-3.5-1.5-2.5 3 1.5 3.5zM969 568.5l-0.5 0-0.5 3.5 1 2 3.5 0.5 1-4-1.5-1.5zM939 561l2.5-2 0-2.5-2.5-1.5-2 3.5 0.5 2 0 0.5zM940 589l-0.5 0-4.5-1.5-1.5 1 0 4 5 0zM950 540.5l-6-2-0.5 0-0.5 5.5 0 0.5 6 0.5zM941.5 529l1 0 3.5-2.5-1-1.5-4 0zM955.5 594l-2.5-1-1.5 4.5 4.5 0zM943.5 589.5l-3.5-0.5-1.5 3.5 1.5 4.5 4 0zM947 559.5l4.5 2 2-1.5-1-4.5-2-1-3.5 4.5zM928.5 572.5l-0.5 0.5 0.5 4.5 1.5 0 2.5-2.5-0.5-2zM956.5 565l2.5 1.5 3-1.5-1-3-1-0.5-3 0zM942 583l0.5-3.5-1-1-3 0.5-1.5 4 2.5 1.5zM954 574.5l4 0.5 0.5-0.5 0.5-3.5-0.5-0.5-4.5-1-2 2zM912 525l-8 0 1.5 7.5 3 0 3.5-7zM918.5 555l-3.5-3.5-2 1.5 0.5 5 0.5 0zM931.5 531l1.5-0.5 2.5-5.5-6.5 0zM942.5 574l1-1-0.5-1.5-3.5-2.5-1.5 0-0.5 2 2 2.5zM902.5 596.5l2 7.5 4.5-1.5-1.5-7zM909 593.5l5 4 6.5-1.5-4.5 0-2-5-4.5 0zM911 603l2 2.5 4.5-0.5 3-9-6.5 1.5zM989 668l6 0.5 0.5-8.5-0.5-2-8 6.5zM977 532.5l-0.5 0-5 3.5 1 4 2.5 0 3-3zM979.5 561l0.5-4-1.5-3-2.5-0.5-3.5 1.5-1.5 2 0.5 1 3 5zM994.5 528l-7 0-0.5 0.5 3 7 4.5 0.5 1-3.5zM966 541.5l5.5 0 1-1.5-1-4-2.5-1.5-5 2 0 0.5zM973 529l-3.5 0-0.5 5.5 2.5 1.5 5-3.5zM1039.5 512.5l4 2 4-2 0-5.5-5-1.5-4 4.5zM1034.5 521.5l-0.5 5.5 4.5 3 3-7.5-6-2.5zM1040 533l1-1 6-1-0.5-8.5-2.5-1-2.5 1-3 7.5zM1026.5 510l0.5-2.5-3-3-6 2.5 0.5 3.5 4.5 2.5zM1053 507l5 1.5 1.5-4.5-3.5-2zM1030 492l1 0 4-3.5-0.5-1.5-3-2-3 1-1 2zM1047 474.5l2 2.5 3-0.5 1.5-3-5.5-2.5zM994 483.5l5.5-2 0.5-3-2.5-3-5 6.5zM1050 494l1-1 1-1.5-3-3-1.5 0-2.5 3.5zM955 493.5l-0.5-3.5-0.5-0.5-2 1.5-3.5 1.5 5 2.5zM1022.5 492.5l4-4.5-4.5-3-1.5 1 0 5zM1033.5 495.5l-2.5-3.5-1 0-3.5 3 0 4 6 0zM959.5 494.5l-4.5-1-1.5 1.5 0 3.5 6 0zM1044 493l2 6 2.5 0 1.5-5-5-2-0.5 0zM959 486l-5 3.5 0.5 0.5 6 1zM987 442l1-0.5 0-10-3 6-1 3.5zM1009 461.5l-5 2 1 6 3-1 4-4zM1004 463.5l-2-1.5-2 0-4 4 5 5 0.5-0.5 3.5-1zM975.5 470l0.5 0 3-5-2-3.5-1.5-0.5-4.5 4.5 3 4zM966 460.5l-1-2-5 3-0.5 1 1.5 0.5 4-0.5zM987 463.5l3.5-4.5-0.5-0.5-4.5-2-1.5 0.5-1 2 2.5 4.5zM997.5 457.5l3.5-3.5-3-3.5-4 2.5 1 4.5zM1009 460l0 1.5 3 3 2.5-2.5 3-3-4-2.5zM1021 455.5l3-3.5 2.5 1.5 0.5-4.5-4 0-4.5 1zM966.5 467l-1.5-4.5-4 0.5 3 4.5 1.5 0zM997 476.5l4-5.5-5-5-0.5 0-3.5 2 3 7.5zM968 473l6-3.5-3-4-4.5 1.5-1 0.5 1.5 5.5zM978.5 455l-3.5 0-2 3.5 2.5 2.5 1.5 0.5 2-2zM998 450.5l3 3.5 4 0.5 0-0.5 0-7-6.5 0zM986.5 454l-1.5-3-1.5 0.5-2.5 2 3 3.5 1.5-0.5zM983 459l1-2-3-3.5-1 0-1.5 1.5 0.5 4.5zM1031.5 437.5l-4.5 4 0 5.5 11.5 0 0-1.5-5-7.5zM1072.5 415l3-4-2-1.5-9.5 0 0 4zM1012.5 434.5l0.5 2.5 1.5 1 7-5-5-3.5zM1048.5 429l1.5 0 4-4.5 0-2.5-5-3.5-1 0.5-3.5 5zM1002 422.5l2-1 0-6.5-5.5-2-3 4zM1005 421.5l-1 0-2 1-1 2 5.5 6.5 1-0.5 2.5-4.5zM1008 412l0.5-2.5-8 0 0-4.5-3 1 1 7 5.5 2zM1022 433l-0.5 0-7 5 1 2.5 3.5 1 4-2.5zM1022.5 416.5l-1-1-5-1.5-3.5 4 0.5 1.5 6 2.5zM993.5 424l7 1 0.5-0.5 1-2-6.5-5.5-1.5 0zM1027.5 432.5l1.5-6-2-2.5-3.5 1-0.5 7.5zM1012 418l-4-6-4 3 0 6.5 1 0zM1038.5 418l0-1-2.5-3-6.5 2.5-1 1 0.5 1.5 5.5 2.5zM993 432.5l-4.5-6.5-0.5 0 0 5.5 0 4.5 4-1.5zM1037 428l-0.5 0-6.5 6 1.5 3.5 2 0.5 6.5-4.5zM1097.5 374l0-4.5-2.5-1.5-1 0-4.5 6 5.5 3zM1094 368l-4-2.5-5.5 2-0.5 1 2.5 6 3-0.5zM1095 368l2.5-8-7.5 0 0 5.5 4 2.5zM1095 377l-5.5-3-3 0.5-1.5 3 1 2.5 5 3.5 4-4.5zM1084 368.5l-6.5 1-2.5 7 10 1 1.5-3zM1075 376.5l2.5-7-4.5-6-6.5 5 2 5.5 5 3 1 0zM1021 392l0.5 0.5 6 2 4-6.5-10-1.5zM1082 360l-7.5 2.5-1.5 1 4.5 6 6.5-1 0.5-1zM1054 395l-2-2-7.5 1 0 2.5 6 5zM1106.5 387l-6-2.5-3.5 3 0 2 3.5 4.5zM1104 376.5l-6.5-2.5-2.5 3 0 2 5 2.5zM1106.5 387l-6 7 0 1 1 1 6.5 1-0.5-10zM1080 392.5l0.5-3.5-0.5-1-3-2-8.5 3 1.5 8 4 0.5zM1068.5 374l-7.5 5 5 4.5 7.5-6.5zM1033.5 400l1.5 0 1-5.5-3.5-6.5-1 0-4 6.5 0.5 2.5zM1022.5 401.5l4 5.5 7-7-5.5-3zM1080 388l6-8-1-2.5-10-1-0.5 0.5 2.5 9zM1116 384.5l-8 1.5 5.5 5.5 3-0.5 1-2.5zM1117 397l4.5 0.5 0.5-3.5-4.5-0.5zM1170.5 334l-6-5-2.5 2.5-1 5-4 4.5 1 3-2 2.5-0.5 1-3.5 3 9 7-1 9 4 1.5 8.5-5 1-1.5-5.5-5.5 1-7-2-2.5 4-11zM1183 343l-12-7.5-4 11 2 2.5-1 7 5.5 5.5 2.5-0.5 4-5-1-7zM1157.5 367l2.5-0.5 1-9-9-7-3 2.5-1 2.5-4-0.5 0 1zM1157.5 367l-13.5-11 1 13.5 0.5 11 5.5-0.5 3.5-5.5-0.5-2.5z"/>
<path fill="#fab984" d="M312 338.5l-0.5-3.5-9-1.5-8 8.5 4.5 8 7.5-2 3.5 0.5zM332.5 344l-20.5-5.5-2 10 4.5 0.5 11.5-1 7.5-1.5zM322.5 298.5l12.5 14.5 13-3 0-16-25 0zM367.5 323.5l-15.5-2-1 4 0 2.5 10 6 0.5 0 5-3.5zM277.5 345l3.5-5-4.5-1-5 0zM275.5 349l2-1.5 0-2.5-6-6-4.5 0 2 6 0 3zM269.5 360.5l2-1 5-6-1-4.5-6.5-1 0 3.5-0.5 8.5-0.5 0zM269.5 360.5l-1.5-0.5-1 6.5-1 10-0.5 3 3 0.5 5.5-12zM270 398l4.5-4.5-1.5-11-4.5-2.5-3-0.5-0.5 2.5-2.5 6-3.5 7.5 0.5 1.5zM270 398l-10.5-1 2 5.5 2.5 6 0 1 6 0zM324.5 366l-0.5-3-2.5-2-15 0 0 0.5-3 5.5 1.5 4.5 17-2zM336.5 357l7.5 4 4-2.5-1.5-14.5-5.5 0.5-7 1.5zM278 420.5l2-1.5 1-9.5-17 0 1 4 1.5 5.5 0 2.5zM280 419l11 7 16-7.5 0-9-26 0zM312.5 427l-1.5 8.5 21.5 7 2 0 0-17zM311 435.5l-1.5 2 4.5 9.5 3 0.5 15.5-5zM285.5 447.5l6.5 4.5 8-3.5 0.5-4-16-2.5zM293 457.5l1.5 0.5 7.5-3 0-2-2-4.5-8 3.5zM317.5 465.5l-2 0-0.5 1.5 3 9.5 3 2 7-9.5zM328 483.5l1 2.5 13 5.5 8.5-0.5-6-9-13-2.5zM313.5 491.5l-7.5 7.5-0.5 1 18.5 9.5 0-0.5 3.5-4.5 0-3.5-1.5-3zM349 427.5l9-1 2 1 10-1 1.5 1 5.5 0 6.5-3 0-15-13.5 0-12 0-9.5 0-3.5 10.5zM383.5 409.5l0 15 6.5 3.5 7.5-3 6 3 0 11.5 3.5 4 9.5-0.5 1 1 15.5-1 0-14.5 0-19-11 0-11.5 0-13 0zM361.5 457l8.5 4 5-5.5 1-6.5-2-4-4.5-2.5-7 1-2.5-1.5-10 1-0.5 2 2 11.5 3.5 2.5zM397 331.5l1-2.5-14.5-3.5 0 8.5zM398.5 355l0 13.5 17.5 2 2-6.5-1.5-7.5zM416.5 372.5l-0.5-2-17.5-2-2 2 0 1 1 7.5 6 3.5 8.5-2.5zM396.5 371.5l-12 3 1.5 4.5-2.5 0.5 0 1.5 12 0 2-2zM403.5 382.5l-1.5 11 5.5 6 7-12-2.5-7.5zM410.5 408.5l-3-9-5.5-6-11.5-1-7 2.5 0 14.5 27 0zM464.5 390.5l-0.5-4-7.5-4.5-3 0-6 6.5 0.5 1 10 6zM471.5 400.5l-2.5-0.5-5 5-0.5 4.5 12.5 0zM425 386.5l-5.5 2.5 2 8.5 4.5-1 3.5-7zM438.5 323l6-10-5-5-17.5 5 0 4 4 6zM475.5 341.5l-2.5-9-5.5-2-10 3 6.5 13.5 8.5-0.5zM523 360l-40.5 0 0 8 0 9.5 9 5 15.5 2 16-14zM545 374.5l18-9 2-5.5-25.5 0 4 13zM537.5 402l0-6-9-8.5-17 0 7 16 18 0zM507 384.5l-15.5-2 12.5 31.5 3 2.5 3.5-3.5 8-9.5-7-16zM536.5 413l-26 0-3.5 3.5 2 9.5 6.5 0 21 0zM578 415l-1-5.5-2.5-7-11-1.5-1.5 2 0 8.5zM518.5 403.5l-8 9.5 26 0 0-9.5zM579 416.5l-1-1.5-16-3.5-3 9.5-1 5 18.5 0zM504 414l-12.5-31.5-9-5 0 32 0 4.5zM479.5 424l-5-3-7.5 7.5 7.5 4.5 3.5-2zM486 436l0 8 12.5 2 2-10.5-5-8.5zM500.5 449l15 1 0-16.5-15 2-2 10.5zM461 453.5l1.5-6.5-1-2.5-3.5-4.5-25 5.5 0 8zM479.5 459.5l2-3.5 0-9-0.5 0-18.5 0-1.5 6.5 0.5 2.5zM473 472l3-1 4-7-0.5-4.5-18-3.5-1 5zM553 426l-13 0-0.5 14 1 3 2 2 12-4.5 1-2zM603.5 448l7-8-8-13-5.5 13 5 7zM569 438.5l-2-3-11.5 3-1 2 5.5 6.5 7-2 2-3zM567 445l-7 2-0.5 3.5 6.5 5 3.5-3.5zM574 452l-4.5 0-3.5 3.5 0 3 5 6 1-1 5-6zM577 457.5l-5 6 12.5 4 0.5-6.5-4.5-3.5zM556 468l12.5 3 2.5-6.5-5-6-10.5 3.5-0.5 1.5zM571 464.5l-2.5 6.5 0.5 1.5 14.5 0 1.5-3-0.5-2-12.5-4zM552 474.5l3.5 5 9 0 4.5-4.5 0-2.5-0.5-1.5-12.5-3-4 5.5zM515.5 484.5l0 7.5 13.5 0 0-7.5zM554.5 488l-10.5-4.5-2.5 3-0.5 5.5 13.5 0zM502 492l0 14 0 12 0 12 0 8.5-4.5 6 3 6 3 1.5 12-4.5 0-4.5 0-13 0-12 0-12 0-14zM483.5 553.5l9 5.5 8-8.5-3-6-5.5-0.5-8-9-6 1.5-3 4.5 2 10 5.5 3zM439.5 554l7-15.5-2-1.5-14.5 0.5-3.5 3-1.5 5.5-3 5 0 0.5zM581 492l-19.5 0 1.5 12.5 11 5 6.5-7.5zM539.5 507.5l-24 2 0 19 25-11zM544 525.5l-0.5-4.5-3-3.5-25 11 23.5 11 3.5-4zM579 535l-2.5-10-2.5-2.5-10.5 1.5-3 5-1 8 4 6.5zM600 531.5l1 4.5 14.5 1.5 0-16.5zM583.5 557l1.5-14-5-7.5-1-0.5-15.5 8.5-1.5 9zM560 557l4.5 17.5 17 0 2-17.5-21.5-4.5-1 1zM544 565l-7-4.5-8.5 10 2 7.5 15.5 0zM605.5 317.5l-2.5 7.5 3 2 7.5-3.5-1-3.5-6-2.5zM650.5 335.5l1.5 9 6 0 0.5-11.5zM628.5 361.5l0 8 11 0 1.5-4.5-1.5-3-7.5-2.5zM639.5 369.5l2.5 6.5 5.5-0.5 5.5-7 0-1.5-1-3.5-11 1.5zM628.5 369.5l-2 2.5 5 9.5 2.5 0.5 6.5-3 1.5-3-2.5-6.5zM664.5 428l4.5 3 4.5-4.5-1-5.5-1.5-1-6 2-2 2.5zM693.5 435.5l-1-2.5-5-3-4.5 5.5 2.5 7 6 0zM673.5 426.5l4.5 1.5 3-2-0.5-6-8 1zM703 430.5l3.5-3.5 0-4.5-3.5-2.5-6 2-0.5 1.5 1 4.5zM673 408l-3.5 0-3.5 4 5 6 5-6zM706.5 427l-3.5 3.5 0 5 9 0.5 0.5-0.5 0-5zM712 436l-9-0.5-0.5 0.5 0 6.5 9.5 0zM741.5 483.5l3.5-3-0.5-6.5-8.5-2-2.5 6.5 0.5 2.5zM645.5 459l2.5-3.5-1-2.5-4-1-4.5 4 0.5 1zM653.5 448l0.5-5.5-6.5 0-1 4.5 2 2zM729.5 460.5l1.5-1.5-3-8-2.5 0-3.5 4.5 0 3 1.5 1.5zM675 465.5l3.5 3.5 0.5 0 5.5-3.5-5.5-6zM712.5 480l9.5 3 3-7-0.5-2-8.5 0.5-3.5 5zM745.5 457l2.5 4.5 6.5-0.5 0-4-4.5-5zM676 488l0 4 11 0-3.5-7-0.5-0.5zM733.5 478.5l-8.5-2.5-3 7 0.5 1 8.5 1 3-4zM724.5 474l0.5 2 8.5 2.5 2.5-6.5-1-2-5-2-4.5 2zM687 456l0-4-5.5-2-5 6 2.5 3zM717 535.5l0 1.5 4.5 3.5 5-5-5-4.5zM729 535.5l-2.5 0-5 5 0.5 3.5 7-0.5zM724.5 494.5l2 4 6 0.5 1.5-5-0.5-2-9 0zM713 515l1.5-1 1.5-4-5.5-3.5-3.5 2-0.5 2 2.5 4zM709 514.5l-2.5-4-4.5 3 1.5 4.5 2 0.5zM695 501l6 2 3.5-4-1.5-7-9 0zM749 532.5l-3 10 11 4.5 0.5-14zM732.5 499l-6-0.5-1 3 1.5 4.5 3.5 0.5 2-2 0-5zM725.5 515.5l-0.5 0.5 2 8.5 3.5 1 3.5-2.5 1.5-5-2.5-3.5zM751 502l-3 4 1 6 7.5 0-1.5-10zM716.5 510l9 5.5 0-7.5-6.5-1zM711 529.5l-2-5-7 2-1 6.5 6.5 1zM709 524l0 0.5 2 5 1.5 0 7.5-3-2-4-6.5 0zM740 542.5l-1-10.5-7 0-2 3zM701.5 505l5.5 3.5 3.5-2 0.5-5.5-6.5-2-3.5 4zM732.5 504.5l7 2 1.5-2-0.5-2-1-2-7-1zM747.5 514l-3 0.5-3.5 3 4 10.5 5.5-6zM688.5 529l0.5 10.5 1.5 0 1.5 0.5 5.5-7-6.5-5.5zM685.5 651.5l4.5 7 5.5 0.5 4.5-5.5-1-3-5.5-4-5 1.5zM718.5 553.5l-1.5-9.5-5 0-2.5-0.5-0.5 8.5 6 3.5zM714.5 560l5.5 4.5 2.5-0.5 1.5-2.5-0.5-5-2-2.5-3-0.5-3.5 2zM723 609l-4 1-1 7 5.5 5 4-1 3-4 0-1-1-2.5zM704 590l-1 4 2.5 5 9.5-1 0-0.5-1-6-3.5-2.5zM629 511l-0.5-0.5-5-2-8 4.5 0 4.5 7.5 1.5 5-4.5zM753.5 574.5l1.5-1.5-1-6.5-5-2.5-5 5.5 0.5 2.5zM711.5 619.5l6.5-2.5 1-7-4-3-6 2-1.5 4.5zM747.5 613.5l-0.5-0.5-4.5 1-3 6.5 1.5 5 2.5-1 7-5zM710 623.5l3 4.5 7 0.5 3.5-6.5-5.5-5-6.5 2.5zM700 637.5l4 5.5 2.5 0.5 5.5-7-1.5-3-9.5 0zM744.5 594.5l5.5-5-3.5-4.5-5 2.5 1 6.5zM738.5 563l-7 1-0.5 4 3 2.5 5.5-4-0.5-3.5zM760.5 561l-6.5 5.5 1 6.5 9-0.5 0-11.5zM699.5 613.5l1 1.5 7-1.5 1.5-4.5-4.5-4.5-5 4zM715 597.5l6 0 5-5.5-0.5-4-4-3-7.5 6.5zM654.5 582.5l5 4 6.5-4-0.5-2.5-4.5-2.5-5.5 3zM736 585l-2.5-1.5-8 4.5 0.5 4 4 2 5-1.5zM695.5 595l7.5-1 1-4-2-3-5.5-1.5-3 3.5zM753.5 579l4 5 1 0 7.5-6.5-2-3 0-2-9 0.5-1.5 1.5zM746.5 585l3.5 4.5 2.5 0.5 5-6-4-5-7 3zM752.5 590l2.5 4.5 6 2 1.5-1 0.5-6.5-4.5-5-1 0zM694 622.5l1.5 7 4.5 2.5 4.5-8-4.5-4-5.5 2zM724.5 543.5l-2.5 0.5-5 0 1.5 9.5 3 0.5 4-5zM735 592.5l-5 1.5 1 7.5 6-2 1.5-4.5zM759.5 346.5l0.5-0.5 7-6-1-2.5-7.5-1-4 4.5zM780 305.5l6 6.5 4 0 3.5-6.5-0.5 0-11-5.5-1.5 0zM781 344.5l-3 2.5-1 9 8.5 0 0-1-1.5-9.5zM781 344.5l-2.5-8-10 4.5 2.5 5.5 7 0.5zM779 335.5l7.5-3 1-4.5-3-5-4-1.5-3.5 1.5-1 8zM812 310.5l-8.5 10 2.5 4.5 3.5-2.5 7-4zM768.5 322l-7.5-1.5 0 8.5 6 2 0.5 0zM750 352l6-0.5 3.5-5-5-5.5-0.5 0-7 6.5zM781.5 366.5l-6-9-6 5 0 1 1 2.5 8.5 3.5zM747 347.5l-5-9.5-3 1.5-3.5 7.5 3.5 3zM767 331l-1 6.5 1 2.5 1.5 1 10-4.5 0.5-1-3-4.5-8.5 0zM771 346.5l-2.5-5.5-1.5-1-7 6 6 5.5 2.5-1zM768.5 301.5l-0.5 0-7-1.5-2.5 7 3 5 7-1.5zM761 320.5l-7.5 3 0.5 6 3 1.5 4-2zM754.5 341l4-4.5-1.5-5.5-3-1.5-2.5 1-2 5.5 4.5 5zM768.5 310.5l2.5 1.5 4-0.5 5-6 0.5-5.5-2.5 0-9.5 1.5zM762 366l-0.5 6 7 2.5 2-8.5-1-2.5zM747 347.5l7-6.5-4.5-5-6.5 1-1 1zM809.5 414.5l0.5-2-1-1.5-6 2 1 6 2 0.5zM767.5 396.5l-3.5 7.5 3.5 3.5 3.5-1 2-4.5-3.5-5.5zM760 389l-4.5 1-1 2 6 3.5 3.5-1.5zM778 426.5l-6 1-1 5 7 0zM781.5 426l4.5-3.5-0.5-3-4-1.5-4 3.5 1 4zM810 412.5l5 1 2.5-1.5-3-5.5-5.5 4.5zM765.5 471.5l-2.5-3.5-8.5 1 0 7 2 0.5 8-2.5zM819.5 468l-1.5-5.5-5 0-3 3.5 3.5 5.5 5-1zM783 484.5l-1-5-5.5 1.5 0 3.5zM779.5 491l-4 3 1 6 5.5 0 1.5-6zM818 462.5l1.5 5.5 8-1 0-5.5-7-2.5zM765 458l0.5 3 9 2.5-0.5-9-4-1zM760.5 497l-1 3 9 0-0.5-4zM798.5 464.5l5.5 3 2.5-2-1.5-7.5-5.5 0.5zM759.5 451l-3 1.5-2 4.5 0 2 8.5-2.5-1.5-4.5zM812 456l-3.5-6-3.5 1.5 0 6 6 0zM775.5 494l-3-1.5-4.5 2.5 0 1 0.5 4 8 0zM792.5 485.5l3.5 5 5.5-3.5-2.5-5-4.5 0-2 1.5zM746.5 435.5l2-2.5 0-0.5-13 0 3 4 1 1.5zM789 493.5l-1.5-1-4 1.5-1.5 6 8.5 0zM756.5 452.5l-4-4-3.5 2 1 1.5 4.5 5zM760.5 485l-6 1.5 0 4 0 1.5 5.5 1 3.5-3zM805 457.5l0 0.5 1.5 7.5 3.5 0.5 3-3.5-2-5zM793 447.5l-1.5 3 4.5 5 0.5 0 2.5-4-3.5-5zM813.5 471.5l-1.5 3 4.5 6 1.5-0.5 3.5-5-3-4.5zM788.5 474.5l5.5-0.5 0.5-0.5 0-7.5-2.5-1.5-5 1.5-2 3.5zM760.5 497l-0.5-4-5.5-1 0 1 0 7 5 0zM778.5 452.5l5.5 4.5 2.5-1 1.5-4.5-3.5-4-2-0.5zM832 487.5l0.5-0.5 1.5-4.5-3-3-0.5 0-3.5 4.5zM756.5 476.5l5 6.5 4.5-2-1.5-7zM803 541.5l0.5-1 0-7-6.5-0.5-3 3.5 1.5 2.5zM770 524.5l7 1 1-2-1.5-5-4-1-4 3zM766.5 540l-1 5.5 3 2 5.5-1 0-3.5zM781 514.5l4 7 4-2.5-1-5.5-7 0.5zM810 511.5l5.5-3.5-3.5-4-1.5 0.5-3 3.5zM825.5 509l1.5 5 6 1.5 3-7-9.5 0zM787.5 542l0.5 1.5 2.5 2 3.5 0.5 1.5-7-1.5-2.5-2 0zM782.5 507.5l5 0-0.5-7.5-6.5 0zM789.5 534l-1.5-5.5-2-1-5 4 1 4.5 1 0.5zM795 547l7.5-3 0.5-2.5-7.5-2.5-1.5 7zM801.5 505.5l1 3 4-1-1-4-1.5-1zM810 511.5l-2.5-3.5-1-0.5-4 1-1 1.5 0.5 5 0.5 1 7.5-3zM792.5 520l-3.5-1-4 2.5-1 1.5 2 4.5 2 1 7-3.5zM781 569.5l5 2 5-4-0.5-2-8.5-3-1 1zM791 587l-4.5-2-3 2.5 4 7 2 0 0.5 0zM771 574l0.5-1.5-5.5-5-2 0 0 7 1.5 2zM787 578l4.5 0 3.5-5-2.5-5-1.5-0.5-5 4zM835 609.5l3.5 1.5 4-4.5-5-2 0-1zM803.5 608.5l0.5 1 8-2.5-1.5-3.5-4.5-1zM779.5 587.5l-1.5-5-5.5-1-2.5 1.5 2 6 0 1.5zM827 617l4.5-2.5 0.5-4.5-2-1.5-7 2-1 1 0 1zM818.5 615.5l-6-2-1.5 1-1.5 4.5 6.5 4 2 0zM871 376l0.5-1.5 1-5 1-2-4.5-3-1 0-1.5 1.5-3 5 1.5 3.5zM855.5 349l6 4.5 4-2-3-7-4.5-1zM796.5 352.5l0.5 7.5 4 1.5 4.5-8.5-1-1zM835.5 380l4 3.5 6.5-4-0.5-5.5-4-3.5zM796.5 345.5l4.5-1.5 0.5-5-7-2-1.5 4.5-1 0.5zM833.5 362l6.5 0 2.5-6-6.5-2-2 2zM824.5 390.5l0.5 10.5 4.5 0 4.5-9-5.5-3zM840 362l3 4.5 3.5-1.5 0-7.5-4-1.5zM812.5 359.5l0 0.5-4 4.5 1 4.5 6 2.5 4.5-6.5-0.5-1.5zM804 346.5l-3-2.5-4.5 1.5-1 6 1 1 8-0.5zM824.5 390.5l-4.5-1-4.5 9 5 2.5 4.5 0zM857.5 357l-5.5-2-2 2 2.5 5.5 3.5 0zM828 349l1 5 5 2 2-2 0-7zM831.5 374l-6-1-1.5 2.5 0 4 5.5 3.5 5-3.5zM816 373.5l-0.5-2-6-2.5-5.5 5.5 5.5 4.5 0.5 2 4-2zM801.5 339l0.5-0.5-2.5-7.5-3.5 0-1.5 6zM834 392l-4.5 9 9.5 0-4-9zM858 364.5l6.5-2.5-4-6.5-3 1.5-1.5 5.5zM793.5 361l-3.5 6 3 2 5 2 3.5-8.5-0.5-1-4-1.5zM791.5 352l4-0.5 1-6-4.5-3.5-4.5 1.5zM852 355l5.5 2 3-1.5 1-2-6-4.5-1.5 0.5-2 2.5zM846.5 357.5l3.5-0.5 2-2 0-3-7.5-2.5-2 6.5zM866 388l3-8.5 2-3.5-6-1.5-4 4 2.5 9zM820 389.5l-0.5-1-8-0.5 1.5 9 2.5 1.5zM808.5 364.5l-7-2-3.5 8.5 1.5 0.5 4.5 3 5.5-5.5zM873.5 367.5l4-7 2.5-5.5-6 5-5 4.5zM860 388.5l3.5-1-2.5-9-5.5-1-3 4zM804.5 337.5l-2.5 1-0.5 0.5-0.5 5 3 2.5 8.5-4.5 0.5-0.5zM846 379.5l5 2.5 1.5-0.5 3-4-1.5-5.5-1.5-0.5-7 2.5zM833 470l2-4.5-2.5-1.5-5 2.5 0 0.5 3.5 4zM842.5 424l2.5 3 0.5 0 3.5-3.5-0.5-2.5-4-1zM836.5 472l-3.5-2-2 1 3.5 4.5zM863.5 427.5l-2.5 2.5 1 4 5-0.5 0.5-0.5-1.5-5.5zM844 407l-0.5 4.5 4.5 0 1.5-2-3-4zM824 425l1-10-0.5-0.5-11 5.5 0 1zM845.5 492l10.5-2 2.5-3.5-4.5-5-6 1zM861.5 462l3-5.5-5.5-4.5-3 0.5-1.5 5.5 4.5 5zM831.5 424l-3.5 2 2.5 7.5 3.5-1.5 2-4zM834.5 443.5l1 1 5.5-2 0-3.5-2-2-3.5 2-1.5 3.5zM898.5 378.5l-9 4.5 2 5 10.5-2 0.5-0.5-0.5-4zM918.5 406l3.5 2.5 2-1 1.5-4-2-3.5-5 1-1 2zM930 412.5l-6-5-2 1-2 5.5 10.5 0zM916.5 370.5l-4.5 5 4 3 3-1.5 0.5-5zM889.5 406.5l-0.5 1-5 5.5-0.5 0.5 11 0-0.5-3.5zM922 353.5l1 2.5 4 0.5 4-5-4-2-3-1zM925.5 403.5l-1.5 4 6 5 3-7-1-1.5zM916.5 357.5l1 6 4 0 1.5-7.5zM907.5 406.5l0.5 7 1.5 0 4-5-2-3zM930.5 362l-4.5 4 4.5 5.5 5.5-1.5-1-5.5zM904.5 394.5l-3-2-2 1-1.5 4.5 1.5 2.5 4.5-0.5zM908 378l1-2-1.5-3-5.5-2.5-4 2.5 0.5 5.5 3.5 3zM949 391.5l-2 2.5 0.5 2 3 4 4.5-1.5 1.5-5.5-0.5-1.5zM930.5 362l4.5 2.5 7-3.5 0-1-2-4.5-3-1zM907.5 373l4.5-7.5-0.5-0.5-8.5-1-1 6.5zM947.5 385.5l1.5 6 7 0-1-3.5-1.5-6zM916 383l0-4.5-4-3-3 0.5-1 2 4.5 7zM926 375.5l3-0.5 1.5-3.5-4.5-5.5-0.5 0-3.5 5.5zM912.5 403l-1 2.5 2 3 1.5 0.5 3.5-3-1-3zM905.5 405l-4 2.5 1 6 5.5 0-0.5-7zM935 364.5l1 5.5 4 2.5 1-1 1-7 0-3.5zM937 405.5l-4 0-3 7 0.5 1.5 9 0 2-2.5zM918.5 401l-3.5-5-3.5 0.5-1 2.5 2 4 5 0zM912.5 385l-4.5-7-6 3.5 0.5 4 8 2.5 1-1zM892.5 402.5l-3 4 4.5 3.5 4-4.5-0.5-0.5zM938 397l-0.5-0.5-5.5 2 0 5.5 1 1.5 4 0 3.5-5zM921 335.5l-0.5 0.5-6-1-0.5-4-5 9.5 0.5 2.5 4.5 0.5 4.5 2.5 1-0.5zM910 446l0.5-2-3-4-2 0-1.5 1 2 4.5zM897 430.5l-0.5 3 3 2 2.5-1 1-4-1-1.5zM878 463.5l0 2 2 2 3.5-2.5-1.5-3.5zM916.5 417.5l0-3.5 0-0.5-5 0 0.5 2.5zM902 434.5l3 1.5 3-2-1-3.5-4 0zM883 417.5l4 1 1.5-5-5 0-1.5 0.5zM878.5 458l1.5-0.5 1-4-2.5-2.5-1.5 0.5-2 4.5 0.5 0.5zM875 462l-1-2-4-0.5 0 1 1.5 4.5zM879 441l-3.5-3-3.5 0.5 0 7 6 0zM908 434l1.5 0.5 2.5-1.5 0.5-2.5-1-2-3-0.5-1.5 2.5zM889 432.5l-6 0 0 1 1 6.5 1.5 0.5 2 0 3-6zM869 473l4.5 0 1-2-1.5-3-1-1-5 3.5zM875 456l-3.5-1-1.5 4.5 4 0.5 1.5-3.5zM900 466.5l-4 1.5-0.5 4 6-1 1-1.5zM869 473l-2-2.5-2 1.5-1.5 6.5 5-1zM900 463.5l-4-1-2.5 2.5 2.5 3 4-1.5zM885 470.5l-1.5 0.5-1 5 1.5 0 4-1.5zM909 458l-2.5 3 0.5 3 0-0.5 5.5-3.5zM910.5 444l3-1.5-1-4-2-1-3 2.5zM933 422l1-0.5-2.5-7.5-3 6.5 0 0.5zM941.5 450l1.5-3-0.5-1-4.5-3-4.5 3.5 5.5 4.5zM919.5 422l2-4-5-0.5 0 4.5zM928.5 421l0-0.5-3-1.5-1 0.5-1.5 4.5 2 2 1.5 0zM940.5 425l-3-4.5-3.5 1-1 0.5 0 3 3 3 4-2.5zM923.5 449.5l1-6.5-4-3-4 0 0 11.5zM937.5 420.5l0-0.5-1.5-6-4.5 0 2.5 7.5zM962 442.5l-6 2.5 0.5 3.5 3.5 1 3-1.5zM929 427.5l4-2.5 0-3-4.5-1-2 5zM959 455.5l1.5-1.5-0.5-4.5-3.5-1-2.5 2.5 0 0.5 4.5 4zM925.5 419l3 1.5 3-6.5-4.5 0zM969 446l5 0.5 1.5-1.5 0-2-2-1.5-5 2zM966.5 458l1-1 3.5-3-4.5-2.5-2 2.5zM950 462.5l0-6.5-3-1.5-1 0-2 2.5 4 7zM983.5 427.5l-4.5 3 0.5 3.5 6.5 1.5 2-4 0-2.5zM984 416.5l1-6-6 2 1 3zM972 422l-2.5-5-1 0.5-5 0-1.5 0 0 0.5 6 7zM944 457l-2 0.5-2.5 5 0 1.5 7.5-0.5 1 0.5zM962 441.5l0 1 6 0.5 0.5-5-2.5-1.5zM946 454.5l-4.5-4.5-2.5 1-1.5 3.5 4.5 3 2-0.5zM971.5 430.5l0 1 2 4 4.5 0 1.5-1.5-0.5-3.5-3-2zM910 494.5l1-2-0.5-1-4.5-1-1 1.5 1 3zM936 491.5l-3 1-0.5 6 3 0 3-1.5zM949.5 470.5l2.5-3.5-2-1.5-3.5 2.5 0.5 2.5 0.5 0zM908 479.5l0.5-1-1-6-0.5-0.5-4 3.5 1 3.5zM897 491.5l-3.5 4.5 0.5 1.5 2.5 0 2-4zM924 494.5l-3.5-1-1.5 4.5 6.5 0zM848 497l3.5-2-1-4-5 1-0.5 3zM864.5 482.5l4-0.5-1-4-4 0.5-1 1.5zM930.5 470.5l-0.5-0.5-6.5-1.5-0.5 4 4 3 3-1.5zM879 490.5l-4.5-2.5-2.5 3.5 2 3.5 4.5-2.5zM926.5 506.5l-1.5-2.5-2.5-0.5-1 4.5 1.5 1.5 3-1.5zM854 518.5l2 1 1-0.5 3-5.5-5-3.5-2.5 3.5zM921.5 508l-4 0-1 2 4.5 3.5 2-2.5 0-1.5zM942 501l-1 1-0.5 5 2.5 1.5 4.5-3 0-1zM848.5 520l-5.5-1-1 2 1 4 5.5 0zM835 515.5l5-4.5 0-0.5-4-2.5 0 0.5-3 6.5zM876 503l-2-2-3.5 0-2 2.5 1 2.5 3.5 1.5zM921 513.5l-3.5 3.5 0 1.5 5 1.5 1.5-3zM898 519l3.5 6 1 0 2-5.5-3-3.5-1 0zM927 502l3 0.5 3-4-7-0.5zM873.5 519l2.5-1.5 1-1.5-3.5-4.5-4.5 2-0.5 0.5 2 4zM863.5 509.5l3 0.5 3-4-1-2.5-2.5-0.5-3.5 3.5zM855.5 525l5.5 0 1.5 0 0-4-5.5-2-1 0.5zM857 519l5.5 2 1.5-1.5 0-3.5-3-2.5-1 0zM900 515l-7.5-1.5-1 0.5 0.5 3.5 5.5 2 0.5-0.5 2.5-3zM914.5 514l3 3 3.5-3.5-4.5-3.5-1 0.5zM935 505.5l0.5-3-2-4-0.5 0-3 4 1 3.5 0.5 0.5zM884.5 519.5l-1-2-4.5-2-2 0.5-1 1.5 4 7.5 2.5 0zM866 503l-2.5-5.5 0 2.5-4.5 0 1.5 5.5 2 1zM922.5 503.5l-0.5-0.5-0.5 0-5 1 1 4 4 0zM879.5 497.5l-4.5 0-1 3.5 2 2 3 0.5zM833.5 521.5l3-2 0-2-1.5-2-2-0.5-2.5 5zM962.5 506.5l3-3.5-2.5-4.5-4.5 0 0 1.5zM911.5 503.5l0.5 0.5 4.5 0 0.5-6-4.5 0zM904.5 519.5l4 0 1.5-1.5 0-2.5-1.5-1.5-3-1-4 3zM848 507l7 1.5 0.5-0.5-2-8-4 0zM890.5 519.5l-6 0-2 5.5 9 0zM844 507.5l-4 3 0 0.5 2.5 4 5-1.5 0.5 0-1-6zM830.5 573l2.5 2.5 6-2 0-1.5-5.5-3zM834.5 541l-2 1 0 2 3.5 4 5-1-1-6zM851 553.5l-2 4 4.5 4.5 4.5-1 1-5zM856 535l0-0.5-2-5.5-3 1.5 0.5 4zM840.5 593.5l2.5-4-3-4.5-5 2-0.5 3.5 0.5 0.5 0.5 0zM834.5 529.5l5.5 2.5 1-0.5-1-6.5-1.5 0zM855 542.5l0 1 1 5 3.5 1 1-7zM825 589l-3.5-5-4.5 0-1 7 9 0zM841.5 566l0 0.5 3.5 0.5 2-1 0.5-8-3 0-3 7.5zM819.5 567.5l1-3-3-4-1 0-4 1 2 6-0.5 1zM862.5 580l2.5-2.5 0-1.5-4-4-4-0.5-0.5 4.5 0 4.5zM900 574l-0.5-1-6-3.5-4.5 2-0.5 2.5 5.5 5zM887 553.5l-4.5 7 0 3 2 0.5 7.5-2.5 1-4-2-3-2-1zM883 581.5l9.5 5 2-2.5-0.5-5-5.5-5-5.5 2.5zM903.5 583l2-3.5-4.5-5-1-0.5-6 5 0.5 5zM889.5 546.5l-3-3.5-1.5 0.5-4.5 6 6.5 4 2 0zM872 532l7 3 2.5-2-2.5-8-5.5 0zM872 549.5l-3-2-1.5 0-1.5 1-1 5.5 3 3 4-1zM885 543.5l-6-4.5-3.5 2.5 2 6.5 2.5 1.5 0.5 0zM882.5 533l5.5 2 1.5-1 0-9-1.5 0zM901.5 543.5l4 2 2.5 0-1.5-7-5.5 2.5zM906.5 591l7.5 0-2-9.5 0.5-2-3-1-4 1-2 3.5zM866.5 587l6-4.5-0.5-1.5-7-3.5-2.5 2.5 2.5 6.5zM926 558.5l0.5-5-4-1.5-3.5 3 1.5 3 3.5 1.5zM924 565l3.5 0.5 1-5.5-2.5-1.5-2 1-1 4.5zM942.5 529l3 4.5 3-1-2.5-6zM943.5 555.5l1.5-2.5-1-2.5-1-1-3 1-1 4.5 2.5 1.5zM941 565.5l-4-1.5-0.5 3.5 1.5 1.5 1.5 0zM944.5 585l3-2-1-3.5-4 0-0.5 3.5zM967.5 585l1.5-0.5 2-4 0-0.5-3.5-2-1.5 0-1 5 0.5 1zM948 577l4 1 2-3.5-2-3-2 0-3 3zM937 558.5l-4.5-1.5-1.5 2.5 1.5 2 5-1zM920 569.5l3 0.5 1-5-1-1-3.5 0.5-1 1.5zM928.5 566l2-0.5 2-4-1.5-2-2.5 0.5-1 5.5zM925 582.5l-5-0.5-1.5 1 2 5.5 3.5-1 2-2.5-0.5-2.5zM933.5 593l-5.5-1-2 2.5 0 1.5 7 0.5zM924 587.5l-3.5 1-0.5 1.5 6 4.5 2-2.5 0-0.5zM962.5 565l-0.5 0-3 1.5-0.5 4 0.5 0.5 3.5-0.5 1-2.5zM966.5 560l-2 0-3.5 2 1 3 0.5 0 3.5-1.5zM962.5 570.5l2 2 3.5-0.5 0.5-3.5-5-0.5zM961 590l1.5 4 3 1 1.5-5-0.5-1-5 0zM937.5 548.5l1.5-4.5-2.5-2.5-5.5 4.5 4 3zM937 564l-2.5 0-1.5 2.5 1 1.5 2.5-0.5zM958 579l3 1 2.5-3-0.5-1-4.5-1.5-0.5 0.5zM947.5 583l3 1.5 0.5-0.5 2-4-1-2-4-1-1.5 2.5zM959.5 595.5l3-1.5-1.5-4-3 1-1 2zM930.5 565.5l2.5 1 1.5-2.5-2-2.5zM933.5 571.5l-1.5 1.5 0.5 2 3 1.5 0-4.5zM942.5 579.5l4 0 1.5-2.5-1-2.5-3.5-1.5-1 1-1 4.5zM967.5 556l-1 4 5.5 2 1.5-0.5-2-3.5-2.5-3zM910 540.5l-3 0 1.5 7.5 3.5-1 0.5-2zM940 550.5l3-1 0-5 0-0.5-4 0-1.5 4.5zM953 593l2.5 1 1.5-1 1-2-3-3-3 3.5zM974.5 576.5l-0.5-0.5-3 4 0 0.5 5 3 2-4zM942.5 529l-1 0-2.5 1.5-1 2 6 3 1.5-2zM966.5 560l-0.5 3.5 2.5 2.5 3.5-4zM931.5 583.5l-1.5-2-4.5 1 0.5 2.5 2 1 3-1.5zM932.5 575l-2.5 2.5 0.5 1 3.5 0.5 2-2.5-0.5 0zM931 546l0-0.5-2 1.5-0.5 5.5 4 2 1.5-1.5 1-4zM961.5 582l-0.5-2-3-1-2 1.5 1.5 4.5 2 0zM975.5 638l0 3.5 2.5 1 6-5.5-4.5-3zM892.5 596.5l4.5 0.5 3-2-0.5-4-8.5 0zM983.5 679l7 6 1-2 2.5-6-7.5-3.5-2.5 1.5zM967 659.5l0-3-2.5-2.5-1.5-0.5-5.5 4 2 3.5 2.5 2zM970 618.5l3.5 3 6-2.5-3.5-8zM982.5 660l-5.5-1-4 5 5.5 6 6-7zM879.5 595.5l4 1 2-1.5 1.5-4-8.5 0zM956.5 628l2.5-6.5-0.5-1.5-3-1.5-8 4.5 2.5 2.5 1 3.5zM978 642.5l2 3.5 7.5-4.5-1-3 0.5-1.5-3 0zM973 664l-0.5 0-6 6 0 1.5 5.5 4.5 6.5-5 0-1zM987 556l0-2-2.5-3-3.5 0.5-2.5 2.5 1.5 3zM965 544.5l1-3-2-4.5-4 1.5-2.5 4 2.5 3 1 1zM994.5 536l-4.5-0.5-3.5 3.5 2 5.5 0.5 0 2-0.5 5-5.5zM1009.5 545l-4 0-2 5 2.5 6.5 0 0.5 2-1.5 2.5-2.5 2.5-4zM996 555l10 1.5-2.5-6.5-6.5-0.5-2 3.5zM980 561.5l7.5-0.5 0.5-1.5-1-3.5-7 1-0.5 4zM1005.5 545l4 0 4.5-7-3.5-3-5.5 3.5 0 5.5zM954 532.5l-5 1.5 8.5 8.5 2.5-4zM1058.5 509.5l6.5 0-3-6-2.5 0.5-1.5 4.5zM971.5 515l1.5 0 3-2.5-2-5-3-0.5-1.5 1-0.5 2.5 1.5 4zM928.5 523.5l2-2.5-1-2-2.5 3.5zM1009.5 509l-4.5-5-3.5 2 0.5 3 7 0zM1056.5 525.5l0.5-5.5-5.5-3-4 5zM1034.5 521.5l-6 0.5-0.5 0.5 1.5 6.5 4.5-2zM969 510.5l0.5-2.5-5-2-1 4.5 0.5 1zM1015.5 505l-3.5 1-2 3 3 4 2.5 0.5 3-3-0.5-3.5zM1009 528l-1.5-5-1.5 0-3.5 5.5 3 2.5zM1023.5 538l-6-1.5-2 3 5 4.5 3 0zM1047 531l5-1.5 2 2 3.5-3.5-1-2.5-9-3.5-1 0.5zM992 508l-0.5-9-3-0.5-2.5 6 3.5 4.5zM981 506l1-1-0.5-6.5-2.5 0-2.5 5.5 0.5 0.5zM1023 513.5l2 3.5 2.5 0.5 3.5-2.5 0-0.5-4.5-4.5-3.5 3zM1056 502l3.5 2 2.5-0.5 2.5-4.5-9.5 0zM1065 509.5l-6.5 0-1 3.5 3 4 2 0 3.5-7zM1062.5 517l-2 0-3.5 3-0.5 5.5 1 2.5 5-4.5 4.5-1.5zM970.5 503l2.5-2.5 0-2-4.5 0-2 3zM1018.5 510.5l-3 3 2 5 1 0 4.5-5 0-0.5zM1033 505.5l-6 2-0.5 2.5 4.5 4.5 5-5zM973 515l3.5 6.5 4.5-4.5-2-4.5-3 0zM1007.5 516l-4.5 1-0.5 1 0.5 3 3 2 1.5 0 0.5-0.5 2-4-0.5-1.5zM1000 523l3-2-0.5-3-6.5-1 0.5 5.5zM989 525.5l-4.5-3-3 2.5 2 0.5 0 2.5 5 0zM1036 509.5l-5 5 0 0.5 4.5 5 4-7.5-1-2.5zM1023 520l1 3 4-0.5 0.5-0.5-1-4.5-2.5-0.5zM1006 523l-3-2-3 2 1 5 1 0 0.5 0.5zM1021 526l3-3-1-3-4.5-1.5-1 0-0.5 1zM991.5 517l-4-3.5-4 4 1.5 3 5-0.5zM964.5 516l-1-0.5-1 0-2.5 6 7.5 0.5zM1026.5 534.5l0.5 0 1.5-2 0-2.5-7.5-3.5-1 1 0 4zM935 521l0-4.5-4.5 1.5-1 1 1 2 1.5 1zM1027.5 517.5l1 4.5 6-0.5 1-1.5-4.5-5zM1051.5 517l5.5 3 3.5-3-3-4-5 0.5-1.5 1zM1022 485l4.5 3 1 0 1-2-1.5-3.5-2.5-1-1 0.5-1 0.5zM1022.5 482.5l1-0.5-1.5-6-2-0.5-3 4.5zM1007 478.5l-1-0.5-6 0.5-0.5 3 1.5 3 3 0.5 3-5zM988.5 493.5l-2.5 5 6 0.5-0.5-4-1.5-1.5zM1041 488.5l-3.5 1.5 0 4 2.5 1.5 4-2.5 0.5-1zM1028.5 477.5l0.5 0.5 4 0 1-1 0-2-2.5-1-3 2.5zM996.5 495.5l0-1.5-5 1 0.5 4 0.5 0zM1030.5 471l-3.5-3-3 2.5 1 2.5 1.5 0.5zM1023.5 482l1-0.5 2-3.5-3.5-2.5-1 0.5zM1040 495.5l0 3.5 6 0-2-6zM1005 487l-1-2-3-0.5-2.5 3 0.5 2 5 1zM1018.5 458l4.5 1 1.5-0.5 0-1.5-2.5-3zM1009.5 491.5l-5-0.5-0.5 2 2 3 4-1.5zM1022.5 469.5l-4 3.5 1.5 2.5 2 0.5 1-0.5 2-2.5-1-2.5zM992.5 488.5l2-2.5-0.5-2.5-1.5-1.5-1 1.5-4.5 1 1 3zM1001 499l5 0 0-3-2-3-3 2zM1051 483l-1 1 1 2.5 2 0.5 0.5-0.5 0.5-2.5zM953.5 495l-5-2.5-1.5 1 0.5 5 6 0zM982.5 491.5l-2-6-4.5 1 0.5 6.5 5-0.5zM998.5 487.5l2.5-3-1.5-3-5.5 2 0.5 2.5zM1057.5 478.5l0-1.5 0-1.5-0.5 0-3.5-2-1.5 3 2 3zM1020 495.5l-5-1.5 0 5 5.5 0zM1050 484l-2.5 0-1.5 1 1.5 3.5 1.5 0 2-2zM1013 472.5l-5-4-3.5 1 1.5 8.5 1 0.5 5-1.5zM1028.5 477.5l-2 0.5-2 3.5 2.5 1 2.5-2-0.5-2.5zM1010.5 494.5l-0.5 0-4 1.5 0 3 5 0zM963.5 483l-4.5 3 1.5 5 0.5 0.5 3.5-3.5zM1024.5 464.5l0-0.5-1.5-1.5-3 0-2 3 3.5 2zM1053.5 489.5l4 0-0.5-2.5-3.5-0.5-0.5 0.5zM1025.5 447l-9 0 0.5 3.5 6-1.5 2.5 0zM1050.5 415.5l5.5-1.5 0-4.5-7.5 0zM1016.5 429.5l5 3.5 0.5 0 1-0.5 0.5-7.5-3.5-2-4 5.5zM1010 426l-2.5 4.5 5 4 4-5-0.5-1-4.5-2.5zM1048 419l-5-4-4.5 2 0 1 4 5.5 2 0.5zM1036.5 428l-1.5-1.5-6 0-1.5 6 2.5 1.5zM988 415l0 11 0.5 0 4-1 1-1 0.5-7zM1043 415l5 4 1-0.5 1.5-3-2-6-4 0zM1056 414l1 1 6.5-1 0.5-0.5 0-4-8 0zM1064 420l7.5 1.5 1-6.5-8.5-1.5-0.5 0.5zM1029.5 416.5l6.5-2.5 0-4.5-7.5 0zM1057 419.5l-3 2.5 0 2.5 7 3.5 0.5 0 0.5-6.5zM1057 415l0 4.5 5 2 2-1.5-0.5-6zM1028.5 417.5l1-1-1-7-5 0-2 6 1 1zM1051 441l-6.5-3.5-6 8 0 1.5 13 0zM1031.5 437.5l-1.5-3.5-2.5-1.5-4.5 0-1 0.5 1 6 4 2.5zM1055 406l-4.5-4-6.5 3.5-0.5 4 11.5 0zM1101 368.5l5 2-0.5-2.5 1-8.5-3.5 0zM1090.5 394.5l7.5 2 2.5-1.5 0-1-3.5-4.5-6.5 3zM1061.5 399l-6.5 7 0 3.5 12 0-1.5-9zM1084.5 367.5l5.5-2 0-5.5-6.5 0-1.5 0zM1101.5 402.5l-5 3 7.5 4.5 0-1.5 2-4.5zM1077 386l-2.5-9-1 0-7.5 6.5 0.5 4.5 2 1zM1088.5 389.5l-8-0.5-0.5 3.5 5 6.5 2 0.5 1.5-1 2-4 0-2zM1061 379l7.5-5-2-5.5-4 3-5 5 0.5 2zM1043.5 392.5l1 1.5 7.5-1 0.5-7.5-6.5 2.5-2.5 0zM1100 417l4 0 0-7-7.5-4.5-3 4zM1044.5 394l-1-1.5-7.5 2-1 5.5 0 0.5 6 0.5 3.5-4.5zM1108.5 408.5l-4.5 0 0 8.5 4 0.5 2.5-2.5zM1127 414.5l-4 2.5-1.5 4.5 7.5-0.5 2.5-0.5 0.5-1.5 0-2.5zM1124.5 406l-3-2-4.5 0.5-1 4 8.5 0.5zM1108 386l8-1.5 2-3-3-5.5-8 3 0.5 4 0 2.5zM1132.5 370.5l3-2.5 1.5-8.5-7 0-2 6.5 0 1zM1128 367l-6 5 4.5 6 1.5-3.5 4.5-4zM1115 376l2-5-11-4.5-0.5 1.5 1.5 11zM1107.5 385.5l0.5 11.5 2.5 0 3-5.5-5.5-5.5zM1128 366l-9-3-2 8 5 1 6-5zM1145.5 380.5l-0.5-10-6 0-2 9.5 0.5 1.5 2 1zM1128 383l-4 0-1 1.5-1 7.5 10-2.5 0.5-4zM1137 380l-6.5-3.5-2.5 6.5 4.5 2.5 5-4zM1122 392l-0.5 5.5 14.5 0 0-3.5-4-4.5zM1130.5 376.5l6.5 3.5 2-9.5-4-2-6 5zM1173.5 371l-5.5 3.5 2 4 7-3 1-1.5zM1070 482l5-6.5-10.5 0.5-1 0 0.5 3zM1064 479l0.5 3.5-1 7.5 6-7.5 0.5-0.5z"/>
<path fill="#ed7551" d="M276.5 308l-8-0.5-12.5-3.5 1.5 8 2.5 4.5zM275 317.5l2.5-4 0.5-5.5-0.5 0.5-1-0.5-16.5 8.5 2 3.5zM275 328l0-10.5-13 2.5 0.5 1 3.5 6.5 0.5 2zM286 324l-8.5-10.5-2.5 4 0 10.5 5.5 2.5zM286 324l-5.5 6.5 1 3.5 7 2.5 8-9-2-5.5-8 4 2-2.5zM292.5 341.5l2 0.5 8-8.5-6-6-8 9zM292.5 341.5l-4-5-7-2.5-2.5 5.5 3.5 1 4 3.5 0.5 1.5zM313 332l19-2 0.5-4.5-0.5-4.5-16.5-2-2.5 4.5zM332 321l3-8-12.5-14.5-2.5 2.5-3.5 5.5-2 6.5 1 6zM352 321.5l-2-10-2-1.5-13 3-3 8 0.5 4.5 18.5 0zM368 312.5l6.5-4-3.5-14.5-7 0-2 15.5zM381.5 332.5l2-0.5 0-7.5-14.5-3-1.5 2-1 7 3.5 2zM348 333.5l3-5.5 0-2.5-18.5 0-0.5 4.5 1 3.5zM361.5 334l-0.5 0-11 8.5 0 1 1 0 13 0zM286 349l1.5-3-1-2-4-3.5-1.5-0.5-3.5 5 0 2.5zM271.5 359.5l12 3.5 2.5-5.5-9.5-4zM283.5 363l-12-3.5-2 1 4.5 7.5 9.5-1zM274 368l-5.5 12 4.5 2.5 2-0.5 10-11-1.5-4zM305 371.5l-1.5-4.5-6-1.5-11.5 5.5 12 14 5.5-3zM296 387l-21-5-2 0.5 1.5 11 7 4 14-8zM270 398l0 11.5 13.5 0-2-12-7-4zM317.5 388l-14-6-5.5 3-2 2-0.5 2.5 5.5 20 16.5 0zM337.5 385.5l4.5-7-1.5-4.5-16-8-2.5 3.5 0 16zM348 358.5l11.5 1.5 3-16.5-11.5 0-4.5 0.5zM297.5 352.5l9 9 0-0.5 4-12.5-4-0.5-9 2.5zM266.5 421.5l-0.5 3.5-1 5-3.5 5 5 5.5 1 1 7-2.5 3.5-18.5zM300.5 444.5l4-5-13.5-7.5-6.5 10zM284.5 442l-10-3-7 2.5 3.5 5 0.5 7.5 1.5 6 8.5-4.5 4-8zM281.5 455.5l6.5 4.5 5-2.5-1-5.5-6.5-4.5zM321 478.5l2 3.5 5 1.5 3.5-4 2-7.5-3.5-3.5-2 0.5zM331.5 479.5l13 2.5-2.5-10.5-8.5 0.5zM395.5 312.5l4.5-4.5 0-4.5-16.5-2 0 9zM434.5 389l4.5-4-2.5-9-12.5 1.5 1 9 4.5 3zM464 386.5l4-4.5 1-6-4-7-8.5 13zM479 389.5l3.5 1.5 0-17-6 3-0.5 8zM458 398.5l6 6.5 5-5-1.5-7.5-3-2-6.5 5zM433.5 402.5l-7.5-6-4.5 1-11 11 0 1 22.5 0zM436.5 335.5l4-6-2-6.5-12.5 0-2 7.5 4 2-0.5 2zM438.5 343.5l-2-8-9-1-2 15.5 8.5 0.5 1 1.5zM453.5 320l1.5 13 2.5 0.5 10-3-1.5-13zM577 360l-12 0-2 5.5 4 18.5 11-0.5 4.5-10zM544.5 403l17.5 0 1.5-2-0.5-13-16-3.5-9.5 11.5 0 6zM576.5 426l22 0 0-5.5-11.5-7-8 3zM456.5 428l0.5 0 2.5-11.5-1.5-7-25 0 0 17zM479.5 424l-1.5 7 8 5 9.5-9 0-1-13 0 0-3.5zM478 431l-3.5 2-0.5 2 7 12 0.5 0 4.5-3 0-8zM433 474.5l0 4 22.5 9.5 2.5-6.5-3-7zM543 449.5l-0.5-4.5-2-2-19 7.5 10.5 7.5 7-1zM554 455l5.5-4.5 0.5-3.5-5.5-6.5-12 4.5 0.5 4.5zM576.5 448l-2.5 4 3 5.5 3.5 0 3-7zM591 454l0 3.5 8 6 0.5-0.5 5.5-11.5-1.5-3zM539 457l-7 1-5 8.5 5 5.5 9-3.5 0-7.5zM527 466.5l-9.5 2 11 11 1.5 1 1.5-2 0.5-6.5zM529 484.5l0 7.5 12 0 0.5-5.5-11.5-4.5zM491.5 573l-1.5 0-8 12 0.5 0.5 15 0zM560.5 529l-16.5-3.5-1.5 10 17 1.5zM646.5 334l4 1.5 8-2.5 0.5-1-7.5-9-1 0.5zM621.5 372.5l-5-4-7 2-3.5 5 6 7.5 6-1.5zM717 388l6 0 1.5-3.5 0-5-6 0.5-3 7.5zM726 423.5l-1 0.5 0 6.5 3.5 2 6.5-4-1-6zM725 424l1-0.5-1-7.5-4-1.5-2.5 1.5 0.5 7zM725 416l1 7.5 8-1-4-8.5 0-0.5zM705.5 480.5l-4 9 0.5 2.5 10.5 0 0-12 0-0.5-3.5-0.5zM725.5 451l-2.5-3.5-7.5 2.5-0.5 1 7 4.5zM736.5 453l-3.5 6 5 3 4-6-1-2zM739.5 508l5 6.5 3-0.5 1.5-2-1-6-7-1.5-1.5 2zM725.5 508l0 7.5 7.5-1 0-0.5-2.5-7.5-3.5-0.5zM714 498.5l3 1 7.5-5 0-2.5-11 0zM733 514l6.5-6 0-1.5-7-2-2 2zM705.5 518.5l-2-0.5-5.5 4 4 4.5 7-2 0-0.5zM709 536.5l0 1 5 4.5 3-5 0-1.5zM734 494l5.5 2 2.5-2 0-2-8.5 0zM674.5 492l-11 0-0.5 8 2.5 0 0 3 8.5-6.5zM625 493l0-1-9 0 0 8 7.5 0zM747 498l3.5-6-8.5 0 0 2 4.5 4zM709 552l-5 3 1.5 5.5 4.5 2.5 4.5-3 0.5-4.5zM731 568l-4.5 1-2.5 6 1 1.5 6.5 1.5 3-4-0.5-3.5zM725 576.5l-3.5 8.5 4 3 8-4.5-2-5.5zM739.5 611l-9 5 0 1 9 3.5 3-6.5zM747.5 613.5l8-4 0.5-3.5-3.5-2-6 2 0.5 7zM714 580l7.5 5 3.5-8.5-1-1.5-8-2.5-1.5 2.5zM742 576l-7.5-2-3 4 2 5.5 2.5 1.5 6.5-6.5zM763 589l-0.5 6.5 7.5 2 2-8.5-1-3zM749 564l-1-3-3.5-1.5-5.5 3.5 0.5 3.5 4.5 3zM731.5 558.5l-1.5-3-6.5 1 0.5 5 6.5 0zM755.5 609.5l-8 4 3 6 2-1.5 5.5-3.5 1 0zM730 594l-4-2-5 5.5 4.5 5.5 5-1 0.5-0.5zM659 616l-5-5.5-7.5 4 4 3.5 5 7.5zM724 561.5l-1.5 2.5 4 5 4.5-1 0.5-4-1-2.5zM709 609l6-2 0-9-9.5 1-1.5 3 0.5 2.5zM742 576l0.5 2.5 4 3.5 7-3 0-4.5-9-2.5zM641 517l-2 0-5 5 2.5 5 3 1.5 5-1.5 0.5-2zM716 572.5l0-2-6-5-4 4.5 0.5 3.5 8 1.5zM653.5 603.5l-6-2.5-7 9.5 0 0.5 2 0 4 3.5 7.5-4 1-4zM693.5 646.5l2-6.5-8.5-4-1.5 2 3 10zM710.5 589l3.5 2.5 7.5-6.5-7.5-5-3.5 2zM746.5 606l-3.5-2.5-2 0.5-2.5 3.5 1 3.5 3 3 4.5-1zM664.5 626l4-7-1-4.5-0.5-0.5-8 2-3.5 9.5 1 2zM725.5 603l-2.5 6 6.5 4.5 3.5-7-2.5-4.5zM763 589l8-3-1-3.5-4-5-7.5 6.5zM710 563l0 2.5 6 5 4-6-5.5-4.5zM704 602l1.5-3-2.5-5-7.5 1-1 2 0.5 4zM700 632l1 1.5 9.5 0 2.5-5.5-3-4.5-5.5 0.5zM637 571l-3.5-0.5-3.5 4 1 3 4 1.5 0.5 0 2.5-6.5zM699 666l-2 6.5 10 3 5.5-1.5-2.5-10.5zM769.5 362.5l6-5-7-7-2.5 1-2 4.5zM741.5 330.5l1.5 6.5 6.5-1 2-5.5-7.5-3.5zM776.5 375.5l1.5 9 6 0 1.5-7.5-7-3.5zM766 337.5l1-6.5-6-2-4 2 1.5 5.5zM779 369.5l-8.5-3.5-2 8.5 0.5 1 1 0.5 6.5-0.5 2-2zM777 356l-1.5 1.5 6 9 5-1.5-2-1 1-8zM744 327l7.5 3.5 2.5-1-0.5-6-2.5-2-7 3zM750.5 315l9.5 0 1.5-3-3-5-7.5 0-1 7zM803.5 405.5l-1 0.5-1 5.5 1.5 1.5 6-2-2.5-5zM793 423.5l4-1 1-4-2-2-4 2 0.5 4.5zM734.5 406.5l-5 6.5 0.5 1 0.5 1.5 8.5-3.5-1.5-5.5zM804 419l-6-0.5-1 4 2 2 3-0.5zM739.5 392.5l-7.5 3 0.5 2.5 7 4 2-1.5zM792.5 423l-0.5-4.5-3.5-1.5-3 2.5 0.5 3 1 1zM753.5 422.5l4.5 1.5 5-2.5-3.5-8-4 1.5-2.5 6zM801 479.5l2.5-0.5 1.5-6-1.5-2-5.5 3zM763 468l0.5-4-9-3 0 8zM792 464.5l2.5 1.5 4-1.5 1-6-3-3-0.5 0-4.5 3zM770 485.5l-5.5 4.5 3.5 5 4.5-2.5-1-6zM798 474l5.5-3 0.5-3.5-5.5-3-4 1.5 0 7.5zM784 457l-1.5 3.5 4.5 5.5 5-1.5-0.5-6-5-2.5zM824.5 484.5l-1.5 2.5 1.5 5.5 1 0.5 4-0.5 2.5-3 0-2-5-3.5zM823 493.5l-7-1-0.5 0 1.5 7.5 2.5 0zM813 462.5l5 0 2.5-3.5-1 0-4-5-3.5 2-1 1.5zM784 486l-4.5 5 4 3 4-1.5 0-3.5zM779.5 491l-3.5-5.5-4.5 1 1 6 3 1.5zM774.5 463.5l1 0.5 7-3.5 1.5-3.5-5.5-4.5-2 0-2.5 2zM824.5 476l0-0.5-3-0.5-3.5 5 6.5 4.5zM802.5 487l-1 0-5.5 3.5 0 0.5 0.5 2 4.5 2.5 5.5-4zM780.5 500l-5 0-1 8.5 5.5 2 2.5-3zM794 536.5l3-3.5-2-7.5 0-0.5-7 3.5 1.5 5.5 2.5 2.5zM784 540l-1-3.5-1-0.5-6 2.5 0 2.5 5 2zM797.5 503.5l1.5 0.5 3.5-4-7.5 0zM818 504l4 0 2-4-7.5 0zM799 504l2.5 1.5 2.5-3-1-2.5-0.5 0zM818.5 615.5l3.5-3 0-1-6-4.5-3 1-0.5 5.5zM810.5 597l2 2.5 2.5 0 1.5-5-1.5-3.5-1 0zM793 601.5l5.5 5 2.5-6-3-3zM773 564l-0.5-0.5-6.5 4 5.5 5 3-3zM812 607l1 1 3-1 3-5-4-2.5-2.5 0-2 4zM801 600.5l3.5-0.5 1-2.5-5-4-2.5 0.5 0 3.5zM811 614.5l-7-3.5-2.5 4.5 8 3.5zM772.5 563.5l0.5 0.5 8-0.5 1-1 0-4.5-11 0zM824 595l3 2.5 2-0.5 4-6-9 0zM798.5 606.5l5 2 2.5-6-1.5-2.5-3.5 0.5zM771 594l-1 3.5 0 6 6 0.5 3.5-6.5zM822 596l-5.5-1.5-1.5 5 4 2.5 1 0zM835.5 618l-4-3.5-4.5 2.5-0.5 5 1 0 6.5 1.5zM780 610l-4-6-6-0.5 0 2-2.5 6.5 9-1 3.5 1zM789.5 594.5l2.5 7 1 0 5-4 0-3.5-1-0.5-7 1zM857 398.5l-8-4.5-4 4-0.5 3 13.5 0zM811.5 329.5l-4.5 1-2.5 7 8.5 4zM825 357.5l4.5 4.5 3.5 0.5 0.5-0.5 0.5-6-5-2zM814 379l-4 2 1 3.5 0.5 3.5 8 0.5 0-6zM852.5 371.5l1.5 0.5 4-2.5 0-5-2-2-3.5 0-2.5 3zM851 382l-2.5 7 0.5 1 9.5 0 1.5-1.5-7.5-7zM796.5 352.5l-1-1-4 0.5-3.5 3.5 5.5 5.5 3.5-1zM787.5 343.5l-3.5 1.5 1.5 10 0 1 2.5-0.5 3.5-3.5zM843 366.5l-3-4.5-6.5 0-0.5 0.5 0 4.5 1 2 7.5 1.5zM841.5 370.5l-7.5-1.5-2.5 5 3 5.5 1 0.5zM840 387.5l8.5 1.5 2.5-7-5-2.5-6.5 4zM865 374.5l-1.5-3.5-5.5-1.5-4 2.5 1.5 5.5 5.5 1zM811.5 440.5l2-6-3-2.5-3 4-1 5zM846.5 405.5l3 4 3 0.5 0-9-4 0zM836.5 403.5l1.5 1.5 6 2 2.5-1.5 2-4.5-12 0zM832.5 464l-1-5.5-3.5-0.5-2.5 2.5 2 1 0 5zM824 451l-2.5-2.5-7 0-2 2 5.5 7zM854.5 411l-0.5-0.5-3.5 6.5 0.5 0.5 3.5 1 2-1 1-4.5zM859 405l4 3.5 5-1.5-0.5-1 0-5-9.5 0zM932 398.5l-2.5-2-5.5 2-0.5 1.5 2 3.5 6.5 0.5zM902 386l-0.5 6.5 3 2 4.5-1 1.5-5.5-8-2.5zM924 348.5l-6-1.5-2 1 1 3.5 5 2zM918.5 392l1-0.5 1.5-4.5-2-3-3-1-3.5 2-1 2zM938 397l4-4.5-1.5-4-4.5-0.5-1.5 2.5 3 6zM916 348l-2 1-1 4-4 2-0.5 0.5 2 1 4.5 0 2-5zM919 384l3.5-4.5-3.5-2.5-3 1.5 0 4.5zM923.5 400l0.5-1.5-2.5-6-2-1-1 0.5-3.5 4 3.5 5zM917 351.5l-2 5 1.5 1 6.5-1.5-1-2.5zM935.5 387l0-5.5-4.5 0.5 0.5-2-4.5 4 0 1 0.5 1.5zM937.5 396.5l-3-6-5 2.5 0 3.5 2.5 2zM909 393.5l-4.5 1-0.5 5.5 1.5 1.5 5-2.5 1-2.5zM885.5 425.5l-3 4 0.5 3 6 0 1.5-3.5-0.5-1.5zM874 460l1 2 2 0.5 1.5-4.5-3-1.5zM877 462.5l1 1 4-2 0.5-1.5-2.5-2.5-1.5 0.5zM907 418.5l3 1 2-3.5-0.5-2.5-5.5 0zM887 418.5l0.5 1.5 3 0.5 2.5-6.5 0-0.5-4.5 0zM891.5 457.5l-5.5 0-1 1.5 3 4.5 2-0.5 1.5-5zM891.5 454l4.5-2.5 0-3-4.5-2-4.5 3 0 1zM875.5 438l3.5 3 5-1-1-6.5-5 0.5zM898.5 446.5l-2.5 2 0 3 2.5 2.5 2-0.5 3-3-0.5-2-3.5-2zM890 469l-3.5-0.5-1.5 2 3 4 4-1.5zM887 418.5l-4-1-3 3.5 0.5 1.5 5 2 2-4.5zM896 441l-1-0.5-3.5 2 0 4 4.5 2 2.5-2zM880 469.5l-1 1 0 6 3.5-0.5 1-5zM907.5 440l3-2.5-1-3-1.5-0.5-3 2 0.5 4zM875 456l2-4.5-5-1.5 0 3-0.5 2zM903 448.5l3-3-2-4.5-1 0-3.5 5.5zM908.5 428l3 0.5 2.5-3.5-3.5-3-3 3.5zM896 420l0.5-2-3.5-4-2.5 6.5 1 0.5zM916.5 425l0-5-6 0.5 0 1.5 3.5 3zM880 457.5l2.5 2.5 2.5-1 1-1.5-1-4-4 0zM880 467.5l0 2 3.5 1.5 1.5-0.5 1.5-2-1-3-2-0.5zM903 441l-3.5-2-3.5 2 2.5 5.5 1 0zM900.5 417l1-3.5-8.5 0 0 0.5 3.5 4zM877.5 419.5l-5 3 5.5 4 2.5-4-0.5-1.5zM956.5 448.5l-0.5-3.5-2-1.5-3.5 1.5-1.5 3.5 5 2.5zM932 460l-5-4-3.5 3 2.5 3 5 1.5zM949 448.5l-6-1.5-1.5 3 4.5 4.5 1 0zM950.5 445l3.5-1.5 0-4-5-1.5-2.5 3zM920.5 440l4-6-2.5-3.5-4.5-1-1 0 0 10.5zM972 422l1.5 0.5 2.5-4-2.5-3.5-4 2zM942 438l-4 1.5 0 3.5 4.5 3 3-5zM923.5 449.5l-7 2 0 5.5 5.5 0 1.5 2 3.5-3 0.5-3.5zM954 451.5l0-0.5-5-2.5-2 6 3 1.5 1.5-0.5zM950.5 432l4 2 3.5-2.5 0-2-6-1.5-1.5 1.5zM971.5 430.5l4.5-2 0-3.5-2.5-2.5-1.5-0.5-4 3-0.5 1zM946.5 441l2.5-3-0.5-3.5-5.5-1-1 4.5 3.5 3zM951.5 455.5l-1.5 0.5 0 6.5 5-1.5 0.5-2.5zM955 461l-5 1.5-2 1.5 5.5 4.5 5-3 0.5-1zM914 476l-4-4.5-2.5 1 1 6 4.5 0zM904 479l-1-3.5-3.5-1.5-1.5 3 0 1.5 2 1.5 3.5-0.5zM878.5 492.5l-4.5 2.5-0.5 2.5 7.5 0zM925.5 498l3.5 0.5 0-6-2.5-1-2.5 3zM916.5 490.5l-3.5-2.5-1.5 0-1 3.5 0.5 1 4 0.5 2-1.5zM903.5 479.5l-3.5 0.5-0.5 3 1 1 3.5 0zM958.5 500l-4 4 0.5 4 7.5-1.5zM842 516.5l0.5-1.5-2.5-4-5 4.5 1.5 2zM892.5 513.5l2-4-0.5-1.5-5.5-2.5-2.5 5.5 1 1 4.5 2zM923 511l-2 2.5 3 3.5 3.5-1.5 0-2zM885 503l3.5 2 3.5-4.5 0-3-7 0zM892 500.5l5 3.5 2-2.5 0-4-7 0zM922 503l0.5 0.5 2.5 0.5 2-2-1-4-2.5 0zM873.5 519l-3-1-2.5 2.5 1 4.5 3.5 0zM904.5 507l-0.5 0.5 1.5 5.5 3 1 2.5-6-0.5-0.5zM926 508l-3 1.5 0 1.5 4.5 2.5 1.5-2zM870.5 518l-2-4-4.5 2 0 3.5 4 1zM947.5 505.5l-4.5 3 1 4.5 7-3.5zM958.5 500l0-1.5-8.5 0 0 2.5 4.5 3zM933 511.5l4-1 1-2.5-3-2.5-3.5 1 0 4zM937 510.5l-4 1 0 5.5 7-2.5zM918.5 498l-1.5 0-0.5 6 5-1zM873.5 511.5l3.5 4.5 2-0.5 2-6-1-1-6 1zM933 511.5l-1.5-1-2.5 1-1.5 2 0 2 3 2.5 2.5-1zM915.5 521.5l2-3 0-1.5-3-3-4.5 1.5 0 2.5zM935.5 502.5l-0.5 3 3 2.5 2.5-1 0.5-5zM842 521l-3.5 0.5-1 3.5 5.5 0zM876 503l-3 4.5 1 2 6-1 0.5-3.5-1.5-1.5zM894 508l3-4-5-3.5-3.5 4.5 0 0.5zM840.5 594l3 3.5 5.5-3.5 0-4-1-1-5 0.5-2.5 4zM840.5 594l-6 5 1.5 2.5 7.5-4zM851 596l-2-2-5.5 3.5 1.5 4 1-0.5 4 0zM840 585l3 4.5 5-0.5 0.5-6-1.5-1.5-6 0zM843.5 597.5l-7.5 4 1.5 3 7.5-3zM815 581.5l3-5.5-5.5-4-3 5.5zM827.5 565.5l-1.5 4.5 3 3 1.5 0 3-4 0-2.5-0.5-1zM830.5 533l-3-1-5.5 7 0.5 0.5 7 0zM847.5 558l1.5-0.5 2-4 0-0.5-7.5-4.5-1.5 4 2 5 0.5 0.5zM850 536l0.5 3 4 1.5 2-4-0.5-1.5-4.5-0.5zM881.5 533l1 0 5.5-8-9 0zM889.5 534l-1.5 1 0.5 5 6 0 1.5-1.5-2.5-5zM865 554l1-5.5-6-0.5-1 6zM889.5 546.5l-0.5 7 2 1 6.5-5.5-0.5-2-1.5-1zM905 531.5l-1-6.5-3 0-1.5 6zM888 535l-5.5-2-1 0-2.5 2 0 4 6 4.5 1.5-0.5 2-3zM889 571.5l4.5-2 1-4.5-2.5-3.5-7.5 2.5zM894.5 565l-1 4.5 6 3.5 2-7.5-2-1.5zM896 538.5l-1.5 1.5 1 6 1.5 1 4.5-3.5-0.5-2.5-2.5-3zM907.5 559.5l-2.5 6 3 4 1 0 5-1.5-3-7.5-0.5-2zM880 549.5l-2.5 6 5 5 4.5-7-6.5-4zM901 541l5.5-2.5-0.5-2.5-6-0.5-1.5 2.5zM909 569.5l0.5 9 3 1 2-10-0.5-1.5zM864.5 542.5l4-4.5 0-0.5-7-2-1 6.5zM906 536l-1-4.5-5.5-0.5 0.5 4.5zM908 569.5l-3-4-3.5 0-2 7.5 0.5 1 1 0.5zM932 537.5l4 0.5 2-5.5-5-2-1.5 0.5-2 1.5zM915 529l0 4.5 1 0.5 4.5-2 0.5-2.5-1-1zM913.5 558l-0.5-5-3.5-0.5 1 6.5zM963 576l0.5 1 2.5 1 1.5 0 1.5-4-1-2-3.5 0.5zM943.5 589.5l1-0.5 0-4-2.5-2-2.5 1.5 0 4.5 0.5 0zM973.5 570.5l-1 4 1.5 1.5 0.5 0.5 3-2.5-0.5-3.5zM958.5 570.5l0.5-4-2.5-1.5-2.5 1.5 0 3zM910 540.5l1.5-1.5 0.5-4.5-3.5-2-3 0 1.5 8zM947.5 566l4-1.5 0-3-4.5-2-1.5 2zM969 584.5l-1.5 0.5-1 4 0.5 1 6 1 0.5-2 0.5-1zM945.5 533.5l-1.5 2 0 3 6 2 3-2.5-4.5-5 0-0.5zM943 544l0.5-5.5-7 0 0 3 2.5 2.5zM923 544.5l-5.5-2-0.5 1.5 1 4.5 4 0.5 1.5-3zM928 573l-3.5-0.5-2 3 3.5 2.5 2.5-0.5zM936 538l0.5 0.5 7 0 0.5 0 0-3-6-3zM978 579.5l0.5-0.5 3-4-4-1-3 2.5zM977.5 574l4 1 1-1-4-4.5-0.5-0.5-1 1.5zM961.5 589l5 0 1-4-2-1-4 3.5zM965.5 595l7 1 0.5-5-6-1zM954.5 547.5l2.5 3.5 5.5-1 1-1-3.5-3.5-2-2.5zM959.5 595.5l-2.5-2.5-1.5 1 0.5 3.5 3 0.5zM962.5 550l0 5 5 1 1.5-1-4-4-1.5-2zM923.5 546l-1.5 3 0.5 3 4 1.5 2-1 0.5-5.5zM933 530.5l5 2 1-2-3-5.5-0.5 0zM923.5 570.5l5-2.5 0-2-1-0.5-3.5-0.5-1 5zM959 571l-0.5 3.5 4.5 1.5 1.5-3.5-2-2zM965.5 584l-0.5-1-3.5-1-2 3 2 2.5zM974 588l2-4.5-5-3-2 4zM929.5 606l1-0.5 1 1 6.5-4.5-0.5-5-7-0.5zM878.5 591l-8 0 3.5 6.5 4 0 1.5-2zM938 602l4.5 4 5.5-4.5 0.5-4-11-0.5zM979.5 628.5l-6-3.5-5.5 5 1.5 2.5 1.5 0.5 7.5-2.5zM973.5 621.5l0 3.5 6 3.5 3-2-3-7.5zM890 598.5l-4.5-3.5-2 1.5 1 5 4.5-0.5 0.5 0zM965 610l-0.5 0.5 0 3 5.5 5 6-7.5 0-0.5-0.5-1zM967.5 648l2.5-1 2-4.5-5-4-3.5 1.5-1 4.5zM954.5 651l3 6.5 5.5-4-3.5-4.5zM948 612.5l-5.5-5-4.5 4 5.5 8zM874 597.5l-1.5 5 6.5-0.5-1-4.5zM959.5 636.5l4 3.5 3.5-1.5 2.5-6-1.5-2.5-1.5-0.5-6 2zM938 602l-6.5 4.5 5.5 3.5 1 1.5 4.5-4 0-1.5zM917.5 605l-4.5 0.5-1.5 8 2.5 0.5 8-5.5zM955.5 643.5l-4 1.5 2 3.5 1 2.5 5-2 0.5-3zM997 539l2 4.5 6 0.5 0-5.5-3-1.5zM979 545l7 1 2.5-1.5-2-5.5-2.5-1-1.5 0.5zM967.5 527.5l-6 2 2.5 7 5-2 0.5-5.5zM989 544.5l2 7.5 4 1 2-3.5-0.5-2.5-5.5-3zM969.5 548.5l-4.5-4-4 2 4 4.5 0.5 0.5zM967.5 527.5l0.5-5.5-9.5-0.5-1 0.5 1.5 6 2.5 1.5zM972.5 540l-1 1.5 0.5 5.5 2.5 0.5 4.5-2 0-0.5-4-5zM975 540l4 5 3.5-6.5-4.5-1.5zM949 521.5l-7.5-6.5-2 10 5.5 0 4-1zM966.5 501.5l-2.5 3 0.5 1.5 5 2 1.5-1-0.5-4zM949 521.5l0 2.5 9-2.5-2-3.5-4-1zM1013 531.5l-3 3 5.5 5 2-3 0-3zM990 520l-5 0.5-0.5 2 4.5 3 2-2.5zM1042.5 505.5l-1.5-6.5-7 0-1 6.5 3 4 2.5 0.5zM1005 504l4.5 5 0.5 0 2-3-5-7zM1013 531.5l0-3-4-0.5-3.5 3 4.5 3.5zM1001.5 511.5l-5.5 1.5-0.5 3.5 0.5 0.5 6.5 1 0.5-1-1-5zM981 517l2.5 0.5 4-4 0-1.5-6-2-2.5 2.5zM962.5 515.5l1 0 0.5-4-0.5-1-6-1.5-0.5 3 1.5 2.5zM958 521.5l0.5 0 1.5 0 2.5-6-4-1-2.5 3.5zM1069 509.5l-2-4.5-2-6-0.5 0-2.5 4.5 3 6 1 0.5zM1027 534.5l-0.5 0-3 3.5 0 6 7 0 1-3zM956 518l2.5-3.5-1.5-2.5-5.5 2 0.5 3zM994 508.5l4.5-3.5-1-6-6 0 0.5 9zM996 513l-2-4.5-2-0.5-2.5 1-2 3 0 1.5 4 3.5 4-0.5zM979 498.5l-6 0 0 2 3.5 3.5zM996.5 522.5l-0.5-5.5-0.5-0.5-4 0.5-1.5 3 1 3 4 1zM979 512.5l2.5-2.5-0.5-4-4-1.5-3 3 2 5zM1017.5 518.5l-2-5-2.5-0.5-3.5 4 0.5 1.5 6 1.5 1-0.5zM1002 512l1 5 4.5-1-0.5-4zM951.5 514l5.5-2 0.5-3-0.5-1.5-3.5 1-5.5 2.5zM1018.5 518.5l4.5 1.5 2-3-2-3.5zM1017.5 536.5l6 1.5 3-3.5-6.5-3-2.5 2zM988.5 498.5l-7 0 0.5 6.5 4-0.5zM1035.5 520l6 2.5 2.5-1-0.5-7-4-2zM976.5 522l3 0.5 0 1.5 2 1 3-2.5 0.5-2-1.5-3-2.5-0.5-4.5 4.5zM935 521l-3 1-0.5 3 7 0zM1024.5 499l-8.5 0-0.5 6 2.5 2 6-2.5zM1011 499l4 0 0-5-4.5 0.5zM1055 483l-1-3.5-3 2 0 1.5 3 1zM1039.5 462.5l-1 2.5 3 3 0 0.5 4-6.5-0.5 0zM1037.5 478.5l0 3.5 0.5 0.5 5-2.5 0.5-0.5-1-3.5-1.5-0.5-0.5 0zM1027 468l0.5-1-3-2.5-3 3 1 2 1.5 1zM996.5 495.5l-4 3.5 5 0zM1057.5 493l0 1 2 2.5 4-1.5-1-1.5-4.5-1.5zM982.5 491.5l3.5-0.5 2-3.5-1-3-6.5 1zM1026.5 473.5l-1.5-0.5-2 2.5 3.5 2.5 2-0.5 0-1zM1049 477l-2-2.5-4.5 1.5 1 3.5 4 0.5 1-0.5zM1011 489l-0.5-2-5.5 0-1 3.5 0.5 0.5 5 0.5zM1027 462l0-1.5-2.5-2-1.5 0.5 0 3.5 1.5 1.5zM1015.5 491l5 0 0-5-3.5 0-2 4zM1015.5 480.5l-3.5-3.5-5 1.5 0 1.5 4.5 4.5 3.5-1.5zM1035 488.5l-4 3.5 2.5 3.5 4-1.5 0-4zM1031.5 474l-1-3-4 2.5 2 3zM988.5 493.5l-2.5-2.5-3.5 0.5-1 1 1.5 6 3 0zM1053.5 486.5l3.5 0.5 0-3.5-2-0.5-1 1zM1057.5 493l0.5-1-0.5 0 0-2.5-4 0-1.5 2zM976 486.5l-1 0.5-3-1-2.5 4 2 3 4 1 1-1zM996.5 495.5l1 3.5 3.5 0 0-4-4-2-0.5 1zM1016.5 465.5l1.5 0 2-3-1.5-4.5-4 4-1 1.5zM947 493.5l-11.5 5 12 0zM1033 481.5l4.5 0.5 0-3.5-3.5-1.5-1 1zM993 490l4 3 2-3.5-0.5-2-4-1.5-2 2.5zM1040 495.5l-2.5-1.5-4 1.5-1 3.5 7.5 0zM1023 462.5l0-3.5-4.5-1 1.5 4.5zM1004 490.5l-5-1-2 3.5 4 2 3-2 0.5-2zM1024.5 457l0 1.5 2.5 2 1.5-1 0.5-5-0.5 0zM1017 486l-2-3-3.5 1.5-1 2.5 0.5 2 4 1zM1038.5 460.5l1 2 5.5-0.5-2-2.5-2.5-1.5zM1011 489l-1.5 2.5 0.5 3 0.5 0 4.5-0.5 0.5-3-0.5-1zM1020.5 486l1.5-1 0.5-2.5-5.5-2.5-1.5 0.5-0.5 2.5 2 3zM1054 479.5l-2-3-3 0.5-0.5 2.5 2.5 2zM986 491l2.5 2.5 1.5 0 3-3.5-0.5-1.5-4.5-1zM1045 492l2.5-3.5-1.5-3.5-1.5 0-3 1.5-0.5 2 3.5 3.5zM997 493l-4-3-3 3.5 1.5 1.5 5-1zM1054 496.5l-3-3.5-1 1-1.5 5 5.5 0zM1026.5 488l-4 4.5 4 2.5 3.5-3-2.5-4zM1017 480l3-4.5-1.5-2.5-3-1.5-2.5 1-1 4.5 3.5 3.5zM1032.5 457.5l3 0.5 2-3-3.5-1.5-2 2.5zM1057 483.5l0.5-5-3.5 1 1 3.5zM1051 481.5l-2.5-2-1 0.5 0 4 2.5 0 1-1zM1050 467.5l-0.5-6-1.5-1-3 1 0.5 0.5-4.5 6.5 6 2.5zM1060 454l1.5-2-0.5-5-5 0 0 5 2 1 0.5-1 2.5-2.5-1 2-1 2zM1058.5 459l2-3.5-0.5-1.5-1-0.5-2.5 3.5 0 3zM1056 452l-3.5 1.5 1 6.5 1.5 0.5 0.5-3.5 2.5-4zM1010.5 451l0.5-4-6 0 0 3zM1060.5 455.5l-2 3.5 7 5.5 1 0.5 1-0.5-0.5-7.5zM1041.5 451.5l1 3 4 0.5 1.5-2-3.5-6-1 0zM1046.5 455l1.5 5.5 1.5 1 4-1.5-1-6.5-2-1-2.5 0.5zM1047 471l1 0 9 4.5 0.5 0-1-5-0.5-2.5-6-0.5zM1035 451.5l-1 1.5 0 0.5 4 2 2.5 2 2-3-1-3zM1074.5 457.5l-2-2-1.5-4 0-0.5-4.5 0 0.5 9zM1064.5 430l-2 9 6.5 0.5 4-5 0.5-0.5-6-4.5zM1016 428.5l4-5.5-0.5-1-6-2.5-2 6.5zM1061 428l-7-3.5-4 4.5 4.5 5zM1073 434.5l5 9 5.5-4.5-7.5-6.5-2.5 1.5zM1073 434.5l-4 5 2.5 6 1 0 5-1.5 0.5-0.5zM1027 441.5l-4-2.5-4 2.5 1 5.5 7 0zM994 417l1.5 0 3-4-1-7-2.5 1-7 2.5 0 5.5zM1062 439l-7-2-4 4 0.5 6 10 0zM1091 425l-3 0-1.5 3 3 2 1-0.5zM1095.5 430.5l2-4.5-4-2 0 5zM1083 452l-1.5 0-3.5 4 2 4 6-5zM1089 443.5l-3 0-2 2 0.5 3 7 1zM1084 438l2.5-2.5-3.5-5-7 1.5 0 0.5 6.5 5.5zM1087 435.5l4 5 4.5-0.5 0.5-1 0-4-3.5-0.5 0-0.5-3.5 0zM1081.5 445l2.5 0.5 2-2-2-5.5-1.5 0 1 1-4 3.5zM1081.5 452l1.5 0 1.5-3.5-0.5-3-2.5-0.5-3.5 4zM1088.5 398.5l6.5 3.5 3-5.5-7.5-2zM1106 427.5l-6 1 1.5-2.5 2.5-5 0-4-4 0-9 6 6.5 3-2 4.5 0 1.5 2 0.5 7-0.5zM1093.5 409.5l3-4-1.5-3.5-6.5-3.5-1.5 1 0 7 2.5 3.5zM1100 417l-6.5-7.5-4 0.5-1 1.5 1 10.5 1.5 1zM1091 383.5l-5-3.5-6 8 0.5 1 8 0.5zM1095 368l2.5 1.5 3.5-1 2-9-5.5 0.5zM1036 394.5l7.5-2 0-4.5-7.5 0.5-3.5-0.5zM1061 379l-3-0.5 1.5 4.5-5 1.5 6.5 5 5.5-1.5-0.5-4.5zM1101.5 396l0 6.5 4.5 1.5 2-7zM1097 389.5l0-2-6-4-2.5 6 2 3zM1114.5 415l3.5-6.5-9.5 0 2 6.5zM1123 417l-4-8.5-1 0-3.5 6.5 4 6.5 3 0zM1108 417.5l-4-0.5 0 4-2.5 5 9-3zM1132 416.5l0-7.5-5 0 0 5.5zM1135.5 415l0.5-1.5-4-3.5 0 5.5zM1136.5 417.5l-1-2.5-3.5 0.5 0 2.5zM1136 413.5l4-1.5-1-3-7 0 0 1zM1136 413.5l-0.5 1.5 1 2.5 1.5 1.5 1-0.5 1.5-5-0.5-1.5zM1136.5 417.5l-4.5 0.5 0 1-0.5 1.5 5.5-1 1-0.5zM1115 402l2 2.5 4.5-0.5-0.5-6.5-4-0.5zM1146.5 402l1.5-2 4-1.5-3-3-2-0.5-5 2 1 3.5zM1124.5 409l7.5 0 1.5 0-1-5.5-5-1-3 3.5zM1140 407.5l0-4-5.5-2.5-2 2.5 1 5.5 5 0zM1124.5 406l3-3.5-1-5-5 0-0.5 0 0.5 6.5zM1118 381.5l-2 3 1.5 4 5 0.5 0.5-4.5 1.5-3zM1117.5 388.5l-1 2.5 1 2.5 4.5 0.5 0.5-5zM1117 371l2-8-1-3.5-11.5 0-0.5 7zM1122 372l-5-1-2 5 3 5.5 6.5 0 2-3.5zM1128 383l2.5-6.5-1.5-3-1 1-4 8.5zM1139 370.5l6 0-1-15.5-5 1.5-2 3-1.5 8.5-0.5 0.5zM1136 397.5l4.5 0 6.5-2.5 2 0.5 1.5-4-1-0.5-8.5-1.5-5 4.5zM1193 352.5l-5.5-8.5-3.5-1-1 0-4 6 1 7-4 5 7.5 6.5 8-9-0.5-1.5zM1198.5 366.5l-7-8-8 9 0.5 3 3 1.5 5-0.5 7-2.5zM1176 361l-2.5 0.5-1 1.5 1 8 4.5 3 0.5 0 3.5-5 2 1.5-0.5-3zM1172.5 363l-8.5 5 1.5 4.5 2.5 2 5.5-3.5zM1165.5 372.5l-1.5-4.5-4-1.5-2.5 0.5-3.5 5 0.5 2.5 5.5 3.5z"/>
<path fill="#d62f27" d="M320 301l2.5-2.5 0.5-4.5-34 0 4 4 0 3zM316.5 306.5l3.5-5.5-27 0 0 2.5 2 2.5 0 0.5zM314.5 313l2-6.5-21.5 0 3 4-1 2.5zM296 318.5l17 5 2.5-4.5-1-6-17.5 0-1 2.5zM295 321l0 1-0.5 0 2 5.5 6 6 9 1.5 1.5-3 0-8.5-17-5zM277.5 313.5l8.5 10.5 2.5-0.5 2-3.5-1.5-11.5-6-0.5-5 0zM296 318.5l0-3-0.5 1.5-0.5 4zM294.5 342l-2-0.5-5.5 4 2 3.5 7.5 1.5 2.5-0.5zM332 330l-19 2-1.5 3 0.5 3.5 20.5 5.5 0.5-10.5zM369 321.5l14.5 3 0-15.5-9-0.5-6.5 4zM350 342.5l-2-9-15 0-0.5 10.5 1 2.5 7.5-2 9-1zM351 328l-3 5.5 2 9 11-8.5zM275.5 349l1 4.5 9.5 4 1-0.5-1-8-8.5-1.5zM297.5 350.5l-1 0-7.5-1.5-1.5-3-1.5 3 1 8 4 0.5 6.5-5zM306.5 361.5l-9-9-6.5 5 6.5 8 6 1.5zM291 357.5l-4-0.5-1 0.5-2.5 5.5 0 4 1.5 4 1 0 11.5-5.5zM298 385l-12-14-1 0-10 11 21 5zM295.5 389.5l-14 8 2 12 17.5 0zM322 385.5l0-16-17 2-1.5 10.5 14 6zM379 524l12.5 12.5 35.5-3.5-2.5-5-1-3-22.5-17zM391.5 536.5l-0.5 9.5 9.5 11.5 31-20.5-4-3-0.5-1zM400.5 557.5l0 6.5 21.5-1.5 3.5-4.5-3.5-7 3-5 1.5-5.5 5-3.5zM378.5 557l1.5 3.5 2 5 18.5-1.5 0-6.5-9.5-11.5zM391 546l0.5-9.5-12.5-12.5-4-0.5-15.5 17.5 1.5 4.5 5 0.5 3.5 2 8 6.5 1 2.5zM307 418.5l-16 7.5 0 6 13.5 7.5 5-2 1.5-2 1.5-8.5zM302 453l10-2 2-4-4.5-9.5-5 2-4 5-0.5 4zM305 460.5l8 1 0.5-0.5-1.5-10-10 2 0 2zM314 447l-2 4 1.5 10 8.5-6.5-5-7zM313 461.5l2.5 4 2 0 13-10-8.5-1-8.5 6.5zM330 468.5l3-13.5-2.5 0.5-13 10 10.5 3.5zM281.5 455.5l-8.5 4.5 0.5 0.5 5.5 6.5 4.5 3 4.5-2.5 0-7.5zM294.5 458l-1.5-0.5-5 2.5 0 7.5 5 1 4-4zM301.5 464.5l3.5-4-3-5.5-7.5 3 2.5 6.5zM306 472l9-5 0.5-1.5-2.5-4-8-1-3.5 4 2 6zM293 468.5l-5-1-4.5 2.5 1.5 1-0.5 4.5 8.5 3 0 4 0.5 0 1.5-3.5 0.5-5.5zM301.5 464.5l-4.5 0-4 4 2.5 5 8-3zM295.5 473.5l-0.5 5.5 11-2.5 0-4.5-2.5-1.5zM295 479l-1.5 3.5 7 2.5 8-3 0.5-1-3-4.5zM306 476.5l3 4.5 9-4.5-3-9.5-9 5zM318 476.5l-9 4.5-0.5 1 5 9.5 9.5-9.5-2-3.5zM306 499l7.5-7.5-5-9.5-8 3 4 10 0 0.5zM313.5 491.5l12.5 6.5 3-12-1-2.5-5-1.5zM326 498l1.5 3 14.5-9.5-13-5.5zM350.5 491l-8.5 0.5-14.5 9.5 0 3.5 14.5 3 12-15zM293.5 482.5l-0.5 0 0 1 2 5 4 4 5.5 2.5-4-10zM305.5 500l0.5-1-1.5-3.5-2.5 3 1 3.5zM324 509.5l-18.5-9.5-2.5 2 0 1.5 10 9.5 5.5 4.5zM327.5 504.5l-3.5 4.5 15.5 15.5 4-6.5-1.5-10.5zM342 507.5l1.5 10.5 22.5-4.5-12-21zM324 509l0 0.5-5.5 8 1.5 1 3.5 4 0 9 3 2.5 12 0.5 1-10zM343.5 518l-4 6.5-1 10 1 0 7.5 4.5 7.5 2.5 5-0.5 15.5-17.5-3.5-6-5.5-4zM334.5 409.5l0 10.5 0 10 0 10 0 12 15-7 0.5-2-3-4 0-9 2-2.5-4-7.5 3.5-10.5zM349.5 445l-15 7 0 6 0 1 17 12.5 3.5-12.5-3.5-2.5zM417.5 475l2.5-13.5-2.5-1.5-5.5 0.5-8-5-5.5 4.5-8.5-5-4 4-11-3.5-5 5.5 1.5 8.5 6 2.5 5 8.5-1.5 9.5-1.5 2 19 14.5 4-6 5.5-4 0-7-6.5-8 6-8.5zM421.5 506.5l11.5-1.5 0-11.5-16.5 6-8.5-3-5.5 4-4 6 13.5 10 11.5 8.5 1-2.5-2-10.5zM394.5 319.5l1-7-12-2 0 10.5zM383.5 381l0 14 7-2.5 5-11.5zM395.5 381l-5 11.5 11.5 1 1.5-11-6-3.5zM468 382l8 3 0.5-8-7.5-1zM467.5 392.5l11.5-3-3-4.5-8-3-4 4.5 0.5 4zM418.5 308l3.5 5 17.5-5-2.5-14-16.5 0zM480 367.5l2.5 0.5 0-8 5.5 0-2.5-18-10-0.5-3 5zM535.5 340.5l-0.5-0.5-10.5 1 0 15.5 2 3.5 3.5 0zM517.5 345.5l0 3 7 8 0-15.5-5 0.5zM459.5 416.5l14.5 3.5 1.5-10.5-17.5 0zM474 420l-14.5-3.5-2.5 11.5 10 0.5 7.5-7.5zM458 440l-1.5-12-23.5-1.5 0 19zM457 428l-0.5 0 1.5 12 3.5 4.5 12.5-9.5 0.5-2-7.5-4.5zM461.5 444.5l1 2.5 18.5 0-7-12zM455.5 488l-22.5-9.5 0 13.5 22.5 0zM584.5 426l-16.5 0-1 9.5 2 3 15-2.5zM584 436l0 0.5 3 3.5 10 0 5.5-13 0-1-4 0-14 0zM584 436l-15 2.5 0 3.5 7.5 4 7.5-9.5zM602 447l-5-7-10 0 1 7zM587.5 449l3.5 5 12.5-5.5 0-0.5-1.5-1-14 0zM587 440l-3-3.5-7.5 9.5 0 2 7 2.5 4-1.5 0.5-2zM583.5 450.5l-3 7 4.5 3.5 6-3.5 0-3.5-3.5-5zM517.5 468.5l9.5-2 5-8.5-10.5-7.5-6-2 0 19.5zM585 469.5l10.5 0 3.5-6-8-6-6 3.5-0.5 6.5zM595.5 482.5l2-6-2-7-10.5 0-1.5 3 0.5 2.5 9.5 9.5zM487 492l0 14-1 1 1.5 11-1 2 1 10-3.5 5 8 9 5.5 0.5 4.5-6 0-8.5 0-12 0-12 0-14zM433 492l0 5 9.5 11.5 2.5 11 15 0 5 3.5 4 0 9 13.5 6-1.5 3.5-5-1-10 1-2-1.5-11 1-1 0-14-14 0-14 0zM442.5 508.5l-9.5-11.5 0 8-11.5 1.5 3 16-0.5 1-0.5 1.5 1 3 3 6 4 3-1.5 0.5 14.5-0.5-1-15 1.5-2.5zM445 519.5l-1.5 2.5 1 15 2 1.5 10.5 2.5 18 0 3-4.5-9-13.5-4 0-5-3.5zM477 551l-2-10-18 0-10.5-2.5-7 15.5 6 12 5.5-1 12.5 4.5 4-1.5 2-12.5zM422 551.5l3.5 6.5-3.5 4.5-1.5 3.5 20.5 6.5 4.5-6.5-6-12zM451 565l-5.5 1-4.5 6.5 21.5 6.5 12.5 4 7 2 8-12-11-3-2.5 0.5-9-2.5-4 1.5zM479 570l11 3 1.5 0 3.5-4.5-2.5-9.5-9-5.5-1 0.5-5.5-3-7.5 4.5-2 12.5 9 2.5zM497.5 585.5l18 0 0-16.5-6.5-3-14 2.5-3.5 4.5zM539.5 507.5l0.5-1 0.5-14.5-25 0 0 17.5zM540 506.5l-0.5 1 1 10 3 3.5 15-3 0.5-9.5zM563 504.5l-4 4-0.5 9.5 5 6 10.5-1.5 1-9.5-1-3.5zM560.5 529l3-5-5-6-15 3 0.5 4.5zM560 557l-16 8 2 13 11.5 0-1.5-3.5 8.5 0zM721.5 432l3.5-1.5 0-6.5-6-1-2.5 1.5-1 3.5zM739 464l6.5 1.5 2.5-4-2.5-4.5-3.5-1-4 6zM742 456l3.5 1 4.5-5-2-4-5.5 1.5-1.5 4.5zM702 513.5l-3.5-1.5-3 3.5 2 6.5 0.5 0 5.5-4zM713 515l-4-0.5-3.5 4 3.5 5.5 2.5-1.5zM691.5 617l3 5 5.5-2 0.5-5-1-1.5-7 0zM570 584l-3-9.5-11 0 1.5 3.5 5.5 5.5 5 3zM673 633l-7 6 6.5 8 5.5-3 1.5-4.5zM721 597.5l-6 0 0 0.5 0 9 4 3 4-1 2.5-6zM737 599.5l-6 2-0.5 0.5 2.5 4.5 5.5 1 2.5-3.5zM743 603.5l3-5.5-1.5-3.5-2-0.5-4 1-1.5 4.5 4 4.5zM705.5 560.5l-7 6.5 7.5 3 4-4.5 0-2.5zM685.5 651.5l-7.5-7.5-5.5 3 1.5 1.5 3 8zM695 601l-0.5-4-7-1-1.5 7 7.5 1zM731.5 551l-6-2-4 5 2 2.5 6.5-1zM746.5 606l6-2-1.5-5.5-5-0.5-3 5.5zM722.5 564l-2.5 0.5-4 6 0 2 8 2.5 2.5-6zM700.5 615l-0.5 5 4.5 4 5.5-0.5 1.5-4-4-6zM695 561.5l3 5.5 0.5 0 7-6.5-1.5-5.5-4-1.5zM738.5 607.5l-5.5-1-3.5 7 1 2.5 9-5zM632 546.5l-2.5 3 1 6 4 2.5 6.5-4 0.5-2-3.5-6zM777 356l1-9-7-0.5-2.5 4 7 7zM785.5 377l3.5-1.5 2.5-7.5-5-3-5 1.5-2.5 3-0.5 4zM756 351.5l4 5.5 4-1 2-4.5-6-5.5-0.5 0.5zM809 411l5.5-4.5 0-0.5 0-0.5-5.5-2-2.5 2.5zM763.5 421.5l5.5-6-2.5-4-7 2 3.5 8zM781.5 418l-1-4-4-2-4.5 4.5 1.5 3 4 2zM776 485.5l3.5 5.5 4.5-5-1-1.5-6.5 0zM763.5 464l2-3-0.5-3-2-1.5-8.5 2.5 0 2zM763.5 512l3.5-3-2-9-10.5 0 2 12zM827 597.5l-1 5 3.5 2 4.5-3.5-5-4zM788 355.5l-2.5 0.5-1 8 5.5 3 3.5-6zM849 390l0 4 8 4.5 1.5-8.5zM863.5 387.5l-3.5 1-1.5 1.5-1.5 8.5 1 2.5 9.5 0-1.5-8 0-5zM845 398l-6.5-8-3.5 2 4 9 5.5 0zM845 398l4-4 0-4-0.5-1-8.5-1.5-1.5 2.5zM866.5 366l-2.5 1 3-4-2.5-1-6.5 2.5 0 5 5.5 1.5zM863 408.5l-4-3.5-4.5 6 3 2 3.5-0.5zM857.5 413l-1 4.5 4 2.5 3.5-4.5-3-3zM860.5 420l0.5 1.5 5 0.5 2-4-2.5-2.5-1.5 0zM856.5 417.5l-2 1 0 5.5 4 0 1.5-1 1-1.5-0.5-1.5zM863 408.5l-2 4 3 3 1.5 0 3.5-6.5-1-2zM872 425.5l0-7.5-4 0-2 4 1.5 3.5zM851 417.5l-2.5 3.5 0.5 2.5 2.5 1 3-0.5 0-5.5zM852.5 410l1.5 0.5 0.5 0.5 4.5-6-1-4-5.5 0zM947.5 396l-6 4.5 5 4.5 1-1 2-4 1 0zM898 398l1.5-4.5-6.5-2.5 1 3.5-0.5 3.5zM941.5 400.5l6-4.5-0.5-2-5-1.5-4 4.5 2.5 3.5zM899.5 435.5l-3-2-2.5 2 1 5 1 0.5 3.5-2zM876 415l-3.5 0-0.5-1 0 8.5 0.5 0 5-3zM877.5 419.5l2.5 1.5 3-3.5-1-3.5-3 1-3 0zM914 425l-2.5 3.5 1 2 4-0.5 0-5zM887.5 440.5l-2 0-1 7 2.5 2 4.5-3 0-4zM930.5 451l-3 1.5-0.5 3.5 5 4 2.5-1.5 1-3zM942.5 446l0.5 1 6 1.5 1.5-3.5-4-4-1 0zM920 462l2.5 1.5 3-2-3.5-4.5-1 0zM919.5 475l-2-1-3.5 2-1 2.5 1.5 2.5 4-0.5 2-2zM923.5 479.5l2.5-1 1-3-4-3-3.5 2.5 1 3.5zM899.5 474l3.5 1.5 4-3.5-3-4-2.5 3-3 0.5zM917 463.5l3-1.5 1-5-4.5 0-3.5 2.5zM912.5 498l-6.5 0-0.5 3 6 2.5zM915.5 521.5l-5.5-3.5-1.5 1.5 0 5.5 7 0zM894 508l0.5 1.5 5 1.5 2-3-4.5-4zM931.5 506.5l-0.5-0.5-4.5 0.5-0.5 1.5 3 3.5 2.5-1zM931 506l-1-3.5-3-0.5-2 2 1.5 2.5zM921.5 503l0.5 0 1.5-5-5 0zM897.5 519.5l-5.5-2-1.5 2 1 5.5 3 0zM887 512l-1-1-5-1.5-2 6 4.5 2zM830.5 520l-1 3-3.5 2 8 0-0.5-3.5zM848.5 525l7 0 0.5-5.5-2-1-5 1.5-0.5 0zM879 503.5l1.5 1.5 4.5-2 0-5.5-5.5 0zM899.5 511l-5-1.5-2 4 7.5 1.5zM880 508.5l1 1 5 1.5 2.5-5.5 0-0.5-3.5-2-4.5 2zM833.5 521.5l0.5 3.5 3.5 0 1-3.5-2-2zM831 525l-5 0-1.5 2.5 3 4.5 3 1 1-0.5 2-2.5zM838.5 525l-7.5 0 2.5 5 1-0.5zM867.5 594.5l-3.5 1-0.5 1 2.5 4 2 2.5 3.5 0zM916 534l2.5 4.5 4.5-3.5-2.5-3zM922 549l-4-0.5-2.5 2-0.5 1 3.5 3.5 0.5 0 3.5-3zM912 525.5l-3.5 7 3.5 2 3-1 0-4.5zM927.5 532.5l-3 3 1 4.5 3.5 0.5 3-3-2.5-5zM925 540.5l-7-1.5-0.5 1.5 0 2 5.5 2zM920 528.5l1 1 4-0.5 1.5-4-1.5 0-5 0zM911.5 539l-1.5 1.5 2.5 4.5 4.5-1 0.5-1.5 0-2zM917 544l-4.5 1-0.5 2 3.5 3.5 2.5-2zM925 529l-4 0.5-0.5 2.5 2.5 3 1.5 0.5 3-3zM931 545.5l-2-5-3.5-0.5-0.5 0.5-2 4 0.5 1.5 5.5 1zM934 553l5 2 1-4.5-2.5-2-2.5 0.5zM936.5 538.5l-0.5-0.5-4-0.5-3 3 2 5 0 0.5 5.5-4.5zM925.5 540l-1-4.5-1.5-0.5-4.5 3.5-0.5 0.5 7 1.5zM912 534.5l-0.5 4.5 6 1.5 0.5-1.5 0.5-0.5-2.5-4.5-1-0.5zM939 555l-5-2-1.5 1.5 0 2.5 4.5 1.5zM900 595l-3 2-0.5 6.5 4 1.5 1.5 1.5 2.5-2.5-2-7.5zM955.5 618.5l-2.5-7-5 1-4.5 7 1 1 3 2.5zM948 601.5l5.5 5.5 7-6.5-0.5-2.5-11.5-0.5zM960.5 600.5l4 4 8.5-3.5-0.5-5-9-1-1 6.5-2.5-3.5zM990 647l-2.5-5.5-7.5 4.5 0 3 3 1.5zM972 676l3 2 2 5.5 6.5-4.5 0.5-4-5.5-4zM926.5 606.5l3-0.5 1-9.5-9.5-0.5zM963.5 640l-4-3.5-2 1-2 6 4.5 2.5 2.5-1.5zM964.5 654l2.5 2.5 7.5-3 0.5-1.5-5-5-2.5 1zM983.5 679l-6.5 4.5 1.5 4 11.5-1 0.5-1.5zM983 650.5l2 5 8.5 0-2-5.5-1.5-3zM967 656.5l0 3 5.5 4.5 0.5 0 4-5-2.5-5.5zM964.5 604.5l0.5 5.5 10.5-0.5-2-8-0.5-0.5zM960 646l-0.5 3 3.5 4.5 1.5 0.5 3-6-5-3.5zM958.5 620l0.5 1.5 6 2 5-5-5.5-5zM900 595l2.5 1.5 5-1 1.5-2 0.5-2.5-10 0zM985 655.5l-2.5 4.5 2 3 2.5 1.5 8-6.5-1.5-2.5zM989 668l-2.5 5.5 7.5 3.5 1-2 0-6.5zM985 655.5l-2-5-3-1.5-5 3-0.5 1.5 2.5 5.5 5.5 1zM971 633l-1.5-0.5-2.5 6 5 4 3.5-1 0-3.5zM885.5 595l4.5 3.5 2.5-2-1.5-5.5-4 0zM978.5 670l0 1 5.5 4 2.5-1.5 2.5-5.5-2-3.5-2.5-1.5zM978.5 630.5l-7.5 2.5 4.5 5 4-4zM953.5 607l0 3.5 11 0 0.5-0.5-0.5-5.5-4-4zM965 623.5l1.5 6 1.5 0.5 5.5-5 0-3.5-3.5-3zM964.5 610.5l-11 0-0.5 1 2.5 7 3 1.5 6-6.5zM955.5 643.5l2-6-5.5-2-2 6.5 1.5 3zM913 605.5l-2-2.5-2-0.5-4.5 1.5-2.5 2.5 5 5.5 4.5 1.5zM951 629l1.5 4.5-0.5 2 5.5 2 2-1 1-5-4-3.5zM897 597l-4.5-0.5-2.5 2-0.5 2.5 7 2.5zM879.5 595.5l-1.5 2 1 4.5 5.5-0.5-1-5zM980 646l-2-3.5-2.5-1-3.5 1-2 4.5 5 5 5-3zM972.5 664l-5.5-4.5-5 3.5 4 3.5 0.5 3.5zM984 637l3 0 0.5-4-5-6 0-0.5-3 2-1 2 1 3.5zM921 596l-0.5 0-3 9 4.5 3.5 3.5-2 1 0zM959 621.5l-2.5 6.5 4 3.5 6-2-1.5-6zM982 566.5l-2-5-0.5-0.5-5 2 4 6.5 1 1.5zM979.5 571l3 3 6.5-5.5 0.5-0.5-2-2-5.5 0.5zM990 535.5l-3-7-4 3 1 6.5 2.5 1zM1013 549l1.5-2 6-3-6.5-6-4.5 7zM982 566.5l5.5-0.5 0-5-7.5 0.5zM957.5 522l-12.5 3 3.5 8 0.5 1 5-1.5 5-4.5zM994.5 559.5l-6.5 0-0.5 1.5 0 5 2 2 7-4.5zM1002 532.5l-6.5 0-1 3.5 1.5 2.5 1 0.5 5-2zM973 529l3.5 3.5 0.5 0 2.5-1.5-1.5-8.5-1-0.5zM994.5 559.5l2 4 1.5-1 8-5.5 0-0.5-10-1.5zM964 536.5l-2.5-7-2.5-1.5-5 4.5 6 6 4-1.5zM988 559.5l6.5 0 1.5-4.5-1-2-4-1-4 2 0 2zM967.5 527.5l2 1.5 3.5 0 4-7-9 0zM979.5 531l3.5 0.5 4-3 0.5-0.5-4 0 0-2.5-4-1.5 0-1.5-1.5 0zM1028.5 532.5l-1.5 2 4.5 6.5 1.5-3 4-2.5zM1010 518.5l-2 4 6 2 2-4.5zM1028.5 530l1-1-1.5-6.5-4 0.5-3 3 0 0.5zM957.5 509l6 1.5 1-4.5-0.5-1.5-1.5 2-5.5 1zM1010 509l-0.5 0-0.5 0-2 3 0.5 4 2 1 3.5-4zM932 522l-1.5-1-2 2.5 0.5 1.5 2.5 0zM995.5 528l5.5 0-1-5-3.5-0.5-1.5 1.5zM1038.5 530l-4.5-3-4.5 2-1 1 0 2.5 8.5 3 3-2.5zM995 524l-4-1-2 2.5-0.5 2.5 7 0zM1024 504.5l3 3 6-2 1-6.5-9.5 0zM1002 509l-0.5 2.5 0.5 0.5 5 0 2-3zM976.5 504l-3.5-3.5-2.5 2.5 0.5 4 3 0.5 3-3zM971.5 515l-1-0.5-6 1.5 3 6 0.5 0zM1020 531.5l0-4-5.5-1-1.5 2 0 3 4.5 2zM976.5 521.5l-3.5-6.5-1.5 0-3.5 7 8.5 0zM941.5 515l7.5 6.5 3-4.5-0.5-3-3.5-3-4.5 2-2 1zM1012 506l3.5-1 0.5-6-9 0zM1008 522.5l-0.5 0.5 1.5 5 4 0.5 1.5-2-0.5-2zM1001.5 506l-3-1-4.5 3.5 2 4.5 5.5-1.5 0.5-2.5zM1041.5 468l-5 2.5 0 2.5 4 2.5 0.5 0 1.5-6.5-1.5-0.5 0.5 0zM1035.5 458l1 2 2 0.5 2-2.5-2.5-2.5-0.5-0.5zM1034.5 462l0.5 3.5 3.5-0.5 1-2.5-1-2-2-0.5zM1059.5 496.5l-2-2.5-3.5 2.5 0 2.5 5.5 0zM1044.5 485l-1.5-5-5 2.5 3.5 4zM1035 465.5l-3.5 0.5 0 4 4-0.5zM1041 488.5l0.5-2-3.5-4-3.5 4.5 0.5 1.5 2.5 1.5zM1032.5 457.5l-0.5-1.5 0 0.5-3-2-0.5 5 3 1zM1027 462l3 2.5 2-3.5-0.5-0.5-3-1-1.5 1zM1030 465l0-0.5-3-2.5-2.5 2 0 0.5 3 2.5zM1029.5 480.5l2.5 1.5 1-0.5 0-3.5-4 0zM1047.5 480l-4-0.5-0.5 0.5 1.5 5 1.5 0 1.5-1zM1031.5 474l2.5 1 2.5-2 0-2.5-1-1-4 0.5-1 1zM1024.5 457l4-2.5-4.5-2.5-2 2zM1031.5 470l0-4-1.5-1-2.5 2-0.5 1 3.5 3zM1041.5 468l-3-3-3.5 0.5 0.5 4 1 1zM1033 481.5l-1 0.5-0.5 3 3 2 3.5-4.5-0.5-0.5zM1035.5 458l-3-0.5-1 3 0.5 0.5 2.5 1 2-2zM1034.5 462l-2.5-1-2 3.5 0 0.5 1.5 1 3.5-0.5zM1041 475.5l1.5 0.5 4.5-1.5 1-3.5-5.5-2zM1026.5 453.5l5.5 3 2-3-2-4.5-5 0zM1048 453l2.5-0.5 0-5.5-6 0zM1035 451.5l6.5 0 2-4.5-8 0zM1052.5 453.5l3.5-1.5 0-5-5.5 0 0 5.5zM1065.5 464.5l-7-5.5-2 1 0 3.5 1.5 5zM1066.5 465l-2 11 7-0.5 0-7.5-4 0 0-3.5zM1071.5 475.5l3.5 0 3.5-7.5-7 0zM1040.5 457.5l2.5 2 2 2 3-1-1.5-5.5-4-0.5zM1025.5 449l6.5 0 2 4 1-1.5 0.5-4.5-10 0zM1060.5 455.5l6.5 1.5-0.5-6-5 1-1.5 2zM1005 450l0 5.5 6-3-0.5-1.5zM1061.5 452l5-1-0.5-4-5 0zM1053.5 460l-4 1.5 0.5 6 6 0.5-1-4.5 0-3zM1067 460l0.5 8 11 0-0.5-6-3.5-4.5zM1071 451l-1-2 2.5-3.5-3-0.5-3.5 2 0.5 4zM1044.5 437.5l6.5 3.5 4-4-0.5-3-4.5-5-1.5 0-5 5.5zM1069 439.5l-6.5-0.5-0.5 0-0.5 8 4.5 0 3.5-2 2 0.5zM1071.5 421.5l-4 8 6 4.5 2.5-1.5 1.5-6 2-2zM1083 425.5l-3-1.5-2.5 2.5-1.5 5.5 7-1.5 1-2zM1086.5 422.5l1.5 2.5 3 0 1.5-1.5-5.5-2.5zM1081.5 452l-3.5-3-1 0-3 4 3.5 2.5 0.5 0.5zM1086.5 428l1.5-3-1.5-2.5-3.5 3 1 3zM1074 445l-1.5 0.5-2.5 3.5 1 2.5 3 1.5 3-4zM1091 425l-0.5 4.5 3-0.5 0-5-1-0.5zM1089.5 430l-0.5 4 3.5 0 2.5-2.5 0.5 0.5 0-1.5-2-1.5-3 0.5zM1084 438l2 5.5 3 0 2-3-4-5-0.5 0zM1086.5 422.5l0.5-1.5-3-1-4 4 3 1.5zM1083 430.5l3.5 5 0.5 0 2-1.5 0.5-4-3-2-2.5 0.5zM1091 440.5l-2 3 2.5 6 2.5-3 1.5-6.5zM1084.5 448.5l-1.5 3.5 3 3 3-3 2.5-2.5zM1081.5 445l-2-2.5-2 1.5-3.5 1 3 4 1 0zM1098 396.5l-3 5.5 1.5 3.5 5-3 0-6.5-1-1zM1104.5 432l4.5 0 11.5-3.5 10.5-4-8 1.5 2-2.5-6 3-8.5 0-4.5 1zM1114.5 415l-4 0-2.5 2.5 2.5 5.5 3.5-1.5 4.5 0zM1127 409l-8-0.5 4 8.5 4-2.5zM1143 400.5l-3 3 0 4 7.5 1 2.5-2-0.5-1.5-4-1 1-2zM1132.5 403.5l2-2.5 0-3.5-8 0 1 5zM1146.5 416.5l4.5-3 0 3.5 6-1.5 6-1-1.5-4-0.5 2-7.5 0.5-2.5-3.5-1-3-2.5 2zM1142 397l-1.5 0.5-6 0 0 3.5 5.5 2.5 3-3zM1147.5 408.5l-7.5-1-1.5 1.5 0.5 0 1.5 4.5 3 4 2 0 1-1zM1137.5 381.5l-5 4-0.5 4 4 4.5 5-4.5-1.5-7zM1139.5 382.5l1.5 7 8.5 1.5-3.5-5-0.5-5.5zM1168 374.5l-2.5-2-5.5 5.5 1 3.5 4.5-1 4.5-2zM1154.5 374.5l-3.5 5.5 4.5 5.5 0.5 0 2.5-3.5 2.5-0.5-1-3.5zM1151 380l-5.5 0.5 0.5 5.5 4.5 5.5 2.5-4.5 2.5-1.5z"/>
</g>
<path d="M383.5 294L383.5 336.5L385.5 343.5M267 339L276.5 339L282.5 340.5L286.5 344L289 349L296.5 350.5L306.5 348L314.5 349L326 348L341 344.5L351 343.5L385.5 343.5M385.5 343.5L392.5 351.5L389 358L381 369.5L384 373L386 379L383.5 379.5L383.5 409.5M264 409.5L482.5 409.5M334.5 409.5L334.5 459L423.5 525M423.5 525L424.5 528L427.5 534L431.5 537L426.5 540.5L425 546L422 551L425.5 558L422 562.5M433 409.5L433 505L421.5 506.5L424.5 522.5L423.5 525M433 492L754.5 492M400 294L400 310.5L405.5 317.5L405 320L419 328.5L428 332.5L425.5 350L434 350.5L443 360.5L450.5 369L462 368L475 366.5L482.5 368M482.5 360L482.5 426M482.5 360L598.5 360M482.5 426L631.5 426M598.5 294L598.5 426M515.5 426L515.5 585.5M631.5 426L631.5 492M631.5 442.5L743.5 442.5M598.5 344.5L722.5 344.5M598.5 393L690.5 393L698.5 396.5L710 395.5L720 399.5L724.5 401M616 492L615 574.5L556 574.5L557.5 578M616 500L665.5 500L665.5 532L678.5 536.5L690.5 539.5L700.5 543L712 544L722 544L735 543.5L745 542L757 547M754.5 492L754.5 500L757.5 518L757 547L764 548.5L764 574.5L770 582.5L772 589L770 597.5L770 605.5L767.5 612M764 558L811.5 558M754.5 500L828.5 500L825 508.5L836 508.5M754.5 492L754.5 457L750 452L746.5 445L743.5 442.5L738.5 436.5L735.5 432.5L734 422.5L730 414L726.5 406L724.5 401L722 393L724.5 384.5M735.5 432.5L802.5 432.5L807.5 436M724.5 384.5L811 384.5M724.5 384.5L724.5 355L717.5 350L722.5 344.5L718.5 333.5L718.5 327L715 312L711.5 294M785.5 355L784.5 364L793 369L799.5 371.5L809.5 379L811 384.5L813 397L820.5 401L828.5 407.5L827.5 412.5L813.5 420L813 429L807.5 436L806 443L811 449L819.5 459L827.5 461.5L827.5 467L836 478L839.5 487L845.5 492L845 497.5L839.5 500L836 508.5L829.5 523L826 525L821 533L813 544.5L811.5 558L814.5 567.5L808 581L804.5 591L835.5 591L833.5 596.5L837.5 604.5M796 331L793 341.5L784 345L785.5 355M824.5 334L846 341L862.5 344.5L866.5 354L870.5 358M820.5 401L867.5 401M872 414L872 453L870 460.5L872.5 467L865 472L863.5 478.5M845.5 492L856 490L863.5 478.5L872.5 477L884 476L892 473L901.5 471L907 464L916.5 457L922 457L926 462L935.5 464.5L947 463.5L953.5 468.5L958.5 465.5L960 461.5L967.5 457L973.5 452L982.5 446.5L985 437.5L988 431.5M916.5 457L916.5 414M877.5 413.5L916.5 413.5L916.5 414L939.5 414M988 409.5L988 447M988 447L1066 447L1069.5 445L1072.5 445.5M1000.5 405L1000.5 409.5L1073.5 409.5L1077.5 412.5L1084 420L1077.5 426.5L1076 432.5L1083.5 439L1077.5 444L1072.5 445.5L1070 449M1084 420L1097.5 426L1095.5 431L1096 434M1066 447L1067.5 468L1078.5 468M1064.5 476L1075 475.5M953.5 468.5L958.5 480L964 483M964 483L952 491L935.5 498.5M964 483L975 487L991.5 483.5L1001.5 470.5L1008 468.5L1014.5 462L1024 452L1032 456.5L1034 453.5M1005 447L1005 455.5L1013 451.5L1023 449L1032 449L1034 453.5L1038 455.5L1043 459.5L1045.5 462L1041 468.5L1048 471L1057 475.5M839.5 500L863.5 500L863.5 497L935.5 498.5L1065 499M826 525L945 525M925 525L930.5 518L943.5 513L953.5 508.5L962.5 506.5L968.5 498.5M861 525L862.5 526.5L856.5 576L857.5 601M904 525L911 560.5L914.5 569.5L912 581.5L914 591L916 596L960 598L962.5 601.5L963.5 595L972.5 596M914 591L870.5 591L874 597.5L872.5 602.5M945 525L948.5 533L960 545.5L965 551L971.5 558L978.5 569.5L982.5 574M945 525L958.5 521.5L979.5 522.5L979.5 524L983.5 525.5L983.5 528L1002 528L1020.5 544M1106.5 359.5L1105.5 368L1107.5 383L1108 397L1104 408.5L1104 421L1101.5 426M1137 359.5L1135.5 368L1128 374.5L1123 384.5L1121.5 397.5M1144 355L1146 386L1150.5 391.5M1108 397L1140.5 398L1147 395L1149 395.5M1104 408.5L1132 409L1139 409L1140.5 413.5M1132 409L1132 419L1131.5 420.5" fill="none" stroke="#000" stroke-width="2" stroke-linejoin="round"/>
<path d="M289 294L746 294L746 287.5L751 288.5L754 298L768 301.5L778 300L782 300L793 305.5L808 309L818.5 308.5L831 308.5L837.5 310.5L822.5 315L809.5 322.5L796 331L806 331L814.5 328.5L818 327.5L818.5 331.5L824.5 334L836 330L847.5 327.5L856 322.5L861 319.5L868 319.5L861 324.5L856.5 329.5L862.5 328.5L870 329.5L874 335L882.5 336L889 335L897 332L909 331.5L914 330.5L914.5 335L920.5 336L924.5 335L928.5 339L932 342.5L937 341.5L938.5 344L930.5 344L918.5 346L914 343.5L904 342.5L892 345L888 346L887.5 350L882.5 347.5L880 347.5L875 353L870.5 358L868 361.5L864 367L868 365L874 360L880 355L877.5 360.5L872.5 369.5L871.5 374.5L869 379.5L866 388L866 393L867.5 401L867.5 406L870.5 412L872.5 415L879 415L884 413L889 407.5L893 401L894 394.5L892 389.5L889 382L890 376.5L893 369.5L894 365L896.5 361L901.5 360L904 356.5L904.5 362.5L907 359L909 355L913 353L914 349L918 347L927 349.5L933.5 353L940 355.5L942 360L942 365L941 371.5L937 375.5L932 378L931 382L937.5 381L942 377L947.5 375L952.5 379.5L955 388L956.5 393L955 398.5L949.5 400L947.5 404L944.5 407.5L939.5 414L947 416L952 418.5L963.5 417.5L968.5 417.5L976.5 413.5L988 409.5L995 407L1000.5 405L1011.5 398.5L1014.5 395.5L1014.5 392L1012 388.5L1021.5 386.5L1036 388.5L1046 388L1054.5 384.5L1059.5 383L1057.5 376.5L1062.5 371.5L1074.5 362.5L1083.5 360L1137 359.5L1139 356.5L1144 355L1148 355.5L1149 353L1155.5 347.5L1158 344L1157 341L1161 336.5L1162 331.5L1175 319L1177.5 322L1180 324L1190 321L1198.5 325.5L1198.5 344L1198.5 348L1204.5 350L1204 355L1206.5 357.5L1211.5 361.5L1212 363L1201.5 368L1192 371.5L1187 372L1182 369L1178.5 374L1177 375.5L1165.5 380.5L1158.5 382L1156 385.5L1153 387L1150.5 391.5L1149 395.5L1152 398.5L1148 400L1145.5 404L1149.5 405L1151 409.5L1153.5 413L1161 412.5L1162 409.5L1158.5 408L1161 409L1163 414.5L1157 415.5L1151 417L1151 413.5L1145.5 417.5L1143.5 417.5L1140.5 413.5L1139 418.5L1137 419.5L1131.5 420.5L1129 421L1114 421.5L1101.5 426L1100 428.5L1110.5 426.5L1119 426.5L1125 423.5L1123 426L1131 424.5L1120.5 428.5L1109 432L1097.5 432.5L1095 431.5L1092.5 434.5L1096 435L1096 439L1094 446.5L1089 452L1080 460L1077.5 455.5L1071 451.5L1070 449L1072.5 455.5L1078 462L1078.5 468L1075 475.5L1069.5 482.5L1063.5 490L1064.5 482.5L1063.5 476L1058.5 470.5L1056.5 464L1056.5 457L1060 451.5L1061 449.5L1058.5 452L1055.5 457L1055 464L1056.5 470.5L1057.5 477L1057 483.5L1057.5 492L1062.5 493.5L1065 499L1067 505L1071.5 515L1070.5 521L1062.5 523.5L1054 531.5L1052 530L1041 532L1033 538L1030.5 544L1020.5 544L1014.5 547L1010.5 553L1008 555.5L998 563L989 568.5L982.5 574L978.5 579L973.5 589L972.5 596L973.5 601.5L976 610.5L982.5 627L987.5 633L986.5 638.5L991.5 650L995.5 660L995 675L991.5 683L990 686.5L978.5 687.5L975 678L966.5 671.5L966 666.5L959.5 661L953.5 648.5L950 642L952.5 633.5L950 625.5L944.5 620.5L937 610L930.5 605.5L925.5 606.5L914 614L907 612L900.5 605L889 601L872.5 602.5L868 603L866 600.5L863.5 596L862.5 603L857.5 601L846 601L837.5 604.5L842.5 606.5L837.5 612L841 618L845 624L841 624.5L827.5 622L816 623L809.5 619L801 615.5L793 614.5L776.5 611L767.5 612L758 614.5L752.5 618L743.5 624.5L726.5 633L718.5 638.5L712 645L708.5 652L709.5 660L712.5 674L707 675.5L693.5 671.5L680.5 666.5L674 648.5L657 629L650.5 618L642.5 611L626 611L619 617L613.5 624.5L602.5 619.5L593 614.5L587.5 605.5L583 596.5L563 583.5L557.5 578L529.5 578L529.5 585.5L482.5 585.5L420.5 566L422 562.5L382 565.5L380 560.5L377.5 554.5L369.5 548L366 546L361 545.5L359.5 541L354.5 541.5L347 539L339.5 534.5L326.5 534L323.5 531.5L323.5 522.5L320 518.5L313 513L303 503.5L302 498.5L304.5 495L299 492.5L295 488.5L293 483.5L293 478.5L284.5 475.5L285 471L279 467L273.5 460.5L271.5 454L271 446.5L266.5 440.5L261.5 435L265 430L266 425L266.5 419L265 413.5L264 408.5L261.5 402.5L259 395.5L262.5 388L265 382L266 376.5L267 366.5L268.5 360L269 351.5L269 345L267 339L267.5 332.5L266 327.5L262.5 321L257.5 312L256 304L268.5 307.5L277.5 308.5L283 308L289 308.5L290.5 320L286.5 326L295 322L295.5 317L298 310.5L295 306L293 303.5L293 298z" fill="none" stroke="#000" stroke-width="2.7" stroke-linejoin="round"/>
<g fill="#000" stroke="#000" stroke-width="1" stroke-linejoin="round">
<path d="M289 300.500L296 300L298 307L300.500 313L302 319L300.500 324L295.500 327L285.500 328L282 324L285.500 317L289 312L288 305.500Z"/>
<path d="M282 300h4v3h-4zM279 303h2v2h-2z"/>
<path d="M330 540h5v2h-5zM336 541h4v2h-4zM343 543h2v1h-2zM357 551h3v2h-3zM359 558h2v3h-2zM350 548h2v2h-2z"/>
<path d="M1154 419h5v3h-5zM1160 420h4v3h-4zM1149 415h2v2h-2z"/>
<path d="M1052 452l4 -2 3 3 1 6 -2 5 -3 -2 -2 -5z"/>
<path d="M845 622l3 1 2 3 -3 -1zM838 626l3 0 1 2 -3 0z"/>
<path d="M268 328l-3 2 0 6 2 4 2 -3 -1 -5z"/>
<path d="M844 313l5 -2 6 -3 1 1 -5 3 -6 2z"/>
</g>
<path d="M1057 505L1064 503L1068 508L1070 516L1068 522L1063 524L1061 517L1056 512Z" fill="#fff" stroke="#000" stroke-width="1.500"/>
<path d="M1052 499L1060 498L1063 500L1056 502Z" fill="#fff" stroke="#000" stroke-width="1"/>

<defs><marker id="cd" markerWidth="4" markerHeight="4" refX="2" refY="2" markerUnits="userSpaceOnUse"><path d="M1 0h2v1h1v2h-1v1h-2v-1h-1v-2h1z" fill="#000"/><rect x="1" y="1" width="2" height="2" fill="#f00"/></marker></defs>
<polyline fill="none" stroke="none" marker-start="url(#cd)" marker-mid="url(#cd)" marker-end="url(#cd)" points="754,460 848,445 1140,404 460,394 1140,418 823,416 934,444 1149,396 960,530 914,528 364,546 729,488 893,389 1014,513 863,404 852,568 826,464 819,460 1105,419 758,457 942,398 874,500 683,481 1027,393 865,407 1026,393 470,551 873,414 380,318 965,451 611,375 854,510 709,549 1101,432 312,464 584,444 1105,431 304,482 1115,415 923,489 953,640 966,662 1072,434 1065,408 1000,435 1045,460 771,414 1024,435 1116,421 996,434 992,665 975,423 296,476 842,473 1045,436 916,522 903,402 580,448 1067,514 861,386 1140,414 1073,438 832,432 999,507 300,477 970,602 366,541 854,491 933,506 380,562 850,369 793,525 902,475 933,545 720,524 965,640 806,362 895,434 771,415 964,526 473,432 880,513 970,600 973,633 1016,397 907,587 430,533 943,441 934,393 926,550 1005,506 483,574 882,531 926,408 922,454 1074,442 981,636 900,470 919,458 743,611 887,599 900,504 1005,506 932,536 704,514 943,446 857,420 986,637 710,667 781,358 823,530 295,320 798,523 555,522 961,658 920,460 775,361 585,463 1020,509 927,451 979,540 775,360 1033,453 338,494 923,459 904,404 1031,519 1037,390 933,405 965,564 823,471 751,457 469,551 471,551 738,612 1104,420 892,409 672,573 929,545 1138,416 984,425 1084,441 416,506 712,566 906,384 1094,435 1002,439 879,598 921,452 719,513 938,414 758,519 1014,391 742,358 1058,500 380,560 652,330 801,575 1092,434 921,476 725,597 954,501 577,444 583,576 775,360 1037,389 645,442 1015,396 1069,469 945,442 1118,413 296,483 1000,537 708,644 789,530 985,640 715,552 710,481 597,608 1061,392 971,422 901,395 845,596 864,393 968,418 376,314 1117,428 1048,416 774,361 1142,411 693,672 1047,458 856,496 583,431 732,423 915,568 1022,463 295,321 1096,417 862,373 1143,405 1121,419 827,568 1107,430 922,395 305,495 919,452 291,355 1031,429 871,554 898,541 889,456 833,606 860,593 1047,463 369,546 928,581 876,599 995,660 361,546 947,441 811,598 303,310 930,508 862,452 365,530 815,368 1089,436 828,462 867,543 997,434 379,539 1099,398 956,515 875,601 1108,426 740,619 936,416 1145,415 968,671 848,406 895,587 1079,439 1014,546 937,394 298,476 1061,392 693,614 1090,429 1062,451 586,462 895,447 466,430 1106,423 878,577 994,430 466,421 468,550 900,446 1147,397 1068,437 718,564 885,549 468,422 1090,435 374,542 1091,441 735,606 692,615 1141,402 969,418 936,405 370,547 1097,428 378,538 922,501 866,398 966,661 954,642 983,640 444,510 458,415 866,395 1098,428 368,536 1046,460 880,503 765,607 859,414 779,357 757,491 1083,432 911,524 1080,444 987,518 788,361 922,475 296,308 813,565 906,565 1072,435 1055,437 936,399 986,519 1086,438 1076,445 301,313 1139,390 740,613 863,415 1039,392 980,573 722,487 1036,464 715,555 918,593 1050,442 1018,394 776,359 1120,406 379,317 792,530 991,669 381,540 472,438 1045,461 355,540 920,456 1101,430 394,368 973,628 913,568 965,664 1087,442 866,394 730,508 919,598 1157,382 733,611 943,399 713,562 905,593 525,459 1146,399 587,436 1095,434 855,389 909,433 941,448 985,638 925,479 700,440 762,351 744,297 1046,422 1078,442 997,449 1148,411 582,442 1147,392 949,402 364,546 298,483 323,523 1107,428 927,429 366,542 468,433 948,443 882,549 991,677 782,392 756,458 866,393 831,464 694,592 466,425 1099,425 302,313 841,374 712,581 581,433 924,598 968,429 282,448 928,548 989,423 1051,457 930,430 1054,491 883,505 888,530 984,640 965,525 973,631 887,509 653,548 1002,559 922,459 773,362 823,461 977,621 901,471 1064,451 932,544 975,627 1000,538 1119,408 1154,386 1145,414 991,669 911,358 1093,444 1143,406 1089,446 856,372 1080,442 1128,412 707,676 922,542 295,323 361,541 695,673 1101,424 668,627 380,554 425,399 892,444 864,418 315,445 980,526 996,509 762,502 857,424 885,598 1147,416 937,543 901,447 1085,434 885,549 931,384 1105,431 1108,402 1086,430 308,466 956,532 1091,434 1064,438 899,469 707,518 384,565 867,424 972,424 1077,445 635,549 423,564 1137,397 831,467 668,429 1166,371 271,396 1114,418 963,419 832,525 864,409 394,548 888,528 1090,442 989,673 1108,421 847,434 513,415 905,393 754,456 813,599 924,475 1144,404 703,543 328,522 1048,463 469,423 902,420 442,323 1124,382 883,506 689,614 867,350 299,476 892,568 644,307 1114,426 824,609 1124,394 1110,428 582,447 872,424 919,545 888,455 449,480 588,459 1098,414 1087,428 840,391 837,362 725,569 1117,410 898,535 513,416 304,488 1098,427 957,468 1129,403 889,550 796,330 296,314 483,572 958,647 478,318 1039,471 722,552 900,548 394,382 864,411 675,308 873,415 734,509 738,598 1080,431 714,558 1041,515 908,456 290,477 1096,429 847,405 949,446 714,557 848,399 1102,429 1109,422 694,427 1017,396 952,534 829,571 803,411 1077,391 714,312 1093,430 787,606 967,662 864,404 901,429 889,444 894,445 1035,390 839,432 290,467 940,401 1145,399 1098,429 302,487 972,606 934,596 965,639 295,317 974,626 1024,472 778,303 1109,395 291,325 941,397 711,565 993,670 1040,461 973,427 1097,414 813,552 891,492 895,444 751,377 1032,537 708,645 757,459 799,590 966,602 812,600 1140,415 842,453 977,542 817,584 1054,490 986,517 367,531 751,617 797,565 975,631 828,605 1106,423 1097,430 779,603 289,465 841,586 975,518 1079,445 948,439 750,610 866,417 987,670 286,361 504,548 1071,440 994,661 976,630 585,442 944,590 1104,430 659,531 961,621 881,531 989,680 785,506 1092,431 1040,460 386,559 1145,407 1043,483 928,545 383,556 1102,425 911,487 717,565 1088,429 924,459 979,623 928,493 896,442 862,401 1040,464 820,504 819,511 888,508 923,423 708,561 829,522 298,480 962,639 945,522 1144,406 1047,460 757,460 829,466 459,343 1053,452 1143,397 853,421 976,453 1074,448 1081,441 777,354 472,437 1002,445 472,436 293,296 867,397 991,671 1097,383 294,447 833,524 943,396 303,487 808,533 303,485 778,490 924,544 878,448 875,420 325,522 884,506 860,525 880,434 844,603 935,416 1049,451 1055,401 1095,430 830,605 398,384 1051,431 994,670 315,477 847,405 1050,444 941,483 371,542 884,541 616,530 905,406 884,551 712,582 1145,398 1127,421 1075,446 1103,423 350,338 743,393 794,459 1099,431 1068,418 1072,429 794,529 1088,453 922,548 1081,445 491,580 1046,395 979,627 875,496 956,393 864,427 713,558 530,497 939,414 1147,408 972,588 626,577 970,603 1101,426 1014,510 725,558 326,486 362,541 938,403 839,450 359,541 920,458 1061,393 1093,373 788,559 302,321 992,679 994,408 1156,417 693,427 407,561 780,360 928,556 938,584 965,664 1064,436 819,614 990,652 821,464 888,522 739,384 872,477 897,445 873,415 1044,465 705,557 268,429 863,393 996,505 887,598 829,467 372,548 966,641 382,565 383,560 1016,505 874,597 942,593 582,441 874,334 1128,420 940,542 956,393 1088,452 995,664 1056,439 965,421 1070,447 1208,363 874,564 1058,452 1083,431 377,532 1065,423 1084,440 971,428 1039,487 272,360 299,316 791,586 906,441 351,538 376,542 1055,459 556,526 1118,392 383,562 854,464 558,524 735,618 1014,392 957,651 1137,396 874,415 365,544 792,402 1132,404 297,325 940,359 749,616 936,426 1053,456 838,528 1092,441 1157,381 283,376 464,550 1068,448 1166,372 1049,440 537,436 1097,419 736,606 902,440 708,517 989,487 925,444 829,461 830,462 1096,426 1087,453 956,468 797,329 1156,416 764,604 912,457 973,431 957,615 734,423 492,585 693,620 1055,455 381,554 396,384 373,543 956,440 1090,437 1039,528 976,608 957,526 393,342 708,605 1056,437 470,423 1100,421 964,445 1075,441 1111,426 924,451 338,456 724,560 1022,475 973,422 868,574 1013,507 690,616 737,611 582,590 1108,423 924,548 1030,538 959,620 703,606 873,494 988,426 887,529 978,524 1139,408 1098,418 1101,398 970,515 914,452 327,526 1099,398 1099,425 948,574 1093,415 855,499 812,544 930,514 732,507 1158,381 953,642 1157,381 833,464 737,611 920,459 1074,433 963,443 294,477 1089,424 953,642 919,457 815,599 959,438 730,542 792,530 825,466 866,365 1107,422 981,442 935,421 636,549 944,441 1105,397 870,462 922,474 741,617 298,479 895,445 862,421 1087,439 820,310 779,604 1104,427 751,619 1111,418 884,477 1096,430 584,580 1144,403 1138,394 1114,427 741,561 299,303 621,365 1039,439 572,382 1155,413 1120,409 1035,475 928,417 919,474 1076,445 997,434 995,671 973,634 738,621 893,568 827,468 1013,390 1095,441 691,619 950,446 755,458 862,419 684,505 1077,446 988,564 905,565 972,603 1082,439 776,357 382,559 1144,415 744,612 295,355 380,544 867,441 1049,409 1107,423 855,493 468,414 981,424 1050,449 1079,451 898,445 893,417 291,350 943,410 956,524 302,325 1143,406 1017,448 1003,436 318,482 963,552 704,606 1096,430 952,640 826,462 753,565 1078,440 861,410 956,645 950,400 580,450 933,443 932,575 691,617 1042,457 774,361 1091,448 834,556 394,384 1049,454 973,423 934,517 378,542 689,633 1052,458 857,550 762,606 1057,442 583,443 970,601 974,631 917,466 1080,445 768,529 971,455 819,549 1099,415 607,305 347,505 717,561 781,367 1001,429 399,384 1086,438 972,425 981,622 1096,430 1142,403 1057,493 706,603 725,597 382,554 826,466 912,525 924,405 276,461 461,502 353,517 879,548 916,521 308,465 1078,447 1088,428 950,443 1052,455 822,465 1108,423 1097,430 930,386 940,398 766,413 826,465 363,545 1117,418 985,639 359,538 1139,409 280,323 807,566 897,448 1087,428 928,447 1106,403 993,675 859,429 979,520 1035,422 1039,488 981,540 834,499 1063,422 1148,390 1142,402 372,545 789,587 887,551 351,521 978,574 979,648 980,525 938,562 922,454 968,418 995,559 1082,444 861,420 1038,484 982,523 806,363 1054,401 1136,410 366,541 881,512 298,309 720,554 1015,468 965,429 952,468 694,614 918,429 927,447 870,417 764,607 1139,412 896,449 1070,419 964,551 1137,393 947,399 747,611 974,513 1080,446 1082,440 955,534 691,660 981,521 976,520 1077,443 833,610 1053,454 614,583 956,522 921,457 303,488 329,526 941,400 307,468 894,414 863,392 992,506 690,617 866,367 1090,424 473,440 313,466 956,631 967,422 993,440 973,417 1145,410 1137,415 872,415 1144,397 690,352 1013,396 1120,420 866,398 1041,463 979,544 720,328 1045,491 864,397 985,441 957,471 906,563 768,527 1097,431 795,466 914,555 908,439 1031,440 678,586 922,562 992,455 980,521 1002,437 963,418 866,389 674,649 828,606 1060,392 1118,407 1113,428 917,550 864,411 961,424 820,401 1089,432 966,663 804,503 828,465 974,422 863,398 1146,406 708,644 779,363 1105,430 991,543 303,482 351,520 1023,416 621,480 1142,400 1090,441 869,410 1097,416 520,582 923,549 803,544 1086,448 999,510 288,351 453,459 776,488 1052,491 1105,365 701,605 1156,415 730,421 991,675 1082,392 298,480 830,610 966,422 424,523 1097,414 1015,523 994,424 957,626 1084,453 1119,414 738,607 956,650 990,654 906,393 1038,480 636,521 1041,463 858,595 1094,417 940,399 1097,424 291,349 378,533 1056,492 1040,452 1104,419 371,541 866,412 293,354 1101,425 706,601 714,564 921,397 1003,437 700,673 955,514 1145,407 858,395 1022,437 1101,397 892,388 1089,373 1095,428 460,534 972,420 989,420 892,448 778,488 805,543 295,324 1001,435 580,443 1032,477 798,538 1144,400 1014,437 374,537 466,333 301,318 472,560 294,482 1140,406 1049,440 970,606 573,420 823,415 654,504 829,589 832,522 1078,444 834,493 777,608 1049,441 904,364 959,424 719,383 1094,446 1120,395 719,329 350,509 771,408 1028,468 720,384 736,458 1087,390 966,585 1111,427 954,638 960,617 907,522 1105,428 1093,433 824,467 1049,462 1046,391 1048,440 1144,404 374,540 819,452 781,532 958,530 743,612 915,516 828,605 1081,442 692,616 777,407 1096,431 1075,393 861,411 904,394 769,566 1018,509 889,492 1035,390 579,443 1138,415 980,639 901,472 869,482 879,480 1086,427 1090,429 1108,423 1003,427 932,537 580,446 1055,490 770,418 1108,428 1063,390 864,410 757,454 899,549 1049,440 826,610 396,545 792,434 928,538 858,408 1077,451 1138,415 377,543 904,396 971,423 853,453 1000,509 403,325 1055,455 482,573 853,537 827,465 873,415 779,362 380,534 780,362 1105,423 716,560 467,424 924,447 862,355 752,456 818,348 1065,422 792,528 1096,430 285,378 730,425 1028,524 929,507 692,615 313,475 799,600 383,562 993,670 924,540 707,479 1061,391 921,452 794,577 1048,463 295,318 694,672 893,390 591,551 316,468 694,671 953,390 384,561 1015,398 300,481 346,505 422,562 945,404 983,542 708,550 367,543 865,421 862,422 826,460 345,503 1119,413 903,474 414,507 762,503 1096,411 1085,440 837,446 365,534 1007,441 907,587 582,449 1087,431 1049,408 886,530 1016,394 825,463 1110,422 1113,422 308,465 864,412 857,416 972,587 308,469 1078,449 1096,428 833,521 738,471 470,430 300,485 434,328 742,388 1139,410 713,580 741,513 905,472 897,412 1071,437 746,607 400,378 468,429 1056,494 959,501 930,509 774,416 905,412 935,406 1046,421 1163,378 991,427 855,370 561,395 339,534 926,543 1112,429 1126,422 1114,411 1159,414 586,424 992,663 835,603 1074,437 980,539 1095,423 365,538 763,352 1015,397 921,459 971,471 1139,409 910,447 472,430 713,582 1025,509 980,624 817,569 938,562 902,474 1119,427 847,406 873,494 566,515 672,588 709,515 1039,480 524,347 524,459 820,511 945,451 869,529 1086,439 780,363 494,425 952,520 965,659 858,550 966,663 587,459 974,635 557,578 1054,516 751,455 295,321 925,452 584,446 471,438 772,412 900,472 955,514 1083,438 1110,416 1029,447 975,609 1085,435 940,582 963,639 946,395 561,396 1115,428 809,458 855,483 1146,404 1139,413 938,429 717,567 968,628 290,355 701,608 1039,529 970,601 825,460 393,545 1060,492 287,361 810,588 698,666 927,362 1048,437 942,403 1070,469 1095,428 792,339 873,416 1060,399 942,439 936,426 836,430 1085,438 1092,437 1140,417 1044,457 976,546 984,518 554,569 1191,353 990,653 778,489 865,391 807,415 1141,398 971,600 1102,425 339,456 691,532 756,459 992,427 946,528 765,592 692,578 641,474 1079,442 898,376 967,599 299,320 416,504 471,437 1048,461 843,493 1143,408 830,522 925,445 817,595 921,474 713,559 469,552 968,633 734,506 961,427 305,488 983,520 466,385 945,402 952,644 806,480 295,323 823,417 632,573 300,308 907,439 904,394 1098,426 942,594 1088,429 718,548 1145,406 894,445 907,506 966,425 382,562 541,569 805,463 859,439 926,574 595,568 896,415 1089,428 736,458 865,393 1072,430 762,506 466,546 1041,450 377,554 1086,432 972,426 996,559 827,568 303,463 586,436 923,461 791,376 1074,442 611,375 977,576 734,420 701,598 712,644 1119,428 653,330 972,428 927,454 921,399 724,549 884,538 978,574 832,608 925,456 320,480 844,585 1038,465 951,547 342,495 985,639 1084,423 864,410 881,532 776,354 1092,442 798,376 925,479 884,507 1036,485 943,465 912,423 1013,392 348,537 862,366 801,405 845,599 1107,422 730,421 1045,461 957,613 984,571 1108,401 854,374 895,434 1108,424 1096,431 1016,547 708,518 1142,403 363,541 299,316 1068,419 1046,460 731,421 1095,429 602,424 1101,429 860,411 1096,427 911,547 859,409 1105,429 1071,457 1026,439 413,430 295,487 966,699 760,457 820,463 1147,407 299,480 1071,423 771,424 958,565 874,423 1048,464 1082,442 429,532 738,604 977,621 396,546 817,491 864,413 1136,390 693,665 914,566 1109,429 295,472 1051,461 940,416 945,443 1145,401 745,460 670,567 487,571 997,559 966,420 988,488 1095,435 1026,456 866,387 289,317 1020,509 982,515 930,447 1010,485 823,434 874,418 781,533 719,560 1147,406 1145,403 804,410 945,405 1035,448 1075,442 302,318 408,561 442,490 936,565 296,352 887,529 865,407 703,598 744,528 866,415 861,408 953,509 901,512 291,324 899,547 753,567 819,470 307,464 994,663 300,481 938,404 582,402 875,499 1036,409 877,415 864,417 924,432 315,326 905,391 1105,419 1073,433 1016,510 847,400 627,458 1120,417 968,671 955,640 955,643 1083,438 1115,413 936,565 930,512 827,524 937,413 805,416 1044,457 1111,399 1119,371 1109,429 1097,423 540,558 1078,403 969,421 853,536 658,583 458,533 851,514 995,662 1008,425 1159,374 347,341 968,600 825,465 1097,414 364,546 1075,441 1015,444 860,406 873,475 725,401 297,321 1139,401 641,469 1113,413 947,405 926,453 967,422 1098,428 997,486 998,507 1033,509 940,403 1026,456 1145,394 712,519 1050,443 980,542 828,600 675,476 811,597 1137,413 1116,419 962,424 1182,363 978,574 1097,430 1086,452 581,443 860,406 472,562 1041,460 578,443 886,506 623,567 720,429 959,641 377,548 1078,445 971,423 965,424 718,383 1030,451 846,508 293,301 1064,376 1054,450 941,400 762,354 872,468 1078,446 901,441 781,561 992,432 946,406 895,408 985,422 927,415 942,404 1065,437 882,505 1050,463 1119,419 863,392 945,397 460,394 863,597 1134,405 1086,429 911,536 574,577 1070,446 995,671 998,489 1058,496 973,425 1095,431 733,606 969,419 301,482 741,395 1120,410 974,513 691,532 987,679 1086,437 861,388 956,653 975,667 1088,433 733,386 830,525 987,422 973,425 825,461 1144,403 736,611 838,363 637,600 1040,484 1076,443 1074,443 583,450 873,417 1014,524 1046,456 902,396 1097,432 586,424 1054,490 1090,425 759,511 864,407 1137,401 864,597 964,525 847,398 1064,407 1141,409 923,458 1106,424 943,410 360,538 1071,446 858,373 1075,445 877,601 339,452 994,678 773,468 868,417 325,334 971,419 1003,440 702,518 797,428 482,349 297,486 326,332 978,519 1147,402 841,392 587,462 1000,431 998,437 1078,452 753,460 835,544 884,503 911,524 486,570 873,555 318,480 369,540 909,525 381,554 1079,422 307,496 595,567 768,565 283,373 741,610 695,626 1082,438 996,437 833,522 974,513 1096,428 470,434 1112,415 582,435 1048,458 1060,392 922,549 715,519 1063,438 983,509 1083,445 990,651 307,496 760,581 956,526 1018,511 363,541 985,571 830,611 1038,460 882,545 371,534 1099,423 735,539 953,468 720,561 786,385 566,513 867,594 868,380 933,510 1027,481 362,541 318,481 1097,414 635,522 1000,430 846,601 395,384 668,337 965,665 1044,457 775,552 297,349 834,603 999,435 365,543 1103,421 1118,406 1071,435 954,631 784,561 775,420 529,495 1095,433 822,556 349,538 943,528 1138,411 470,434 916,612 1034,447 967,663 327,488 999,438 1132,402 702,588 800,602 885,339 912,419 1032,429 792,460 953,515 928,444 734,422 1052,463 469,414 736,599 870,413 1109,420 946,402 1094,432 1059,441 901,453 494,582 793,529 717,558 351,538 460,360 771,419 1141,393 329,320 936,413 778,356 322,327 299,318 631,574 655,348 979,488 1000,556 1148,415 1138,384 936,394 745,605 900,470 424,542 885,551 363,544 1076,444 362,538 1103,429 1096,426 370,534 1168,367 824,458 864,410 972,424 940,402 955,429 999,503 819,464 851,515 957,527 722,477 847,400 1138,394 708,482 1070,416 932,540 582,483 280,340 883,458 1090,435 312,479 707,674 1159,375 939,417 860,593 294,435 866,388 651,437 586,462 828,567 1058,493 376,546 943,539 1027,530 986,520 1046,457 1058,441 1100,399 832,466 928,455 346,382 675,635 1053,456 981,519 902,604 359,542 821,466 742,571 839,395 945,400 925,548 1101,404 810,359 1097,431 922,459 1095,428 1051,451 1039,482 868,418 954,643 1155,414 990,675 1148,408 575,519 837,444 974,635 586,444 849,434 1014,393 924,544 467,555 863,414 840,391 902,473 935,404 1016,507 463,550 1015,392 978,479 941,398 307,486 708,521 619,395 1109,369 971,454 735,606 1106,432 306,496 310,471 832,436 825,347 701,664 958,612 979,631 928,448 1071,451 1069,424 473,430 987,677 1085,375 978,629 1044,467 1075,443 1116,414 612,535 707,642 963,418 914,357 296,313 1077,442 881,546 771,413 827,593 793,532 885,549 329,321 1006,499 465,546 671,577 580,442 296,484 865,388 1100,428 1146,398 1046,524 363,538 957,493 1040,515 369,547 299,475 861,441 885,550 1040,457 897,366 953,644 1031,537 943,379 993,431 714,559 904,392 1031,519 848,445 932,387 894,415 902,394 372,539 469,431 730,506 1127,384 1103,431 836,361 791,376 705,605 1004,454 731,505 753,455 371,545 863,418 556,525 900,470 1065,408 1069,420 1000,435 864,402 843,394 393,544 735,504 949,444 898,541 1102,398 921,569 907,502 533,559 873,450 863,367 1119,407 1140,367 294,433 1060,452 979,524 799,529 1119,408 930,400 708,517 1133,404 711,559 893,443 1039,482 1037,390 740,609 1131,410 468,423 1136,393 466,424 1044,462 969,417 983,541 1117,408 904,473 731,421 968,549 390,545 721,428 589,470 853,409 1096,431 1043,460 652,492 1099,433 915,545 932,508 1001,441 810,379 1087,432 1183,364 1051,454 1148,391 996,438 915,556 844,601 1066,401 1011,496 1010,486 989,414 311,475 670,352 1014,509 380,556 1146,403 688,615 373,546 772,360 292,352 926,446 921,398 755,456 1075,449 999,488 346,504 1090,439 923,455 1098,430 994,674 956,649 575,371 792,401 429,307 344,339 1116,426 379,317 1059,493 926,549 301,317 894,569 585,447 893,413 952,543 740,616 764,550 967,540 766,591 828,553 742,485 830,608 466,436 997,528 948,401 991,542 895,448 945,449 1074,444 895,447 709,514 953,448 916,606 921,454 1088,433 980,525 920,456 973,510 1049,438 775,523 1042,439 982,435 867,438 369,547 997,435 733,617 943,441 691,587 984,449 869,529 1043,414 1087,425 716,561 1094,439 415,503 710,482 867,412 712,550 1094,429 843,594 1105,432 1070,434 899,394 760,505 371,542 426,401 934,510 1096,416 1009,472 304,487 866,388 1091,435 698,669 872,474 992,672 1115,413 703,590 1129,407 299,312 659,556 715,565 830,412 812,491 283,363 959,641 463,557 1092,432 996,675 931,552 889,446 313,464 468,432 701,606 984,520 940,543 712,304 1140,404 996,449 1033,509 707,676 939,411 484,570 338,500 930,433 981,640 342,536 472,548 998,559 854,465 1111,429 945,399 942,396 819,614 580,445 1064,407 1045,457 550,363 1145,409 968,671 1089,435 468,425 268,429 290,472 995,663 746,458 985,424 925,558 823,419 970,471 412,504 1098,426 1089,431 925,539 734,422 1134,406 965,661 928,581 777,361 1136,390 1094,427 893,570 963,551 949,443 705,591 933,385 888,460 707,591 1059,494 864,393 373,548 863,397 415,505 375,540 1131,407 976,415 828,609 867,424 1028,500 472,521 1128,417 1092,443 1139,411 709,517 995,558 709,481 961,524 1090,431 939,604 612,564 300,322 939,418 998,535 919,396 918,454 816,600 582,450 968,422 987,518 974,415 1043,439 928,543 1079,402 340,534 902,605 849,423 1090,439 859,450 588,435 778,369 891,511 771,409 886,510 944,429 1029,390 965,641 772,362 1168,333 978,619 413,504 301,486 290,320 369,546 463,552 991,676 949,402 1137,407 1076,445 745,615 1051,448 977,472 955,649 997,458 290,467 940,403 377,542 954,649 861,410 1095,429 1054,496 840,391 1054,461 1091,426 1015,437 1049,462 797,535 921,459 1119,406 892,444 930,546 961,657 525,346 714,557 379,544 463,547 1091,434 908,427 1128,418 841,393 715,560 866,594 926,599 1066,422 1082,446 720,429 575,445 832,524 462,553 915,529 759,520 860,598 299,476 483,570 939,400 874,452 1049,464 1093,430 916,544 993,506 469,433 895,444 558,578 288,350 1010,408 820,363 950,445 1016,393 381,555 301,477 765,607 708,461 903,396 830,434 804,353 1072,438 342,493 1018,450 866,391 1018,426 613,535 1024,434 715,559 888,548 983,517 954,429 382,561 1101,403 909,468 1016,513 872,499 980,521 1010,425 441,490 293,470 712,562 1108,407 1045,524 1113,427 1113,419 1053,455 804,409 829,469 882,552 584,449 559,577 874,414 553,523 1025,420 775,357 1126,419 971,468 558,577 1044,462 915,445 1144,401 298,477 1097,411 864,369 1109,369 992,666 1092,440 965,426 708,601 993,672 1078,446 699,422 876,422 1065,420 1073,442 915,446 733,608 288,404 1040,453 1022,474 1111,417 691,617 978,620 837,597 558,521 833,524 883,436 472,440 770,565 866,422 995,413 1054,489 761,458 867,399 756,491 346,513 310,464 1038,481 781,363 898,540 1000,500 365,541 464,549 707,513 954,643 1083,387 750,615 1112,417 867,379 979,542 291,317 1117,415 797,566 1098,423 985,423 918,498 1102,433 381,563 933,507 869,412 1043,490 880,497 923,405 1096,439 979,696 999,408 1075,440 771,418 311,420 1105,428 1046,457 757,409 968,548 831,522 975,446 994,678 1039,471 973,570 926,549 1080,443 937,394 1056,415 866,400 871,555 860,419 298,315 881,435 1067,448 1086,429 1087,430 977,520 288,358 586,461 1015,468 1075,444 1002,436 992,433 288,405 976,542 708,517 1009,407 926,545 1142,390 1138,413 1059,494 829,607 863,397 997,490 911,424 757,541 939,400 867,412 910,524 967,423 929,451 852,428 992,423 797,602 1093,435 673,649 1092,421 1115,412 903,407 404,520 957,442 791,528 467,433 863,423 993,428 1094,422 828,569 976,622 969,429 1095,441 856,415 1145,399 1091,425 295,315 867,400 943,408 586,463 465,552 882,436 921,470 1069,447 861,595 1079,441 963,444 1085,436 1112,383 931,457 832,464 346,336 885,552 373,545 341,453 1036,465 831,523 1080,442 1014,393 1054,460 896,398 1100,419 1151,398 885,545 855,372 863,410 1146,415 995,674 919,397 339,493 661,505 1055,452 1035,484 873,415 1013,390 466,430 936,393 366,538 1017,515 943,444 366,546 376,320 702,604 863,368 812,599 924,456 965,526 1084,438 376,541 944,398 286,407 379,535 841,470 963,640 999,508 928,444 778,366 911,425 865,408 996,561 1000,433 1056,524 1139,407 944,442 1035,448 998,436 1005,527 711,480 1107,431 1060,393 755,456 967,428 1139,400 888,531 764,550 581,445 556,523 290,352 1102,431 872,464 813,551 866,415 998,429 759,328 1117,407 868,399 954,646 1109,368 859,407 976,444 1039,469 1139,408 1043,461 970,614 937,393 868,412 1093,432 780,360 1087,440 902,468 970,548 1098,427 938,565 468,555 927,537 956,501 933,521 626,577 715,551 1112,417 466,550 352,518 960,499 1099,424 1065,377 1146,406 1148,389 379,542 757,460 996,512 799,600 384,559 912,537 590,471 733,507 891,511 990,671 1094,432 1006,498 910,424 633,609 830,569 593,354 1090,428 828,571 884,506 997,408 869,549 1040,458 1057,453 1034,391 925,599 931,510 292,319 781,362 937,559 1073,428 837,374 1112,422 714,554 1114,422 307,470 1117,416 1073,432 707,600 992,429 870,410 1113,383 955,531 299,312 703,472 1042,411 732,506 1110,429 705,589 906,392 747,459 1076,390 612,563 1096,437 558,524 740,613 1099,426 968,417 305,445 379,541 1048,461 758,456 839,530 861,391 1064,422 781,411 827,437 1035,390 583,444 1146,400 310,456 770,565 963,657 1103,432 886,549 1102,398 1144,408 366,544 1014,527 937,414 895,525 1130,405 878,598 1086,429 968,469 305,488 1130,404 999,510 837,430 371,550 295,469 1087,453 831,527 1094,431 414,505 555,570 1018,511 1076,447 1146,415 709,600 741,408 1065,438 1096,428 737,349 1058,449 742,612 299,322 866,410 742,570 924,442 1153,417 1093,437 691,617 1011,520 838,431 301,488 298,471 810,379 1086,454 1018,514 767,504 876,415 893,508 953,456 861,462 1104,428 715,311 995,661 926,548 1075,442 1119,421 890,510 1045,456 976,479 864,399 953,636 1056,497 973,629 977,544 934,407 887,598 472,520 696,666 761,586 467,437 712,563 1099,396 1048,459 873,417 1048,395 1105,429 1053,457 874,415 843,393 881,430 370,542 1070,456 1031,537 875,418 1016,523 1158,381 948,401 993,513 300,313 1158,380 926,567 1050,435 985,517 409,561 279,419 886,552 287,351 293,352 698,673 864,598 361,541 303,486 699,509 291,324 867,410 884,509 1001,509 1058,441 1113,411 999,479 1113,428 380,561 998,557 1097,425 754,460 987,635 973,424 761,505 962,638 1093,437 966,530 367,536 1094,431 1144,406 1014,545 744,460 856,421 922,397 769,418 955,650 303,447 725,401 935,561 955,631 856,590 1037,479 997,433 1140,411 921,546 813,498 1091,393 956,652 1059,492 1046,459 984,442 441,457 1110,420 1154,386 797,604 1102,426 295,489 998,562 1090,442 348,538 1185,370 1148,393 1104,429 974,428 827,566 855,372 855,395 1055,459 894,443 304,448 1017,527 970,420 855,490 717,565 863,414 1099,427 929,553 919,457 1044,459 1064,377 1142,403 995,408 862,393 1000,435 952,443 601,360 694,618 507,377 1142,400 293,354 929,537 952,445 304,478 1077,391 897,362 709,518 338,447 706,556 974,631 1163,378 911,524 993,507 1047,454 343,395 1086,435 904,404 1144,417 295,323 467,383 1139,418 879,479 1058,412 990,412 1115,422 670,567 604,592 995,663 466,550 991,454 1057,455 1097,425 559,456 946,401 299,312 963,526 1044,458 1055,455 582,451 905,553 374,547 975,627 955,643 581,432 992,423 944,407 307,455 927,447 1056,443 1039,452 1099,429 739,610 1098,427 962,551 1145,407 830,467 672,639 983,520 298,316 993,436 970,429 924,586 996,560 903,604 1146,396 925,446 820,465 885,505 433,328 991,671 713,575 376,544 1084,453 339,450 860,441 1074,418 853,568 875,418 1090,438 1004,439 825,355 907,481 338,494 970,425 1028,464 804,409 865,409 833,461 740,612 1120,413 967,662 301,483 874,599 1143,405 366,529 290,477 1043,459 801,471 1036,389 1139,393 369,542 957,526 972,424 350,538 730,506 827,458 482,572 955,652 895,451 922,454 733,422 968,671"/>
</svg>
</div>
<!-- v scrollbar -->
<div class="a dither" style="left:1262px;top:81px;width:16px;height:847px"></div>
<div class="a raised" style="left:1262px;top:81px;width:16px;height:16px"><div class="arr" style="left:3px;top:1px;border-bottom-color:#000"></div></div>
<div class="a raised" style="left:1262px;top:190px;width:16px;height:721px"></div>
<div class="a raised" style="left:1262px;top:911px;width:16px;height:16px"><div class="arr" style="left:3px;top:5px;border-top-color:#000"></div></div>
<div class="a" style="left:1278px;top:81px;width:2px;height:863px;background:#d4d0c8"></div>
<!-- h scrollbar row -->
<div class="a" style="left:198px;top:928px;width:1082px;height:16px;background:#d4d0c8"></div>
<div class="a dither" style="left:286px;top:928px;width:961px;height:16px"></div>
<div class="a raised" style="left:270px;top:928px;width:16px;height:16px"><div class="arr" style="left:1px;top:3px;border-right-color:#000"></div></div>
<div class="a raised" style="left:1247px;top:928px;width:16px;height:16px"><div class="arr" style="left:6px;top:3px;border-left-color:#000"></div></div>
<div class="a raised" style="left:717px;top:928px;width:497px;height:16px"></div>
<div class="a dither" style="left:198px;top:928px;width:16px;height:16px;border:1px solid;border-color:#808080 #fff #fff #808080"></div>
<svg class="a" style="left:201px;top:930px" width="12" height="12"><circle cx="6" cy="6" r="4.5" fill="#1428b4"/><path d="M3 4L6 2L8 4L7 7L4 7Z" fill="#28b428"/><circle cx="4.5" cy="4" r="1" fill="#fff"/></svg>
<svg class="a" style="left:217px;top:930px" width="10" height="11"><path d="M1.5 .5H6L8.5 3V10.5H1.5Z" fill="#fff" stroke="#000"/><path d="M6 .5V3H8.5" fill="none" stroke="#000"/></svg>
<div class="sep" style="left:232px;top:930px;height:12px"></div>
<svg class="a" style="left:241px;top:930px" width="11" height="11"><path d="M1.5 5A3.8 3.8 0 0 1 8.5 3.5M9.5 6A3.8 3.8 0 0 1 2.5 7.5" fill="none" stroke="#000" stroke-width="1.2"/><path d="M9.5 1V4.5H6Z M1.5 10V6.5H5Z" fill="#000"/></svg>
<div class="a" style="left:260px;top:932px;width:2px;height:7px;background:#000"></div>
<div class="a" style="left:264px;top:932px;width:2px;height:7px;background:#000"></div>
<!-- TOOLS PALETTE -->
<div class="a raised" style="left:1221px;top:185px;width:62px;height:268px"></div>
<div class="a" style="left:1225px;top:189px;width:55px;height:15px;background:linear-gradient(90deg,#0a246a,#a6caf0 140%)"></div>
<div class="t" style="left:1226px;top:190px;font-weight:bold;color:#fff;font-size:12px">Tools</div>
<div class="a raised" style="left:1269px;top:191px;width:11px;height:11px"><svg class="a" style="left:2px;top:2px" width="7" height="7"><path d="M0 0L6 6M6 0L0 6" stroke="#000" stroke-width="1.3"/></svg></div>
<div class="a dither" style="left:1230px;top:207px;width:24px;height:23px;border:1px solid;border-color:#808080 #fff #fff #808080"></div>
<svg class="a" style="left:1222px;top:204px" width="58" height="248">
<!-- coordinates relative: x-1222, y-204 -->
<!-- zoom in -->
<path d="M23 17L28 22" stroke="#e01020" stroke-width="3"/><path d="M22 16L24 18" stroke="#000" stroke-width="2"/>
<circle cx="18.500" cy="13" r="6" fill="#e8e8e8" stroke="#000" stroke-width="1.400"/><circle cx="18.500" cy="13" r="4.300" fill="none" stroke="#808080" stroke-width=".8"/><path d="M15.500 13H21.500M18.500 10V16" stroke="#000" stroke-width="1.800"/>
<!-- zoom out -->
<path d="M47 17L52 22" stroke="#e01020" stroke-width="3"/><path d="M46 16L48 18" stroke="#000" stroke-width="2"/>
<circle cx="42.500" cy="13" r="6" fill="#e8e8e8" stroke="#000" stroke-width="1.400"/><circle cx="42.500" cy="13" r="4.300" fill="none" stroke="#808080" stroke-width=".8"/><path d="M39.500 13H45.500" stroke="#808080" stroke-width="1.800"/>
<!-- fixed zoom in -->
<g fill="#000" stroke="#000" stroke-width="1.200">
<path d="M14 35L18 39M18 36V39H15" fill="none"/><path d="M26 35L22 39M22 36V39H25" fill="none"/><path d="M14 47L18 43M18 46V43H15" fill="none"/><path d="M26 47L22 43M22 46V43H25" fill="none"/>
<path d="M15.500 36.500L17.500 38.500M24.500 36.500L22.500 38.500M15.500 45.500L17.500 43.500M24.500 45.500L22.500 43.500" stroke-width="2"/>
<!-- fixed zoom out -->
<path d="M38 35L42 39M38 38V35H41" fill="none"/><path d="M50 35L46 39M50 38V35H47" fill="none"/><path d="M38 47L42 43M38 44V47H41" fill="none"/><path d="M50 47L46 43M50 44V47H47" fill="none"/>
<path d="M39 36L40.500 37.500M49 36L47.500 37.500M39 46L40.500 44.500M49 46L47.500 44.500" stroke-width="2"/>
</g>
<!-- pan hand -->
<path d="M14 66Q11 63 13 62Q15 62 16 64V60Q17 58 18.500 60V59Q20 57 21 59V60Q22.500 58.500 23.500 60.500V62Q25 61 25.500 63V68Q25 72 23 74H17Q15 70 14 66Z" fill="#fff" stroke="#000" stroke-width="1.100"/><path d="M18.500 60V65M21 60V65M23.500 62V66" stroke="#000" stroke-width=".8"/>
<!-- globe -->
<circle cx="44" cy="67.500" r="7.500" fill="#1020e0" stroke="#000" stroke-width="1.200"/><path d="M40 63L44 61L49 62L50 66L47 69L48 72L45 73L43 69L40 68Z" fill="#108020"/><path d="M38 65L40 64L40 67Z" fill="#4080ff"/><path d="M40 72Q44 76 49 72" stroke="#000080" stroke-width="1.500" fill="none"/>
<!-- back / forward -->
<path d="M13 94L21 87V91H27V97H21V101Z" fill="#0020ff" stroke="#000" stroke-width=".8"/><path d="M14 96L21 102V98H27" fill="none" stroke="#404040" stroke-width="1"/>
<path d="M50 94L42 87V91H36V97H42V101Z" fill="#808080"/><path d="M36 98H42V102L50 95" fill="none" stroke="#fff" stroke-width="1"/>
<!-- select features -->
<rect x="21.500" y="113.500" width="8" height="8" fill="#00e0e8" stroke="#000"/><path d="M22 122L30 114" stroke="#fff"/><path d="M23 123.500H31V115" fill="none" stroke="#808080"/>
<path d="M15.500 116.500V127L18 125L20 129.500L22 128.500L20 124.500H23Z" fill="#fff" stroke="#000" stroke-width=".9"/>
<!-- clear selection (gray) -->
<rect x="39.500" y="116.500" width="8" height="8" fill="#d4d0c8" stroke="#808080"/><path d="M40 125L48 117" stroke="#808080"/><path d="M41 126.500H49.500V118" fill="none" stroke="#fff"/>
<!-- select elements arrow -->
<path d="M16.500 142V155L19.500 152L22 157.500L24 156.500L21.500 151H25.500Z" fill="#000"/>
<!-- identify -->
<circle cx="44" cy="149" r="7" fill="#000080"/><rect x="43" y="147" width="2.500" height="6" fill="#fff"/><rect x="42" y="147" width="2" height="1.200" fill="#fff"/><rect x="42" y="152" width="4.500" height="1.200" fill="#fff"/><circle cx="44.200" cy="144.300" r="1.400" fill="#fff"/>
<!-- binoculars -->
<path d="M14 183V176L16 170H18.500V173H20.500V170H23L25 176V183H20.500V178H18.500V183Z" fill="#000"/><rect x="15.500" y="178" width="1.500" height="3" fill="#fff"/><rect x="22" y="178" width="1.500" height="3" fill="#fff"/><path d="M16.500 170V168H18V170M21 170V168H22.500V170" stroke="#000" fill="none"/>
<!-- XY -->
<rect x="41.500" y="170.500" width="5" height="5" fill="#00d0ff" stroke="#0020ff" stroke-width="1.200"/><rect x="43.300" y="172.300" width="1.500" height="1.500" fill="#000080"/>
<text x="38" y="185" font-family="Liberation Sans,sans-serif" font-size="7.500" fill="#000" letter-spacing="1">XY</text>
<!-- measure -->
<path d="M13 199H26" stroke="#000" stroke-width="1.200"/><path d="M13 199L16 196.500V201.500ZM26 199L23 196.500V201.500Z" fill="#000"/><text x="17" y="198" font-family="Liberation Sans,sans-serif" font-size="8" fill="#000">?</text>
<rect x="13.500" y="203.500" width="13" height="4" fill="#fff" stroke="#000"/><path d="M16 204V206M18.500 204V206M21 204V206M23.500 204V206" stroke="#000" stroke-width=".8"/><path d="M14 209H28" stroke="#808080"/>
<!-- lightning gray -->
<path d="M46 192L40 200H43L39 207L48 198H45L49 192Z" fill="#808080"/><path d="M40 208L49 199" stroke="#fff" stroke-width=".8"/>
<!-- map tips gray -->
<path d="M16.500 221.500H27.500V231.500H19.500L14 235.500L16.500 231.500Z" fill="#d4d0c8" stroke="#808080"/><path d="M18.500 224.500H25.500M18.500 227H25.500" stroke="#808080"/><path d="M17 232.500H28.500V222.500" stroke="#fff" fill="none"/>
<!-- viewer window -->
<rect x="40.500" y="221.500" width="13" height="11" fill="#fff" stroke="#000"/><rect x="41" y="222" width="12" height="2.500" fill="#000080"/><path d="M46 232L51 237" stroke="#e01020" stroke-width="2.200"/><circle cx="43.500" cy="229.500" r="3.800" fill="#fff" stroke="#000" stroke-width="1.100"/><path d="M41.500 229.500H45.500M43.500 227.500V231.500" stroke="#000"/>
</svg>

<!-- DRAWING TOOLBAR -->
<div class="a" style="left:0;top:944px;width:1280px;height:1px;background:#808080"></div>
<div class="a" style="left:0;top:945px;width:1280px;height:1px;background:#fff"></div>
<div class="a" style="left:0;top:946px;width:742px;height:28px;border-right:1px solid #808080;border-bottom:1px solid #808080"></div>
<div class="a" style="left:2px;top:949px;width:2px;height:22px;border-left:1px solid #fff;border-right:1px solid #808080"></div>
<div class="a" style="left:0;top:974px;width:1280px;height:1px;background:#808080"></div>
<div class="a" style="left:0;top:975px;width:1280px;height:1px;background:#fff"></div>
<div class="t" style="left:11px;top:954px;letter-spacing:0.1px"><u>D</u>rawing</div>
<div class="arr" style="left:55px;top:958px;border-top-color:#000"></div>
<svg class="a" style="left:73px;top:950px" width="12" height="18"><path d="M1 1V14L4 11L6.5 16.5L8.5 15.5L6 10.5H10Z" fill="#000"/></svg>
<svg class="a" style="left:92px;top:950px" width="18" height="18"><path d="M14 5A7 7 0 1 0 15 12" fill="none" stroke="#909090" stroke-width="1.2"/><circle cx="9" cy="9" r="1.5" fill="none" stroke="#909090"/><path d="M12 12H16V16Z" fill="#909090"/></svg>
<svg class="a" style="left:117px;top:950px" width="18" height="18"><rect x="5.500" y="1.500" width="11" height="10" fill="none" stroke="#808080" stroke-dasharray="2 1"/><circle cx="6" cy="10" r="4" fill="#d4d0c8" stroke="#808080"/><path d="M4 10H8M6 8V12M9 13L12 16" stroke="#808080" stroke-width="1.2"/></svg>
<div class="sep" style="left:140px;top:949px;height:22px"></div>
<div class="a sunk1" style="left:144px;top:948px;width:24px;height:22px"></div>
<div class="a" style="left:150px;top:952px;width:13px;height:13px;background:#fff;border:1px solid #000"></div>
<div class="a sunk1" style="left:169px;top:948px;width:12px;height:22px"></div>
<div class="arr" style="left:171px;top:956px;border-top-color:#000"></div>
<div class="t" style="left:191px;top:949px;font-family:'Liberation Serif',serif;font-weight:bold;font-size:18px;line-height:20px">A</div>
<div class="arr" style="left:214px;top:956px;border-top-color:#000"></div>
<svg class="a" style="left:232px;top:950px" width="18" height="16"><path d="M3 3L9 5L16 2L13 12L2 13L5 8Z" fill="none" stroke="#808080" stroke-width="1.2"/><g fill="#808080"><rect x="1" y="1" width="3" height="3"/><rect x="14" y="0" width="3" height="3"/><rect x="12" y="11" width="3" height="3"/><rect x="0" y="12" width="3" height="3"/></g></svg>
<div class="sep" style="left:255px;top:949px;height:22px"></div>
<div class="a sunken" style="left:260px;top:948px;width:170px;height:20px;background:#fff"></div>
<div class="a" style="left:264px;top:951px;width:12px;height:14px;background:#c8dcf8;border:1px solid #6080c0"></div>
<div class="t" style="left:266px;top:951px;font-family:'Liberation Serif',serif;font-style:italic;font-weight:bold;font-size:13px;color:#1a6a1a;line-height:14px">o</div>
<div class="t" style="left:281px;top:952px;font-size:12px;letter-spacing:-0.2px">Arial</div>
<div class="a raised" style="left:412px;top:950px;width:16px;height:16px"><div class="arr" style="left:3px;top:5px;border-top-color:#000"></div></div>
<div class="a sunken" style="left:436px;top:948px;width:45px;height:20px;background:#fff"></div>
<div class="t" style="left:439px;top:952px;font-size:12px;letter-spacing:-0.4px">10</div>
<div class="a raised" style="left:463px;top:950px;width:16px;height:16px"><div class="arr" style="left:3px;top:5px;border-top-color:#000"></div></div>
<div class="t" style="left:494px;top:951px;font-family:'Liberation Serif',serif;font-weight:bold;font-size:14px;line-height:16px">B</div>
<div class="t" style="left:518px;top:951px;font-family:'Liberation Serif',serif;font-weight:bold;font-style:italic;font-size:14px;line-height:16px">I</div>
<div class="t" style="left:541px;top:951px;font-family:'Liberation Serif',serif;font-weight:bold;font-size:14px;line-height:16px;text-decoration:underline">U</div>
<div class="sep" style="left:560px;top:949px;height:22px"></div>
<div class="t" style="left:570px;top:948px;font-family:'Liberation Serif',serif;font-size:17px;line-height:18px">A</div>
<div class="a" style="left:568px;top:963px;width:18px;height:3px;background:#000"></div>
<div class="arr" style="left:592px;top:956px;border-top-color:#000"></div>
<svg class="a" style="left:611px;top:948px" width="20" height="15"><path d="M5 6L10 2L15 8L9 13Z" fill="#fff" stroke="#000"/><path d="M9 1V6" stroke="#000"/><path d="M14 6Q18 8 16 13Q13 9 14 6Z" fill="#0a2ab0"/></svg>
<div class="a" style="left:611px;top:963px;width:18px;height:3px;background:#ffffbf"></div>
<div class="arr" style="left:635px;top:956px;border-top-color:#000"></div>
<svg class="a" style="left:654px;top:948px" width="20" height="15"><path d="M5 12L9 8L16 2L18 4L11 10Z" fill="#1020a0" stroke="#000" stroke-width=".6"/><circle cx="17" cy="2.500" r="1.500" fill="#e8d800"/><path d="M2 13H8" stroke="#1020a0" stroke-width="2"/></svg>
<div class="a" style="left:654px;top:963px;width:18px;height:3px;background:#000"></div>
<div class="arr" style="left:678px;top:956px;border-top-color:#000"></div>
<div class="a" style="left:704px;top:953px;width:5px;height:5px;border-radius:3px;background:#0a14a0"></div>
<div class="a" style="left:697px;top:963px;width:18px;height:3px;background:#55f030"></div>
<div class="arr" style="left:721px;top:956px;border-top-color:#000"></div>
<!-- STATUS BAR -->
<div class="a sunk1" style="left:948px;top:979px;width:23px;height:15px"></div>
<div class="a sunk1" style="left:974px;top:979px;width:305px;height:15px"></div>
<div class="t" style="left:977px;top:980px">-68.695&nbsp; 51.183 Decimal Degrees</div>
<!-- TASKBAR -->
<div class="a" style="left:0;top:995px;width:1280px;height:1px;background:#fff"></div>
<div class="a raised" style="left:2px;top:998px;width:52px;height:22px"></div>
<svg class="a" style="left:5px;top:1001px" width="16" height="16"><path d="M1 3Q4 1 7 3L6 8Q3 6 0 8Z" fill="#e04020"/><path d="M8 3Q11 5 14 3L13 8Q10 10 7 8Z" fill="#30a030"/><path d="M0 9Q3 7 6 9L5 14Q2 12 -1 14Z" fill="#3060d0"/><path d="M7 9Q10 11 13 9L12 14Q9 16 6 14Z" fill="#e8c020"/></svg>
<div class="t" style="left:22px;top:1002px;font-weight:bold;font-size:12px">Start</div>
<svg class="a" style="left:61px;top:1001px" width="18" height="17"><ellipse cx="9" cy="9" rx="8" ry="6" fill="#e03010"/><text x="9" y="12" font-size="7" font-weight="bold" fill="#fff" text-anchor="middle" font-family="Liberation Sans, sans-serif">AIM</text></svg>
<svg class="a" style="left:85px;top:1000px" width="18" height="18"><circle cx="9" cy="10" r="6" fill="none" stroke="#2a78d8" stroke-width="3"/><path d="M4 10H14" stroke="#2a78d8" stroke-width="2"/><path d="M1 15Q6 3 17 3" stroke="#e8b020" stroke-width="1.500" fill="none"/></svg>
<svg class="a" style="left:107px;top:1000px" width="18" height="18"><circle cx="9" cy="9" r="7.500" fill="#e87818"/><circle cx="10" cy="8" r="4" fill="#3048b0"/><path d="M2 6Q5 12 11 13Q6 16 3 12Z" fill="#f8c030"/></svg>
<svg class="a" style="left:130px;top:1000px" width="18" height="18"><rect x="1.500" y="3.500" width="13" height="12" rx="2" fill="#d8e8ff" stroke="#2a60d0" stroke-width="1.500"/><path d="M5 12Q5 7 10 7" stroke="#2a60d0" stroke-width="2" fill="none"/><circle cx="14" cy="4" r="2" fill="#e05020"/></svg>
<div class="a raised" style="left:172px;top:998px;width:159px;height:22px"></div>
<svg class="a" style="left:176px;top:1002px" width="16" height="13"><path d="M.5 2.500H5L6.500 4H14.500V12.500H.5Z" fill="#f0d060" stroke="#a08020"/><path d="M.5 12.500L2.500 6H15.500L14.500 12.500Z" fill="#f8e898" stroke="#a08020"/></svg>
<div class="t" style="left:197px;top:1002px">GIS</div>
<div class="a dither" style="left:335px;top:998px;width:159px;height:22px;border:1px solid;border-color:#404040 #fff #fff #404040;box-shadow:inset 1px 1px 0 #808080"></div>
<svg class="a" style="left:340px;top:1001px" width="17" height="17" viewBox="0 0 17 17"><circle cx="7.500" cy="7.500" r="6.500" fill="#1030c0" stroke="#000" stroke-width="1"/><path d="M3 5 L7 2 L10 4 L9 8 L6 10 L4 8Z" fill="#20c020"/><path d="M9 10 L12 9 L11 12Z" fill="#20c020"/><path d="M10 10 L16 16" stroke="#40a0ff" stroke-width="2"/></svg>
<div class="t" style="left:359px;top:1003px;font-weight:bold;letter-spacing:0.35px">Hecht1681FinalProjec...</div>
<div class="a raised" style="left:498px;top:998px;width:159px;height:22px"></div>
<svg class="a" style="left:502px;top:1001px" width="16" height="16"><rect x="1" y="1" width="14" height="14" rx="2" fill="#fff" stroke="#e05020" stroke-width="1.500"/><rect x="4" y="5" width="10" height="9" fill="#e86030"/><circle cx="9" cy="9.500" r="2.500" fill="#fff"/></svg>
<div class="t" style="left:521px;top:1002px">Microsoft PowerPoint - [...</div>
<div class="a" style="left:1139px;top:1002px;width:17px;height:16px;background:#0a246a"></div>
<div class="t" style="left:1141px;top:1004px;color:#fff;font-size:10px;letter-spacing:-0.3px">EN</div>
<div class="sep" style="left:1160px;top:999px;height:22px"></div>
<div class="a sunk1" style="left:1165px;top:999px;width:112px;height:22px"></div>
<div class="t" style="left:1169px;top:1002px;font-weight:bold;font-size:12px">«</div>
<svg class="a" style="left:1183px;top:1001px" width="18" height="18"><path d="M2 10L10 6L16 10L8 16Z" fill="#c8c8c0" stroke="#404040" stroke-width=".8"/><path d="M3 2H9V0L14 4.500L9 9V6H3Z" fill="#30b030" stroke="#106010" stroke-width=".6" transform="rotate(35 8 5)"/></svg>
<div class="t" style="left:1202px;top:998px;font-weight:bold;font-size:19px;color:#f01010;line-height:22px">N</div>
<div class="t" style="left:1226px;top:1003px">3:14 PM</div>
</body></html>
